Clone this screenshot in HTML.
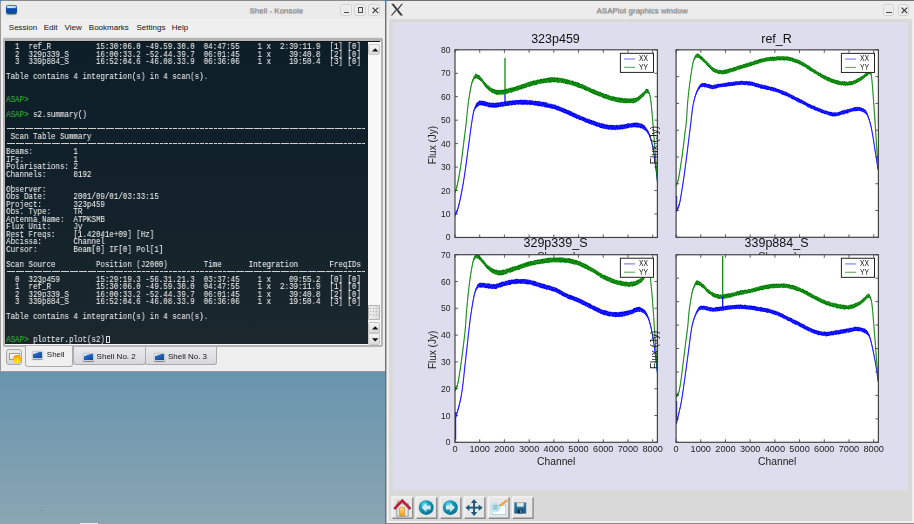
<!DOCTYPE html>
<html><head><meta charset="utf-8"><title>Shell - Konsole / ASAPlot</title>
<style>
*{margin:0;padding:0;box-sizing:border-box}
html,body{width:914px;height:524px;overflow:hidden;position:relative;font-family:"Liberation Sans",sans-serif;}
body{background:linear-gradient(180deg,#6793ad 0px,#6894ae 372px,#8aa6b2 524px);}
.abs{position:absolute}
/* konsole window */
#kwin{left:0;top:0;width:386px;height:372px;background:#efefef;border:1px solid #999;border-top-color:#8a8a8a;border-right-color:#8a8a8a;border-bottom-color:#9c9a98}
#ktitle{width:384px;height:17.5px;background:#ebebeb;}
#kicon{left:5.6px;top:5.2px;width:11px;height:8.4px;border-radius:2px;background:linear-gradient(180deg,#3f7fd0 0,#2a6cc0 35%,#0b4aa0 50%,#0f4e9e 100%);box-shadow:0 0.5px 1px rgba(0,0,0,.35)}
.ttl{color:#8a8a8a;font-size:8px;text-shadow:0 0.6px 0.9px rgba(90,90,90,.55);white-space:nowrap}
.tbtn{width:12px;height:12px;border:1px solid #d2d2d2;border-radius:3px;background:#ebebeb;box-shadow:inset 0 0 0 1px #f2f2f2}
#kmenu{width:384px;height:18px;background:#efefef;font-size:8px;color:#141414;}
#kmenu span{position:absolute;top:3.7px;white-space:nowrap}
#tframe{left:3px;top:37px;width:379.7px;height:310.2px;border-radius:2px;border-top:1.4px solid #e4e4e4;background:#b4b4b4}
#term{left:4.8px;top:41px;width:363.2px;height:303.2px;border-top:1px solid #151515;background:linear-gradient(180deg,#0d1e29 0,#12212a 50%,#1b272d 100%);overflow:hidden}
#tt{position:absolute;left:1.5px;top:2.0px;font-family:"Liberation Mono",monospace;font-size:8.6px;line-height:7.5px;color:#ececec;white-space:pre;transform:scaleX(0.871);transform-origin:0 0;opacity:0.999;will-change:transform;text-shadow:0.3px 0 0 rgba(236,236,236,0.3)}
#tt .g{color:#20aa20}
#tt .cur{outline:1px solid #e0e0e0;outline-offset:-1px}
#sbar{left:368px;top:41px;width:11.8px;height:303.2px;background:#f8f8f8;border-top:1px solid #151515}
.sbtn{width:11.4px;height:11.4px;left:0.4px;border:1px solid #c8c8c8;border-radius:2px;background:linear-gradient(180deg,#f6f6f6,#dadada)}
/* tabs */
.tab{height:17.6px;top:347px;border:1px solid #ababab;border-top:none;border-radius:0 0 3px 3px;background:linear-gradient(180deg,#ebebef,#d8d8dc);font-size:8px;color:#161616;white-space:nowrap}
.tab.act{top:346px;height:20.6px;background:#f0f0f0;border-color:#acacac}
.ticon{width:11px;height:8.4px;border-radius:1.5px;border:0.8px solid #c6ced8;background:linear-gradient(160deg,#f0f6ff 0,#c0d4f0 22%,#2a68bc 30%,#0a4a9e 100%);box-shadow:0 0.6px 1px rgba(0,0,0,.4)}
/* plot window */
#pwin{left:385px;top:0;width:530px;height:524px;background:#efefef;border:1px solid #6e6e6e;border-top-color:#707070;border-bottom-color:#8a8a8a}
#pframe{left:388.6px;top:19px;width:523px;height:501.6px;background:#d9d9d9}
#canvas{left:392.5px;top:22.2px;width:515.7px;height:467.8px;background:#dedded}
.pbtn{top:497px;width:21px;height:21px;border:1px solid #c3c3c3;border-right-color:#9a9a9a;border-bottom-color:#9a9a9a;background:#e6e6e6}
svg text.ti{font-size:12.5px;fill:#111}
svg text.tk{font-size:8.5px;fill:#222}
svg text.al{font-size:10.3px;fill:#222}
svg text.lg{font-size:8.4px;fill:#111}
svg text.fl{font-size:10px}
.dash{left:6.6px;width:359.2px;height:1px;background:repeating-linear-gradient(90deg,#cfcfcf 0,#cfcfcf 3.75px,rgba(120,130,135,.5) 3.75px,rgba(120,130,135,.5) 4.49px,#cfcfcf 4.49px,#cfcfcf 8.24px,#17232b 8.24px,#17232b 8.98px)}

</style></head><body>
<div class="abs" style="left:40.8px;top:510.2px;width:1.2px;height:1.2px;background:#4a6a7a;border-radius:50%"></div>
<div class="abs" style="left:80px;top:523px;width:18px;height:1px;background:#e8ecee"></div>
<div id="kwin" class="abs"></div>
<div class="abs" style="left:0;top:0;width:2px;height:2px;background:#3a8ac8;border-radius:1px"></div>
<div class="abs" style="left:384px;top:0;width:2px;height:2px;background:#3a8ac8;border-radius:1px"></div>
<div id="ktitle" class="abs" style="left:1px;top:1px"></div>
<div class="abs" style="left:1px;top:18.5px;width:384px;height:1px;background:#e4e4e4"></div>
<div id="kicon" class="abs"><div class="abs" style="left:1px;top:1px;width:9px;height:2.2px;background:linear-gradient(90deg,#f4f8ff,#c8dcf4);border-radius:1px;opacity:.9"></div></div>
<div class="abs ttl" style="left:249.4px;top:6.4px">Shell - Konsole</div>
<div class="abs tbtn" style="left:339.7px;top:4px"><div class="abs" style="left:3px;top:6.6px;width:5px;height:1.7px;background:#4a4a4a"></div></div>
<div class="abs tbtn" style="left:354px;top:4px"><div class="abs" style="left:2.6px;top:2.2px;width:5.8px;height:5.8px;border:1.2px solid #4a4a4a"></div></div>
<div class="abs tbtn" style="left:368.4px;top:4px"><svg class="abs" style="left:2.2px;top:2.2px" width="7" height="7"><path d="M0.6 0.6 L6.2 6.2 M6.2 0.6 L0.6 6.2" stroke="#3a3a3a" stroke-width="1.15"/></svg></div>
<div id="kmenu" class="abs" style="left:1px;top:19px">
<span style="left:7.8px">Session</span><span style="left:42.7px">Edit</span><span style="left:63.6px">View</span><span style="left:87.8px">Bookmarks</span><span style="left:135.5px">Settings</span><span style="left:170.8px">Help</span>
</div>
<div id="tframe" class="abs"></div>
<div class="abs" style="left:4.6px;top:41px;width:376.2px;height:304px;background:#f8f8f8"></div>
<div id="term" class="abs"><div id="tt">  1  ref_R          15:30:06.0 -49.59.30.0  04:47:55    1 x  2:39:11.9  [1] [0]
  2  329p339_S      16:00:33.2 -52.44.39.7  06:01:45    1 x    39:40.8  [2] [0]
  3  339p884_S      16:52:04.6 -46.08.33.9  06:36:06    1 x    19:50.4  [3] [0]

Table contains 4 integration(s) in 4 scan(s).


<span class="g">ASAP&gt;</span>

<span class="g">ASAP&gt;</span> s2.summary()


 Scan Table Summary

Beams:         1
IFs:           1
Polarisations: 2
Channels:      8192

Observer:
Obs Date:      2001/09/01/03:33:15
Project:       323p459
Obs. Type:     TR
Antenna Name:  ATPKSMB
Flux Unit:     Jy
Rest Freqs:    [1.42041e+09] [Hz]
Abcissa:       Channel
Cursor:        Beam[0] IF[0] Pol[1]

Scan Source         Position (J2000)        Time      Integration       FreqIDs

  0  323p459        15:29:19.3 -56.31.21.3  03:37:45    1 x    09:55.2  [0] [0]
  1  ref_R          15:30:06.0 -49.59.30.0  04:47:55    1 x  2:39:11.9  [1] [0]
  2  329p339_S      16:00:33.2 -52.44.39.7  06:01:45    1 x    39:40.8  [2] [0]
  3  339p884_S      16:52:04.6 -46.08.33.9  06:36:06    1 x    19:50.4  [3] [0]

Table contains 4 integration(s) in 4 scan(s).


<span class="g">ASAP&gt;</span> plotter.plot(s2)</div></div>
<div class="abs dash" style="top:127.7px"></div><div class="abs dash" style="top:143.0px"></div><div class="abs dash" style="top:270.9px"></div>
<div class="abs" style="left:105.9px;top:335.5px;width:4.5px;height:7.4px;border:1px solid #dcdcdc"></div>
<div id="sbar" class="abs">
<div class="abs sbtn" style="top:1.7px"><svg class="abs" style="left:2.2px;top:3.6px" width="7" height="4"><path d="M0 3.6 L3.2 0.2 L6.4 3.6Z" fill="#111"/></svg></div>
<div class="abs sbtn" style="top:263px;height:15px;border-radius:1px;border-color:#b4b4b4;background:linear-gradient(90deg,#eeeeee,#dcdcdc)"><svg class="abs" style="left:-0.6px;top:1.4px" width="10" height="10"><g fill="#a4a4a4"><circle cx="1.5" cy="1.5" r="0.6"/><circle cx="4.4" cy="1.5" r="0.6"/><circle cx="7.3" cy="1.5" r="0.6"/><circle cx="1.5" cy="4.6" r="0.6"/><circle cx="4.4" cy="4.6" r="0.6"/><circle cx="7.3" cy="4.6" r="0.6"/><circle cx="1.5" cy="7.8" r="0.6"/><circle cx="4.4" cy="7.8" r="0.6"/><circle cx="7.3" cy="7.8" r="0.6"/></g></svg></div>
<div class="abs sbtn" style="top:280px;border-radius:2px 2px 0 0"><svg class="abs" style="left:2.2px;top:3.4px" width="7" height="4"><path d="M0 3.6 L3.2 0.2 L6.4 3.6Z" fill="#111"/></svg></div>
<div class="abs sbtn" style="top:291.4px;border-radius:0 0 2px 2px"><svg class="abs" style="left:2.2px;top:3.4px" width="7" height="4"><path d="M0 0.2 L3.2 3.6 L6.4 0.2Z" fill="#111"/></svg></div>
</div>
<!-- tabs -->
<div class="abs" style="left:6.4px;top:349.2px;width:16px;height:15.7px;border:1px solid #a9a9a9;border-radius:3px;background:linear-gradient(180deg,#ececec,#d2d2d2)">
 <div class="abs" style="left:1.5px;top:2.6px;width:11px;height:7px;background:linear-gradient(180deg,#fbfbfb,#e6e6e6);border:1px solid #9c9c9c"></div>
 <div class="abs" style="left:5.6px;top:5px;width:7.8px;height:7.8px;border-radius:50%;background:radial-gradient(circle at 50% 80%,#fff000 0,#ffc400 45%,#ff7a00 100%)"></div>
</div>
<div class="abs tab" style="left:145.3px;width:72px"><div class="abs ticon" style="left:7.6px;top:5.6px"></div><span class="abs" style="left:21.6px;top:4.8px">Shell No. 3</span></div>
<div class="abs tab" style="left:73px;width:72.5px"><div class="abs ticon" style="left:8.6px;top:5.6px"></div><span class="abs" style="left:22.6px;top:4.8px">Shell No. 2</span></div>
<div class="abs tab act" style="left:24.8px;width:48.6px"><div class="abs ticon" style="left:6.2px;top:5px"></div><span class="abs" style="left:21px;top:4.2px">Shell</span></div>

<!-- plot window -->
<div id="pwin" class="abs"></div>
<div class="abs" style="left:386px;top:1px;width:527px;height:18px;background:#ececec"></div>
<div class="abs" style="left:384.5px;top:0;width:2px;height:2px;background:#3a8ac8;border-radius:1px"></div>
<svg class="abs" style="left:390px;top:3px" width="14" height="14" viewBox="390 3 14 14"><path d="M391.2 3.8 H393.6 L403 15.6 H400.4 Z" fill="#3c3c3c"/><path d="M403 3.8 H401.5 L396.4 10 L397.3 11 Z M390.8 15.6 H392.3 L396.4 10.8 L395.5 9.8 Z" fill="#484848"/></svg>
<div class="abs ttl" style="left:596.5px;top:6.2px">ASAPlot graphics window</div>
<div class="abs tbtn" style="left:882.6px;top:3.8px;width:11.4px;height:12.2px"><div class="abs" style="left:2.6px;top:7.2px;width:6px;height:1.3px;background:#4a4a4a"></div></div>
<div class="abs tbtn" style="left:897.5px;top:3.8px;width:11.5px;height:12.2px"><svg class="abs" style="left:2.1px;top:2.1px" width="7" height="7"><path d="M0.6 0.6 L6.2 6.2 M6.2 0.6 L0.6 6.2" stroke="#333" stroke-width="1.15"/></svg></div>
<div id="pframe" class="abs"></div>
<div class="abs" style="left:386px;top:1px;width:1px;height:522px;background:#b8b8b8"></div>
<div id="canvas" class="abs"></div>
<svg class="abs" style="left:0;top:0" width="914" height="524">
<defs>
<clipPath id="clip_tl"><rect x="455.0" y="49.8" width="202.39999999999998" height="187.64999999999998"/></clipPath>
<clipPath id="clip_tr"><rect x="676.1" y="49.85" width="202.29999999999995" height="187.45000000000002"/></clipPath>
<clipPath id="clip_bl"><rect x="455.0" y="254.7" width="202.39999999999998" height="187.60000000000002"/></clipPath>
<clipPath id="clip_br"><rect x="676.1" y="254.75" width="202.29999999999995" height="187.55"/></clipPath>
</defs>
<text x="555.50" y="42.50" class="ti" text-anchor="middle">323p459</text>
<text x="450.5" y="240.45" class="tk" text-anchor="end" textLength="4.75" lengthAdjust="spacingAndGlyphs">0</text>
<text x="450.5" y="216.99" class="tk" text-anchor="end" textLength="9.50" lengthAdjust="spacingAndGlyphs">10</text>
<text x="450.5" y="193.54" class="tk" text-anchor="end" textLength="9.50" lengthAdjust="spacingAndGlyphs">20</text>
<text x="450.5" y="170.08" class="tk" text-anchor="end" textLength="9.50" lengthAdjust="spacingAndGlyphs">30</text>
<text x="450.5" y="146.62" class="tk" text-anchor="end" textLength="9.50" lengthAdjust="spacingAndGlyphs">40</text>
<text x="450.5" y="123.17" class="tk" text-anchor="end" textLength="9.50" lengthAdjust="spacingAndGlyphs">50</text>
<text x="450.5" y="99.71" class="tk" text-anchor="end" textLength="9.50" lengthAdjust="spacingAndGlyphs">60</text>
<text x="450.5" y="76.26" class="tk" text-anchor="end" textLength="9.50" lengthAdjust="spacingAndGlyphs">70</text>
<text x="450.5" y="52.80" class="tk" text-anchor="end" textLength="9.50" lengthAdjust="spacingAndGlyphs">80</text>
<text x="435.70" y="145.03" class="al fl" text-anchor="middle" transform="rotate(-90 435.70 145.03)">Flux (Jy)</text>
<rect x="455.0" y="49.8" width="202.39999999999998" height="187.64999999999998" fill="#fff"/>
<g clip-path="url(#clip_tl)">
<polygon points="455.00,213.24 455.50,212.06 456.00,211.22 456.50,210.65 457.00,209.60 457.50,208.16 458.00,207.22 458.50,205.17 459.00,203.30 459.50,201.38 460.00,199.25 460.50,196.95 461.00,194.54 461.50,191.96 462.00,189.32 462.50,186.57 463.00,183.61 463.50,180.74 464.00,177.74 464.50,174.49 465.00,171.44 465.50,168.01 466.00,164.28 466.50,160.66 467.00,156.83 467.50,152.89 468.00,149.11 468.50,145.32 469.00,141.69 469.50,137.99 470.00,134.27 470.50,130.66 471.00,127.13 471.50,123.64 472.00,120.28 472.50,117.23 473.00,114.14 473.50,111.60 474.00,109.07 474.50,107.62 475.00,106.16 475.50,104.64 476.00,104.01 476.50,103.04 477.00,102.61 477.50,102.02 478.00,102.13 478.50,101.33 479.00,100.94 479.50,100.32 480.00,100.66 480.50,100.44 481.00,100.95 481.50,100.70 482.00,100.81 482.50,101.04 483.00,100.55 483.50,101.05 484.00,100.65 484.50,101.13 485.00,101.26 485.50,101.37 486.00,101.48 486.50,102.09 487.00,101.97 487.50,102.28 488.00,102.27 488.50,102.66 489.00,102.00 489.50,102.79 490.00,102.48 490.50,102.90 491.00,102.46 491.50,102.71 492.00,103.24 492.50,102.63 493.00,102.56 493.50,102.60 494.00,102.89 494.50,103.25 495.00,103.17 495.50,102.47 496.00,102.76 496.50,103.04 497.00,102.34 497.50,102.49 498.00,102.49 498.50,102.58 499.00,102.47 499.50,102.54 500.00,102.64 500.50,101.80 501.00,102.08 501.50,101.93 502.00,102.05 502.50,101.58 503.00,102.15 503.50,101.77 504.00,102.00 504.50,101.85 505.00,101.03 505.50,101.25 506.00,101.40 506.50,101.25 507.00,100.88 507.50,101.29 508.00,101.00 508.50,100.86 509.00,101.09 509.50,100.87 510.00,100.59 510.50,100.40 511.00,101.01 511.50,100.25 512.00,101.02 512.50,100.29 513.00,100.18 513.50,100.72 514.00,100.41 514.50,100.00 515.00,100.67 515.50,100.07 516.00,99.88 516.50,100.08 517.00,99.85 517.50,100.27 518.00,100.26 518.50,100.08 519.00,100.23 519.50,100.06 520.00,99.50 520.50,99.83 521.00,100.04 521.50,100.10 522.00,99.49 522.50,99.95 523.00,99.48 523.50,99.91 524.00,99.93 524.50,99.61 525.00,99.77 525.50,99.95 526.00,100.12 526.50,99.74 527.00,100.20 527.50,99.78 528.00,100.58 528.50,100.30 529.00,100.25 529.50,99.91 530.00,100.58 530.50,100.12 531.00,100.28 531.50,100.28 532.00,100.41 532.50,100.14 533.00,100.77 533.50,100.76 534.00,100.98 534.50,101.17 535.00,101.08 535.50,100.50 536.00,100.63 536.50,101.34 537.00,100.96 537.50,101.13 538.00,101.10 538.50,101.11 539.00,101.49 539.50,100.98 540.00,101.49 540.50,101.43 541.00,101.50 541.50,101.99 542.00,102.18 542.50,101.96 543.00,101.73 543.50,101.78 544.00,101.94 544.50,102.59 545.00,101.97 545.50,102.17 546.00,102.20 546.50,102.62 547.00,102.37 547.50,103.26 548.00,103.38 548.50,103.50 549.00,103.41 549.50,103.53 550.00,103.71 550.50,103.49 551.00,104.09 551.50,103.73 552.00,104.24 552.50,103.93 553.00,104.66 553.50,104.54 554.00,104.14 554.50,104.65 555.00,104.57 555.50,104.87 556.00,105.09 556.50,105.63 557.00,105.48 557.50,106.14 558.00,105.65 558.50,105.71 559.00,106.00 559.50,106.91 560.00,106.86 560.50,107.09 561.00,107.48 561.50,107.24 562.00,107.30 562.50,107.94 563.00,107.67 563.50,107.95 564.00,108.75 564.50,108.41 565.00,108.52 565.50,109.34 566.00,109.23 566.50,109.38 567.00,109.62 567.50,110.28 568.00,110.00 568.50,110.25 569.00,110.30 569.50,110.54 570.00,111.18 570.50,111.06 571.00,111.15 571.50,111.36 572.00,112.23 572.50,112.57 573.00,112.25 573.50,112.86 574.00,112.78 574.50,112.67 575.00,113.40 575.50,113.73 576.00,113.78 576.50,113.82 577.00,114.53 577.50,114.51 578.00,114.94 578.50,114.69 579.00,114.76 579.50,115.37 580.00,115.58 580.50,115.64 581.00,116.14 581.50,116.31 582.00,116.45 582.50,116.54 583.00,117.08 583.50,116.69 584.00,117.05 584.50,117.50 585.00,117.89 585.50,117.49 586.00,118.24 586.50,118.44 587.00,118.64 587.50,118.88 588.00,118.34 588.50,119.10 589.00,119.25 589.50,118.98 590.00,119.35 590.50,119.92 591.00,119.88 591.50,119.67 592.00,120.30 592.50,120.18 593.00,120.91 593.50,120.53 594.00,120.67 594.50,120.81 595.00,121.13 595.50,121.58 596.00,122.04 596.50,121.81 597.00,121.78 597.50,122.46 598.00,122.57 598.50,122.50 599.00,122.48 599.50,122.51 600.00,123.35 600.50,123.45 601.00,123.05 601.50,123.33 602.00,123.40 602.50,123.29 603.00,123.46 603.50,123.66 604.00,123.83 604.50,124.28 605.00,124.15 605.50,124.65 606.00,124.22 606.50,124.30 607.00,124.41 607.50,124.73 608.00,124.86 608.50,124.88 609.00,125.29 609.50,124.61 610.00,124.93 610.50,125.11 611.00,125.00 611.50,124.88 612.00,125.21 612.50,124.83 613.00,124.77 613.50,125.26 614.00,125.50 614.50,124.94 615.00,124.74 615.50,125.49 616.00,124.98 616.50,124.87 617.00,124.76 617.50,125.46 618.00,125.45 618.50,124.60 619.00,125.34 619.50,125.23 620.00,124.81 620.50,124.86 621.00,124.52 621.50,124.94 622.00,124.21 622.50,124.76 623.00,124.18 623.50,124.72 624.00,124.27 624.50,124.57 625.00,124.23 625.50,124.14 626.00,123.68 626.50,123.83 627.00,124.10 627.50,123.17 628.00,123.18 628.50,123.08 629.00,123.61 629.50,123.41 630.00,123.49 630.50,123.51 631.00,123.52 631.50,123.01 632.00,123.27 632.50,123.14 633.00,122.45 633.50,122.72 634.00,122.93 634.50,122.45 635.00,122.78 635.50,122.54 636.00,122.78 636.50,122.62 637.00,122.58 637.50,122.73 638.00,122.94 638.50,122.68 639.00,122.70 639.50,123.44 640.00,123.61 640.50,123.78 641.00,123.18 641.50,123.40 642.00,124.24 642.50,123.84 643.00,124.78 643.50,124.84 644.00,125.22 644.50,125.30 645.00,126.49 645.50,126.79 646.00,127.16 646.50,128.24 647.00,128.86 647.50,129.53 648.00,130.19 648.50,131.31 649.00,132.40 649.50,133.68 650.00,135.09 650.50,136.54 651.00,138.29 651.50,140.11 652.00,142.30 652.50,144.58 653.00,146.90 653.50,150.09 654.00,153.44 654.50,157.40 655.00,161.39 655.50,164.95 656.00,168.86 656.50,172.58 657.00,176.50 657.50,180.14 657.50,181.40 657.00,177.70 656.50,173.87 656.00,169.98 655.50,166.22 655.00,162.66 654.50,158.68 654.00,154.85 653.50,151.39 653.00,148.73 652.50,146.23 652.00,144.49 651.50,142.53 651.00,140.91 650.50,139.36 650.00,137.98 649.50,136.86 649.00,135.50 648.50,134.87 648.00,134.22 647.50,132.84 647.00,132.79 646.50,131.73 646.00,131.00 645.50,130.51 645.00,130.72 644.50,129.68 644.00,129.80 643.50,129.73 643.00,128.73 642.50,128.79 642.00,128.78 641.50,128.09 641.00,128.62 640.50,128.17 640.00,127.89 639.50,127.50 639.00,127.49 638.50,127.83 638.00,127.36 637.50,127.83 637.00,127.73 636.50,127.24 636.00,127.52 635.50,127.18 635.00,127.05 634.50,127.53 634.00,127.19 633.50,126.98 633.00,127.27 632.50,127.62 632.00,127.49 631.50,127.67 631.00,127.45 630.50,127.61 630.00,127.53 629.50,127.81 629.00,127.75 628.50,127.84 628.00,128.22 627.50,128.44 627.00,128.34 626.50,128.17 626.00,128.89 625.50,128.21 625.00,128.99 624.50,128.66 624.00,129.20 623.50,128.67 623.00,129.33 622.50,129.62 622.00,129.14 621.50,129.03 621.00,129.37 620.50,129.72 620.00,129.59 619.50,129.62 619.00,129.39 618.50,129.35 618.00,130.16 617.50,129.79 617.00,129.57 616.50,129.71 616.00,129.46 615.50,130.25 615.00,130.19 614.50,129.58 614.00,129.65 613.50,129.50 613.00,130.23 612.50,130.11 612.00,129.45 611.50,129.83 611.00,129.91 610.50,129.74 610.00,129.54 609.50,129.40 609.00,129.47 608.50,129.71 608.00,129.48 607.50,129.04 607.00,129.58 606.50,129.33 606.00,128.84 605.50,129.04 605.00,129.03 604.50,128.59 604.00,128.80 603.50,128.91 603.00,128.60 602.50,128.62 602.00,128.32 601.50,127.96 601.00,128.10 600.50,127.89 600.00,128.06 599.50,127.56 599.00,126.96 598.50,126.86 598.00,126.89 597.50,126.41 597.00,126.48 596.50,126.87 596.00,126.23 595.50,126.06 595.00,126.18 594.50,125.52 594.00,125.16 593.50,125.59 593.00,125.06 592.50,125.01 592.00,124.37 591.50,124.96 591.00,124.77 590.50,124.35 590.00,123.69 589.50,124.16 589.00,123.68 588.50,123.85 588.00,122.98 587.50,122.74 587.00,122.93 586.50,122.79 586.00,122.33 585.50,122.70 585.00,122.34 584.50,121.67 584.00,121.69 583.50,121.13 583.00,121.03 582.50,120.91 582.00,120.65 581.50,120.32 581.00,120.31 580.50,120.09 580.00,120.02 579.50,120.17 579.00,119.62 578.50,119.23 578.00,119.42 577.50,118.73 577.00,118.96 576.50,118.96 576.00,117.91 575.50,118.00 575.00,118.05 574.50,117.85 574.00,117.31 573.50,117.40 573.00,117.09 572.50,116.97 572.00,116.33 571.50,116.60 571.00,116.02 570.50,115.95 570.00,115.45 569.50,115.49 569.00,115.41 568.50,114.76 568.00,114.37 567.50,114.83 567.00,114.36 566.50,113.69 566.00,113.90 565.50,113.33 565.00,113.73 564.50,112.91 564.00,113.20 563.50,112.60 563.00,112.97 562.50,112.17 562.00,111.91 561.50,112.11 561.00,112.00 560.50,111.22 560.00,111.10 559.50,111.38 559.00,110.49 558.50,110.64 558.00,110.85 557.50,110.51 557.00,110.52 556.50,109.79 556.00,110.19 555.50,109.60 555.00,109.31 554.50,109.05 554.00,108.85 553.50,108.65 553.00,108.74 552.50,108.97 552.00,108.92 551.50,108.40 551.00,108.51 550.50,108.42 550.00,107.66 549.50,107.99 549.00,107.71 548.50,107.84 548.00,108.04 547.50,107.59 547.00,107.58 546.50,107.46 546.00,107.32 545.50,107.55 545.00,107.39 544.50,107.22 544.00,106.41 543.50,106.57 543.00,106.30 542.50,106.90 542.00,106.88 541.50,106.13 541.00,106.55 540.50,106.32 540.00,106.30 539.50,105.67 539.00,106.16 538.50,106.29 538.00,106.25 537.50,105.50 537.00,106.03 536.50,105.61 536.00,105.54 535.50,105.67 535.00,105.23 534.50,105.72 534.00,105.20 533.50,105.06 533.00,105.27 532.50,104.83 532.00,105.19 531.50,104.87 531.00,104.85 530.50,104.66 530.00,105.46 529.50,104.81 529.00,104.67 528.50,104.60 528.00,104.56 527.50,104.98 527.00,104.76 526.50,104.46 526.00,104.74 525.50,104.66 525.00,104.47 524.50,104.52 524.00,104.87 523.50,104.87 523.00,104.72 522.50,104.74 522.00,104.97 521.50,104.58 521.00,104.83 520.50,104.44 520.00,104.28 519.50,104.35 519.00,104.83 518.50,104.90 518.00,104.62 517.50,104.33 517.00,104.53 516.50,104.62 516.00,104.64 515.50,105.30 515.00,104.66 514.50,105.10 514.00,105.06 513.50,105.07 513.00,104.93 512.50,105.33 512.00,105.16 511.50,105.46 511.00,105.16 510.50,105.62 510.00,105.12 509.50,105.53 509.00,105.93 508.50,105.92 508.00,105.38 507.50,106.08 507.00,106.09 506.50,105.80 506.00,105.76 505.50,106.13 505.00,106.03 504.50,106.17 504.00,106.51 503.50,106.32 503.00,106.71 502.50,106.79 502.00,106.50 501.50,106.38 501.00,106.73 500.50,106.65 500.00,107.24 499.50,106.61 499.00,107.24 498.50,107.15 498.00,107.58 497.50,107.10 497.00,107.27 496.50,107.79 496.00,107.90 495.50,107.62 495.00,107.48 494.50,107.58 494.00,107.52 493.50,108.11 493.00,107.60 492.50,107.45 492.00,107.42 491.50,107.27 491.00,107.41 490.50,107.48 490.00,107.47 489.50,107.35 489.00,107.14 488.50,107.04 488.00,107.16 487.50,106.61 487.00,106.16 486.50,106.62 486.00,106.24 485.50,106.40 485.00,106.31 484.50,105.76 484.00,106.03 483.50,105.47 483.00,105.51 482.50,105.64 482.00,105.32 481.50,105.19 481.00,105.47 480.50,105.13 480.00,105.28 479.50,105.21 479.00,105.58 478.50,105.91 478.00,106.40 477.50,106.63 477.00,106.92 476.50,107.64 476.00,107.95 475.50,108.66 475.00,109.40 474.50,110.18 474.00,111.39 473.50,113.46 473.00,115.61 472.50,118.53 472.00,121.77 471.50,124.81 471.00,128.32 470.50,131.88 470.00,135.49 469.50,139.10 469.00,143.04 468.50,146.66 468.00,150.34 467.50,153.99 467.00,157.97 466.50,161.75 466.00,165.58 465.50,169.18 465.00,172.69 464.50,176.14 464.00,179.08 463.50,182.36 463.00,185.16 462.50,188.25 462.00,190.97 461.50,193.53 461.00,196.26 460.50,198.62 460.00,201.18 459.50,203.41 459.00,205.46 458.50,207.49 458.00,209.62 457.50,211.17 457.00,212.62 456.50,213.91 456.00,214.64 455.50,215.92 455.00,216.73" fill="#0000ff" stroke="none"/>
<polyline points="455.00,215.00 455.50,214.02 456.00,213.09 456.50,212.10 457.00,210.99 457.50,209.72 458.00,208.20 458.50,206.41 459.00,204.45 459.50,202.35 460.00,200.12 460.50,197.78 461.00,195.33 461.50,192.78 462.00,190.13 462.50,187.38 463.00,184.52 463.50,181.56 464.00,178.49 464.50,175.32 465.00,172.03 465.50,168.56 466.00,164.92 466.50,161.15 467.00,157.32 467.50,153.49 468.00,149.72 468.50,146.03 469.00,142.33 469.50,138.60 470.00,134.89 470.50,131.23 471.00,127.66 471.50,124.24 472.00,121.04 472.50,117.88 473.00,114.90 473.50,112.37 474.00,110.37 474.50,108.82 475.00,107.63 475.50,106.71 476.00,105.97 476.50,105.35 477.00,104.83 477.50,104.38 478.00,103.96 478.50,103.56 479.00,103.20 479.50,102.97 480.00,102.88 480.50,102.87 481.00,102.90 481.50,102.95 482.00,103.00 482.50,103.07 483.00,103.17 483.50,103.28 484.00,103.41 484.50,103.54 485.00,103.68 485.50,103.82 486.00,103.96 486.50,104.10 487.00,104.24 487.50,104.38 488.00,104.51 488.50,104.64 489.00,104.76 489.50,104.87 490.00,104.97 490.50,105.06 491.00,105.14 491.50,105.21 492.00,105.26 492.50,105.29 493.00,105.31 493.50,105.31 494.00,105.30 494.50,105.28 495.00,105.25 495.50,105.20 496.00,105.15 496.50,105.10 497.00,105.03 497.50,104.96 498.00,104.89 498.50,104.81 499.00,104.73 499.50,104.65 500.00,104.57 500.50,104.48 501.00,104.40 501.50,104.31 502.00,104.23 502.50,104.15 503.00,104.07 503.50,104.00 504.00,103.93 504.50,103.86 505.00,103.80 505.50,103.74 506.00,103.68 506.50,103.62 507.00,103.56 507.50,103.49 508.00,103.43 508.50,103.37 509.00,103.30 509.50,103.24 510.00,103.17 510.50,103.11 511.00,103.04 511.50,102.98 512.00,102.92 512.50,102.86 513.00,102.80 513.50,102.74 514.00,102.69 514.50,102.63 515.00,102.58 515.50,102.53 516.00,102.49 516.50,102.44 517.00,102.40 517.50,102.37 518.00,102.34 518.50,102.31 519.00,102.29 519.50,102.27 520.00,102.26 520.50,102.25 521.00,102.24 521.50,102.24 522.00,102.24 522.50,102.25 523.00,102.26 523.50,102.28 524.00,102.29 524.50,102.32 525.00,102.34 525.50,102.37 526.00,102.40 526.50,102.43 527.00,102.47 527.50,102.50 528.00,102.54 528.50,102.58 529.00,102.62 529.50,102.66 530.00,102.70 530.50,102.74 531.00,102.78 531.50,102.83 532.00,102.87 532.50,102.92 533.00,102.96 533.50,103.01 534.00,103.06 534.50,103.11 535.00,103.17 535.50,103.22 536.00,103.28 536.50,103.34 537.00,103.40 537.50,103.46 538.00,103.53 538.50,103.59 539.00,103.66 539.50,103.73 540.00,103.81 540.50,103.88 541.00,103.96 541.50,104.05 542.00,104.13 542.50,104.22 543.00,104.31 543.50,104.40 544.00,104.49 544.50,104.58 545.00,104.68 545.50,104.78 546.00,104.88 546.50,104.98 547.00,105.08 547.50,105.19 548.00,105.30 548.50,105.41 549.00,105.52 549.50,105.64 550.00,105.76 550.50,105.88 551.00,106.01 551.50,106.14 552.00,106.28 552.50,106.41 553.00,106.56 553.50,106.70 554.00,106.85 554.50,107.01 555.00,107.16 555.50,107.33 556.00,107.50 556.50,107.67 557.00,107.85 557.50,108.04 558.00,108.23 558.50,108.42 559.00,108.62 559.50,108.82 560.00,109.02 560.50,109.23 561.00,109.44 561.50,109.65 562.00,109.86 562.50,110.07 563.00,110.29 563.50,110.51 564.00,110.72 564.50,110.94 565.00,111.16 565.50,111.37 566.00,111.59 566.50,111.80 567.00,112.02 567.50,112.23 568.00,112.44 568.50,112.66 569.00,112.88 569.50,113.10 570.00,113.32 570.50,113.54 571.00,113.77 571.50,113.99 572.00,114.22 572.50,114.45 573.00,114.67 573.50,114.90 574.00,115.13 574.50,115.36 575.00,115.58 575.50,115.81 576.00,116.03 576.50,116.26 577.00,116.48 577.50,116.70 578.00,116.92 578.50,117.13 579.00,117.35 579.50,117.56 580.00,117.77 580.50,117.98 581.00,118.18 581.50,118.39 582.00,118.60 582.50,118.81 583.00,119.01 583.50,119.22 584.00,119.42 584.50,119.62 585.00,119.82 585.50,120.02 586.00,120.22 586.50,120.42 587.00,120.62 587.50,120.81 588.00,121.01 588.50,121.20 589.00,121.39 589.50,121.58 590.00,121.77 590.50,121.95 591.00,122.14 591.50,122.32 592.00,122.50 592.50,122.68 593.00,122.86 593.50,123.05 594.00,123.23 594.50,123.41 595.00,123.60 595.50,123.78 596.00,123.96 596.50,124.14 597.00,124.32 597.50,124.50 598.00,124.67 598.50,124.85 599.00,125.01 599.50,125.18 600.00,125.34 600.50,125.49 601.00,125.64 601.50,125.79 602.00,125.93 602.50,126.06 603.00,126.19 603.50,126.31 604.00,126.42 604.50,126.52 605.00,126.62 605.50,126.71 606.00,126.80 606.50,126.88 607.00,126.95 607.50,127.03 608.00,127.09 608.50,127.16 609.00,127.21 609.50,127.26 610.00,127.31 610.50,127.35 611.00,127.39 611.50,127.43 612.00,127.45 612.50,127.48 613.00,127.50 613.50,127.51 614.00,127.52 614.50,127.53 615.00,127.53 615.50,127.53 616.00,127.52 616.50,127.51 617.00,127.49 617.50,127.47 618.00,127.43 618.50,127.39 619.00,127.34 619.50,127.28 620.00,127.22 620.50,127.16 621.00,127.08 621.50,127.01 622.00,126.93 622.50,126.85 623.00,126.76 623.50,126.67 624.00,126.58 624.50,126.49 625.00,126.40 625.50,126.31 626.00,126.22 626.50,126.13 627.00,126.04 627.50,125.95 628.00,125.87 628.50,125.80 629.00,125.73 629.50,125.66 630.00,125.59 630.50,125.52 631.00,125.44 631.50,125.36 632.00,125.28 632.50,125.20 633.00,125.12 633.50,125.05 634.00,124.99 634.50,124.95 635.00,124.92 635.50,124.92 636.00,124.94 636.50,124.98 637.00,125.04 637.50,125.11 638.00,125.19 638.50,125.28 639.00,125.38 639.50,125.49 640.00,125.62 640.50,125.76 641.00,125.92 641.50,126.10 642.00,126.30 642.50,126.53 643.00,126.79 643.50,127.08 644.00,127.43 644.50,127.82 645.00,128.25 645.50,128.74 646.00,129.28 646.50,129.89 647.00,130.57 647.50,131.34 648.00,132.19 648.50,133.14 649.00,134.18 649.50,135.33 650.00,136.60 650.50,138.02 651.00,139.59 651.50,141.33 652.00,143.26 652.50,145.40 653.00,147.81 653.50,150.71 654.00,154.16 654.50,158.01 655.00,161.95 655.50,165.66 656.00,169.39 656.50,173.18 657.00,177.00 657.50,180.84" fill="none" stroke="#0000ff" stroke-width="1.1"/>
<polyline points="455.00,216.08 456.30,212.27 457.60,209.17 458.90,205.24 460.20,199.14 461.50,192.72 462.80,185.54 464.10,177.79 465.40,168.92 466.70,159.24 468.00,149.94 469.30,140.15 470.60,130.67 471.90,121.98 473.20,113.55 474.50,108.28 475.80,105.65 477.10,104.14 478.40,104.47 479.70,102.51 481.00,102.30 482.30,103.51 483.60,102.24 484.90,102.32 486.20,104.69 487.50,105.25 488.80,104.02 490.10,105.45 491.40,103.60 492.70,104.97 494.00,105.57 495.30,104.38 496.60,104.57 497.90,105.28 499.20,105.01 500.50,103.30 501.80,104.97 503.10,102.62 504.40,105.48 505.70,102.70 507.00,102.72 508.30,102.37 509.60,104.90 510.90,102.33 512.20,103.26 513.50,104.42 514.80,104.14 516.10,100.91 517.40,102.45 518.70,102.65 520.00,102.95 521.30,101.68 522.60,101.66 523.90,100.60 525.20,100.76 526.50,102.60 527.80,101.08 529.10,101.61 530.40,102.16 531.70,101.38 533.00,101.36 534.30,104.55 535.60,103.01 536.90,102.38 538.20,104.26 539.50,102.06 540.80,103.06 542.10,105.72 543.40,105.73 544.70,105.09 546.00,103.49 547.30,104.53 548.60,103.83 549.90,104.78 551.20,104.45 552.50,105.15 553.80,107.24 555.10,105.85 556.40,106.48 557.70,109.47 559.00,108.07 560.30,108.59 561.60,108.31 562.90,111.24 564.20,111.40 565.50,111.53 566.80,112.32 568.10,111.15 569.40,112.25 570.70,113.91 572.00,115.73 573.30,115.87 574.60,115.87 575.90,116.05 577.20,114.95 578.50,118.44 579.80,116.23 581.10,116.98 582.40,119.41 583.70,120.34 585.00,120.78 586.30,120.18 587.60,119.77 588.90,119.79 590.20,123.02 591.50,123.93 592.80,121.93 594.10,124.50 595.40,123.42 596.70,123.58 598.00,124.69 599.30,123.45 600.60,125.33 601.90,124.88 603.20,126.96 604.50,126.53 605.80,128.02 607.10,128.32 608.40,126.52 609.70,126.53 611.00,128.89 612.30,127.48 613.60,126.13 614.90,125.98 616.20,129.19 617.50,127.74 618.80,125.84 620.10,127.25 621.40,127.04 622.70,126.59 624.00,128.12 625.30,127.87 626.60,124.83 627.90,124.70 629.20,125.38 630.50,126.66 631.80,125.73 633.10,125.89 634.40,125.22 635.70,123.93 637.00,126.12 638.30,123.58 639.60,126.19 640.90,124.85 642.20,126.30 643.50,128.63 644.80,128.20 646.10,128.10 647.40,130.99 648.70,133.94 650.00,135.70 651.30,140.22 652.60,145.24 653.90,153.51 655.20,163.33 656.50,173.18" fill="none" stroke="#fff" stroke-width="0.35" opacity="0.45"/>
<polygon points="455.00,190.76 455.50,189.26 456.00,188.23 456.50,186.48 457.00,184.75 457.50,182.82 458.00,180.48 458.50,177.83 459.00,175.35 459.50,172.42 460.00,169.67 460.50,166.49 461.00,163.35 461.50,159.82 462.00,156.00 462.50,152.21 463.00,147.95 463.50,143.92 464.00,139.97 464.50,136.10 465.00,132.29 465.50,128.28 466.00,124.05 466.50,119.51 467.00,114.33 467.50,109.25 468.00,104.69 468.50,100.82 469.00,97.32 469.50,94.21 470.00,90.91 470.50,88.29 471.00,85.45 471.50,83.08 472.00,81.16 472.50,79.52 473.00,78.29 473.50,76.91 474.00,76.07 474.50,75.26 475.00,74.44 475.50,73.43 476.00,73.34 476.50,74.19 477.00,74.44 477.50,74.38 478.00,74.72 478.50,74.97 479.00,74.98 479.50,75.53 480.00,75.99 480.50,76.70 481.00,76.94 481.50,77.89 482.00,78.49 482.50,79.14 483.00,79.51 483.50,80.68 484.00,80.99 484.50,81.94 485.00,82.10 485.50,83.04 486.00,83.47 486.50,83.64 487.00,84.25 487.50,85.17 488.00,85.56 488.50,85.26 489.00,86.46 489.50,86.62 490.00,86.43 490.50,87.58 491.00,87.80 491.50,88.07 492.00,88.49 492.50,88.44 493.00,88.59 493.50,89.07 494.00,89.47 494.50,89.04 495.00,89.20 495.50,89.54 496.00,90.02 496.50,89.74 497.00,89.72 497.50,89.95 498.00,89.59 498.50,90.03 499.00,89.94 499.50,90.29 500.00,89.88 500.50,89.69 501.00,89.71 501.50,90.12 502.00,89.46 502.50,89.69 503.00,89.92 503.50,89.79 504.00,89.28 504.50,89.65 505.00,89.09 505.50,88.90 506.00,88.96 506.50,88.53 507.00,88.78 507.50,88.67 508.00,88.72 508.50,88.03 509.00,88.45 509.50,87.99 510.00,88.13 510.50,87.53 511.00,87.39 511.50,88.08 512.00,87.08 512.50,87.29 513.00,87.63 513.50,87.11 514.00,87.36 514.50,86.76 515.00,86.93 515.50,86.61 516.00,86.51 516.50,86.08 517.00,85.72 517.50,85.46 518.00,85.83 518.50,85.45 519.00,85.78 519.50,85.29 520.00,84.60 520.50,85.17 521.00,84.34 521.50,84.36 522.00,84.51 522.50,83.91 523.00,84.17 523.50,83.47 524.00,84.02 524.50,83.82 525.00,83.09 525.50,83.19 526.00,83.29 526.50,82.81 527.00,82.84 527.50,82.45 528.00,82.12 528.50,81.86 529.00,82.42 529.50,81.79 530.00,81.29 530.50,81.62 531.00,81.20 531.50,81.65 532.00,80.82 532.50,80.94 533.00,80.53 533.50,80.48 534.00,80.27 534.50,80.86 535.00,80.14 535.50,80.48 536.00,80.29 536.50,80.11 537.00,79.75 537.50,79.60 538.00,79.21 538.50,79.92 539.00,79.65 539.50,79.39 540.00,78.88 540.50,79.02 541.00,78.95 541.50,78.64 542.00,78.64 542.50,78.88 543.00,78.98 543.50,78.55 544.00,78.09 544.50,78.26 545.00,78.67 545.50,78.24 546.00,78.21 546.50,77.96 547.00,77.88 547.50,77.48 548.00,77.96 548.50,77.84 549.00,77.59 549.50,77.29 550.00,77.40 550.50,77.57 551.00,77.22 551.50,77.48 552.00,77.02 552.50,77.61 553.00,77.73 553.50,77.09 554.00,77.57 554.50,77.08 555.00,77.31 555.50,77.42 556.00,77.83 556.50,77.24 557.00,77.93 557.50,77.17 558.00,77.30 558.50,77.88 559.00,78.10 559.50,77.50 560.00,77.94 560.50,78.34 561.00,78.09 561.50,78.41 562.00,78.36 562.50,78.25 563.00,78.10 563.50,78.31 564.00,78.99 564.50,78.82 565.00,78.92 565.50,78.58 566.00,79.51 566.50,79.24 567.00,79.00 567.50,79.58 568.00,79.82 568.50,79.68 569.00,80.02 569.50,79.61 570.00,80.50 570.50,80.52 571.00,80.77 571.50,80.36 572.00,80.88 572.50,80.48 573.00,80.64 573.50,80.76 574.00,81.52 574.50,81.91 575.00,81.73 575.50,81.38 576.00,81.73 576.50,82.52 577.00,82.12 577.50,82.11 578.00,82.24 578.50,82.64 579.00,82.70 579.50,82.90 580.00,83.52 580.50,83.94 581.00,83.59 581.50,84.31 582.00,84.30 582.50,83.98 583.00,84.58 583.50,84.83 584.00,84.68 584.50,85.48 585.00,85.08 585.50,85.39 586.00,86.10 586.50,86.36 587.00,86.76 587.50,86.30 588.00,87.17 588.50,87.55 589.00,87.00 589.50,87.48 590.00,87.64 590.50,87.81 591.00,88.63 591.50,88.80 592.00,88.65 592.50,89.26 593.00,89.07 593.50,89.08 594.00,89.36 594.50,89.60 595.00,90.32 595.50,90.36 596.00,89.99 596.50,90.88 597.00,90.73 597.50,91.36 598.00,90.79 598.50,91.67 599.00,91.66 599.50,91.74 600.00,91.79 600.50,91.80 601.00,92.17 601.50,92.71 602.00,93.14 602.50,92.77 603.00,92.72 603.50,93.74 604.00,93.25 604.50,93.96 605.00,93.88 605.50,94.00 606.00,94.09 606.50,93.93 607.00,94.37 607.50,94.80 608.00,94.69 608.50,95.07 609.00,95.28 609.50,95.49 610.00,95.53 610.50,95.88 611.00,96.07 611.50,96.30 612.00,96.19 612.50,96.46 613.00,96.11 613.50,96.24 614.00,96.82 614.50,96.70 615.00,96.56 615.50,97.16 616.00,97.10 616.50,97.30 617.00,97.22 617.50,97.03 618.00,97.85 618.50,97.20 619.00,97.54 619.50,97.50 620.00,97.71 620.50,97.57 621.00,98.12 621.50,97.84 622.00,98.29 622.50,98.12 623.00,98.02 623.50,98.49 624.00,98.66 624.50,98.05 625.00,98.07 625.50,98.23 626.00,98.57 626.50,98.29 627.00,98.83 627.50,98.32 628.00,98.42 628.50,98.39 629.00,98.55 629.50,98.75 630.00,98.29 630.50,98.52 631.00,98.25 631.50,98.58 632.00,98.80 632.50,98.35 633.00,98.23 633.50,97.89 634.00,97.84 634.50,98.48 635.00,97.71 635.50,98.02 636.00,97.46 636.50,97.55 637.00,97.38 637.50,96.99 638.00,96.66 638.50,96.19 639.00,95.87 639.50,95.45 640.00,95.27 640.50,94.58 641.00,94.39 641.50,93.71 642.00,93.35 642.50,92.80 643.00,92.82 643.50,92.00 644.00,91.72 644.50,91.02 645.00,90.64 645.50,89.55 646.00,88.76 646.50,88.79 647.00,88.93 647.50,88.71 648.00,89.49 648.50,89.55 649.00,91.20 649.50,92.64 650.00,94.75 650.50,97.77 651.00,101.63 651.50,106.55 652.00,112.13 652.50,118.03 653.00,123.96 653.50,130.09 654.00,136.70 654.50,143.33 655.00,150.02 655.50,156.55 656.00,162.93 656.50,169.40 657.00,175.94 657.50,182.37 657.50,183.13 657.00,176.56 656.50,170.14 656.00,163.77 655.50,157.30 655.00,150.71 654.50,144.07 654.00,137.43 653.50,130.92 653.00,124.70 652.50,118.95 652.00,113.04 651.50,107.40 651.00,102.72 650.50,99.20 650.00,96.55 649.50,95.20 649.00,94.05 648.50,93.71 648.00,93.53 647.50,93.06 647.00,93.78 646.50,93.00 646.00,93.52 645.50,93.55 645.00,94.23 644.50,95.29 644.00,95.98 643.50,96.63 643.00,97.11 642.50,97.15 642.00,97.35 641.50,98.46 641.00,98.28 640.50,99.16 640.00,99.48 639.50,100.37 639.00,100.26 638.50,100.93 638.00,101.37 637.50,101.32 637.00,101.50 636.50,102.53 636.00,102.12 635.50,102.47 635.00,102.66 634.50,102.78 634.00,103.28 633.50,103.48 633.00,103.28 632.50,103.19 632.00,103.11 631.50,103.02 631.00,103.11 630.50,103.31 630.00,103.03 629.50,102.95 629.00,103.55 628.50,103.07 628.00,103.07 627.50,103.09 627.00,102.95 626.50,103.14 626.00,103.16 625.50,103.16 625.00,103.14 624.50,103.07 624.00,103.32 623.50,103.00 623.00,102.97 622.50,103.00 622.00,102.51 621.50,102.60 621.00,103.06 620.50,102.90 620.00,102.36 619.50,102.90 619.00,102.17 618.50,102.58 618.00,102.04 617.50,102.53 617.00,101.82 616.50,102.16 616.00,101.85 615.50,101.40 615.00,101.45 614.50,102.01 614.00,101.25 613.50,101.10 613.00,100.75 612.50,101.33 612.00,100.84 611.50,100.63 611.00,100.76 610.50,100.44 610.00,100.03 609.50,99.68 609.00,100.10 608.50,100.01 608.00,99.86 607.50,99.58 607.00,98.97 606.50,98.99 606.00,98.85 605.50,98.47 605.00,98.96 604.50,98.75 604.00,97.83 603.50,97.91 603.00,97.89 602.50,97.49 602.00,97.90 601.50,96.85 601.00,96.83 600.50,96.85 600.00,96.28 599.50,96.43 599.00,96.53 598.50,95.96 598.00,95.67 597.50,95.44 597.00,95.47 596.50,95.26 596.00,94.98 595.50,94.63 595.00,94.68 594.50,94.80 594.00,93.81 593.50,94.18 593.00,93.98 592.50,93.74 592.00,93.12 591.50,93.30 591.00,92.95 590.50,92.84 590.00,92.34 589.50,92.29 589.00,91.74 588.50,91.77 588.00,91.37 587.50,91.07 587.00,90.71 586.50,91.18 586.00,90.78 585.50,90.10 585.00,90.45 584.50,90.20 584.00,89.90 583.50,89.12 583.00,89.23 582.50,88.77 582.00,88.69 581.50,88.48 581.00,88.67 580.50,88.00 580.00,88.30 579.50,88.07 579.00,88.02 578.50,87.87 578.00,87.60 577.50,87.39 577.00,87.00 576.50,86.87 576.00,86.95 575.50,86.26 575.00,86.36 574.50,86.31 574.00,85.94 573.50,85.74 573.00,85.63 572.50,85.40 572.00,85.40 571.50,85.21 571.00,84.77 570.50,84.87 570.00,84.78 569.50,84.50 569.00,84.32 568.50,84.51 568.00,84.61 567.50,84.59 567.00,83.89 566.50,84.07 566.00,84.02 565.50,84.11 565.00,84.03 564.50,83.33 564.00,83.02 563.50,83.56 563.00,83.09 562.50,82.99 562.00,82.68 561.50,82.76 561.00,83.17 560.50,82.34 560.00,82.59 559.50,82.42 559.00,82.72 558.50,82.70 558.00,82.85 557.50,82.78 557.00,82.74 556.50,82.26 556.00,82.15 555.50,81.92 555.00,81.88 554.50,82.49 554.00,82.43 553.50,82.04 553.00,82.18 552.50,82.00 552.00,82.20 551.50,82.57 551.00,82.29 550.50,82.66 550.00,82.65 549.50,82.75 549.00,82.63 548.50,82.36 548.00,82.96 547.50,82.25 547.00,82.58 546.50,83.11 546.00,83.21 545.50,82.72 545.00,83.09 544.50,82.92 544.00,83.16 543.50,83.33 543.00,83.66 542.50,83.12 542.00,83.13 541.50,83.93 541.00,83.62 540.50,83.68 540.00,83.86 539.50,83.77 539.00,83.87 538.50,83.86 538.00,84.13 537.50,84.11 537.00,84.63 536.50,84.91 536.00,84.81 535.50,85.38 535.00,84.82 534.50,85.18 534.00,85.52 533.50,85.61 533.00,85.54 532.50,85.38 532.00,86.05 531.50,86.31 531.00,86.07 530.50,85.95 530.00,86.91 529.50,86.73 529.00,87.08 528.50,86.60 528.00,86.64 527.50,86.96 527.00,87.25 526.50,87.88 526.00,87.84 525.50,87.75 525.00,87.91 524.50,88.30 524.00,88.76 523.50,88.82 523.00,88.54 522.50,88.47 522.00,89.22 521.50,89.66 521.00,89.62 520.50,89.37 520.00,89.57 519.50,89.62 519.00,89.72 518.50,90.44 518.00,90.54 517.50,90.74 517.00,90.73 516.50,90.71 516.00,90.70 515.50,91.48 515.00,91.32 514.50,91.37 514.00,91.65 513.50,91.76 513.00,91.83 512.50,92.32 512.00,92.60 511.50,92.64 511.00,92.96 510.50,92.46 510.00,92.54 509.50,92.58 509.00,92.82 508.50,93.17 508.00,92.91 507.50,93.67 507.00,93.96 506.50,93.79 506.00,93.71 505.50,93.90 505.00,93.97 504.50,94.36 504.00,94.04 503.50,94.64 503.00,94.19 502.50,94.65 502.00,94.84 501.50,94.35 501.00,94.44 500.50,94.58 500.00,95.14 499.50,94.33 499.00,94.44 498.50,94.78 498.00,94.39 497.50,94.88 497.00,95.07 496.50,94.59 496.00,94.85 495.50,94.28 495.00,94.08 494.50,93.69 494.00,93.48 493.50,93.32 493.00,93.25 492.50,93.16 492.00,93.03 491.50,92.80 491.00,91.75 490.50,92.07 490.00,91.09 489.50,90.79 489.00,90.93 488.50,89.94 488.00,89.51 487.50,88.97 487.00,88.76 486.50,88.14 486.00,87.67 485.50,87.35 485.00,86.49 484.50,86.10 484.00,85.34 483.50,84.15 483.00,84.09 482.50,82.99 482.00,82.10 481.50,81.79 481.00,81.00 480.50,81.13 480.00,80.46 479.50,80.07 479.00,79.89 478.50,79.24 478.00,78.96 477.50,78.89 477.00,78.45 476.50,78.47 476.00,78.36 475.50,78.48 475.00,78.68 474.50,78.76 474.00,79.80 473.50,80.50 473.00,81.42 472.50,82.47 472.00,83.83 471.50,85.22 471.00,87.49 470.50,90.00 470.00,92.75 469.50,95.67 469.00,98.85 468.50,102.12 468.00,105.91 467.50,110.25 467.00,115.24 466.50,120.44 466.00,125.11 465.50,129.30 465.00,133.37 464.50,137.30 464.00,141.17 463.50,145.03 463.00,149.22 462.50,153.25 462.00,157.33 461.50,161.00 461.00,164.63 460.50,167.94 460.00,171.24 459.50,174.13 459.00,176.89 458.50,179.57 458.00,182.31 457.50,184.81 457.00,187.23 456.50,189.25 456.00,190.84 455.50,192.48 455.00,193.72" fill="#008000" stroke="none"/>
<polyline points="455.00,192.10 455.50,190.78 456.00,189.42 456.50,187.88 457.00,185.99 457.50,183.77 458.00,181.36 458.50,178.80 459.00,176.11 459.50,173.30 460.00,170.37 460.50,167.27 461.00,163.98 461.50,160.48 462.00,156.69 462.50,152.69 463.00,148.59 463.50,144.50 464.00,140.54 464.50,136.66 465.00,132.79 465.50,128.80 466.00,124.60 466.50,119.92 467.00,114.82 467.50,109.83 468.00,105.35 468.50,101.54 469.00,98.08 469.50,94.85 470.00,91.83 470.50,89.04 471.00,86.51 471.50,84.29 472.00,82.45 472.50,80.94 473.00,79.69 473.50,78.65 474.00,77.75 474.50,76.95 475.00,76.34 475.50,76.08 476.00,76.11 476.50,76.25 477.00,76.38 477.50,76.54 478.00,76.74 478.50,77.00 479.00,77.32 479.50,77.70 480.00,78.12 480.50,78.60 481.00,79.14 481.50,79.76 482.00,80.41 482.50,81.09 483.00,81.78 483.50,82.47 484.00,83.15 484.50,83.81 485.00,84.44 485.50,85.04 486.00,85.60 486.50,86.10 487.00,86.57 487.50,87.02 488.00,87.46 488.50,87.89 489.00,88.30 489.50,88.69 490.00,89.07 490.50,89.43 491.00,89.78 491.50,90.11 492.00,90.43 492.50,90.72 493.00,91.00 493.50,91.25 494.00,91.48 494.50,91.68 495.00,91.84 495.50,91.98 496.00,92.08 496.50,92.17 497.00,92.23 497.50,92.28 498.00,92.31 498.50,92.33 499.00,92.34 499.50,92.35 500.00,92.34 500.50,92.33 501.00,92.32 501.50,92.30 502.00,92.30 502.50,92.29 503.00,92.24 503.50,92.08 504.00,91.89 504.50,91.73 505.00,91.60 505.50,91.48 506.00,91.36 506.50,91.25 507.00,91.14 507.50,91.02 508.00,90.91 508.50,90.79 509.00,90.67 509.50,90.55 510.00,90.43 510.50,90.30 511.00,90.17 511.50,90.04 512.00,89.90 512.50,89.76 513.00,89.62 513.50,89.48 514.00,89.33 514.50,89.18 515.00,89.02 515.50,88.87 516.00,88.70 516.50,88.54 517.00,88.38 517.50,88.21 518.00,88.05 518.50,87.88 519.00,87.71 519.50,87.54 520.00,87.37 520.50,87.20 521.00,87.03 521.50,86.86 522.00,86.69 522.50,86.52 523.00,86.35 523.50,86.18 524.00,86.01 524.50,85.85 525.00,85.68 525.50,85.51 526.00,85.35 526.50,85.19 527.00,85.02 527.50,84.86 528.00,84.71 528.50,84.55 529.00,84.40 529.50,84.25 530.00,84.10 530.50,83.96 531.00,83.81 531.50,83.67 532.00,83.53 532.50,83.39 533.00,83.25 533.50,83.11 534.00,82.98 534.50,82.85 535.00,82.71 535.50,82.59 536.00,82.46 536.50,82.34 537.00,82.22 537.50,82.10 538.00,81.98 538.50,81.87 539.00,81.76 539.50,81.65 540.00,81.55 540.50,81.45 541.00,81.35 541.50,81.26 542.00,81.17 542.50,81.08 543.00,81.00 543.50,80.91 544.00,80.83 544.50,80.74 545.00,80.66 545.50,80.58 546.00,80.50 546.50,80.42 547.00,80.35 547.50,80.28 548.00,80.21 548.50,80.15 549.00,80.09 549.50,80.04 550.00,79.99 550.50,79.94 551.00,79.90 551.50,79.87 552.00,79.84 552.50,79.81 553.00,79.80 553.50,79.79 554.00,79.79 554.50,79.79 555.00,79.81 555.50,79.83 556.00,79.86 556.50,79.89 557.00,79.93 557.50,79.98 558.00,80.04 558.50,80.10 559.00,80.16 559.50,80.24 560.00,80.31 560.50,80.40 561.00,80.48 561.50,80.57 562.00,80.67 562.50,80.76 563.00,80.86 563.50,80.97 564.00,81.07 564.50,81.18 565.00,81.29 565.50,81.41 566.00,81.52 566.50,81.64 567.00,81.75 567.50,81.87 568.00,81.99 568.50,82.12 569.00,82.24 569.50,82.37 570.00,82.50 570.50,82.64 571.00,82.78 571.50,82.92 572.00,83.07 572.50,83.21 573.00,83.37 573.50,83.52 574.00,83.67 574.50,83.83 575.00,84.00 575.50,84.16 576.00,84.33 576.50,84.50 577.00,84.67 577.50,84.84 578.00,85.02 578.50,85.20 579.00,85.38 579.50,85.56 580.00,85.75 580.50,85.94 581.00,86.14 581.50,86.34 582.00,86.55 582.50,86.76 583.00,86.98 583.50,87.19 584.00,87.41 584.50,87.64 585.00,87.86 585.50,88.09 586.00,88.32 586.50,88.54 587.00,88.77 587.50,89.00 588.00,89.23 588.50,89.46 589.00,89.69 589.50,89.91 590.00,90.13 590.50,90.36 591.00,90.57 591.50,90.79 592.00,91.00 592.50,91.21 593.00,91.42 593.50,91.63 594.00,91.84 594.50,92.05 595.00,92.27 595.50,92.48 596.00,92.69 596.50,92.90 597.00,93.11 597.50,93.32 598.00,93.52 598.50,93.73 599.00,93.93 599.50,94.14 600.00,94.34 600.50,94.54 601.00,94.73 601.50,94.93 602.00,95.12 602.50,95.31 603.00,95.50 603.50,95.68 604.00,95.86 604.50,96.04 605.00,96.21 605.50,96.39 606.00,96.56 606.50,96.73 607.00,96.90 607.50,97.08 608.00,97.24 608.50,97.41 609.00,97.58 609.50,97.74 610.00,97.90 610.50,98.06 611.00,98.21 611.50,98.36 612.00,98.51 612.50,98.65 613.00,98.79 613.50,98.93 614.00,99.06 614.50,99.19 615.00,99.31 615.50,99.42 616.00,99.53 616.50,99.64 617.00,99.74 617.50,99.83 618.00,99.92 618.50,100.00 619.00,100.08 619.50,100.16 620.00,100.23 620.50,100.30 621.00,100.36 621.50,100.42 622.00,100.48 622.50,100.53 623.00,100.58 623.50,100.62 624.00,100.67 624.50,100.71 625.00,100.74 625.50,100.77 626.00,100.80 626.50,100.83 627.00,100.85 627.50,100.87 628.00,100.88 628.50,100.89 629.00,100.90 629.50,100.90 630.00,100.90 630.50,100.89 631.00,100.88 631.50,100.86 632.00,100.83 632.50,100.79 633.00,100.73 633.50,100.66 634.00,100.57 634.50,100.46 635.00,100.33 635.50,100.18 636.00,99.99 636.50,99.79 637.00,99.56 637.50,99.28 638.00,98.96 638.50,98.60 639.00,98.22 639.50,97.80 640.00,97.36 640.50,96.91 641.00,96.44 641.50,95.97 642.00,95.50 642.50,95.05 643.00,94.61 643.50,94.14 644.00,93.59 644.50,92.99 645.00,92.37 645.50,91.80 646.00,91.32 646.50,91.02 647.00,90.97 647.50,91.15 648.00,91.43 648.50,91.89 649.00,92.66 649.50,93.89 650.00,95.73 650.50,98.38 651.00,102.14 651.50,106.97 652.00,112.58 652.50,118.51 653.00,124.33 653.50,130.50 654.00,137.01 654.50,143.70 655.00,150.37 655.50,156.88 656.00,163.34 656.50,169.80 657.00,176.25 657.50,182.71" fill="none" stroke="#008000" stroke-width="1.1"/>
<polyline points="455.00,192.45 456.30,188.00 457.60,183.38 458.90,176.42 460.20,169.58 461.50,160.33 462.80,149.97 464.10,139.37 465.40,129.46 466.70,118.22 468.00,105.12 469.30,96.10 470.60,89.13 471.90,81.95 473.20,78.78 474.50,77.87 475.80,74.69 477.10,77.90 478.40,78.08 479.70,76.71 481.00,79.42 482.30,80.98 483.60,83.17 484.90,83.74 486.20,85.44 487.50,86.19 488.80,87.46 490.10,88.07 491.40,91.40 492.70,92.14 494.00,90.99 495.30,92.59 496.60,92.15 497.90,91.54 499.20,91.82 500.50,93.96 501.80,91.75 503.10,92.48 504.40,93.31 505.70,90.73 507.00,92.21 508.30,89.49 509.60,91.34 510.90,91.26 512.20,91.02 513.50,91.13 514.80,89.82 516.10,90.33 517.40,87.48 518.70,87.88 520.00,86.38 521.30,85.49 522.60,86.28 523.90,86.81 525.20,86.58 526.50,83.51 527.80,86.30 529.10,83.49 530.40,83.26 531.70,84.77 533.00,84.62 534.30,83.72 535.60,81.98 536.90,82.11 538.20,83.10 539.50,81.16 540.80,82.46 542.10,82.14 543.40,80.82 544.70,82.10 546.00,80.10 547.30,81.18 548.60,80.63 549.90,79.40 551.20,80.00 552.50,80.19 553.80,79.92 555.10,78.44 556.40,81.61 557.70,81.64 559.00,78.55 560.30,81.92 561.60,80.70 562.90,79.54 564.20,82.24 565.50,81.17 566.80,82.45 568.10,83.16 569.40,82.48 570.70,81.13 572.00,84.19 573.30,84.13 574.60,85.29 575.90,83.50 577.20,85.72 578.50,86.49 579.80,85.18 581.10,85.87 582.40,86.15 583.70,85.59 585.00,86.94 586.30,87.88 587.60,87.71 588.90,90.55 590.20,89.97 591.50,91.02 592.80,90.60 594.10,91.41 595.40,93.31 596.70,92.88 598.00,93.86 599.30,93.79 600.60,94.77 601.90,96.45 603.20,94.77 604.50,96.10 605.80,97.14 607.10,95.51 608.40,98.98 609.70,97.80 611.00,97.33 612.30,99.50 613.60,100.05 614.90,99.74 616.20,101.03 617.50,98.40 618.80,100.15 620.10,101.09 621.40,101.87 622.70,101.04 624.00,101.03 625.30,100.37 626.60,101.09 627.90,101.07 629.20,102.32 630.50,102.04 631.80,101.67 633.10,102.20 634.40,98.97 635.70,101.03 637.00,99.43 638.30,99.58 639.60,97.06 640.90,96.43 642.20,96.36 643.50,92.69 644.80,91.99 646.10,91.22 647.40,92.32 648.70,91.56 650.00,96.19 651.30,104.85 652.60,119.55 653.90,135.74 655.20,153.06 656.50,170.00" fill="none" stroke="#fff" stroke-width="0.35" opacity="0.45"/>
<line x1="505.0" y1="103.8" x2="505.0" y2="93.9" stroke="#0000ff" stroke-width="1.2"/>
<line x1="505.0" y1="91.6" x2="505.0" y2="58.0" stroke="#008000" stroke-width="1.2"/>
</g>
<line x1="455.00" y1="237.45" x2="455.00" y2="234.45" stroke="#333" stroke-width="0.8"/>
<line x1="455.00" y1="49.8" x2="455.00" y2="52.8" stroke="#333" stroke-width="0.8"/>
<line x1="479.71" y1="237.45" x2="479.71" y2="234.45" stroke="#333" stroke-width="0.8"/>
<line x1="479.71" y1="49.8" x2="479.71" y2="52.8" stroke="#333" stroke-width="0.8"/>
<line x1="504.41" y1="237.45" x2="504.41" y2="234.45" stroke="#333" stroke-width="0.8"/>
<line x1="504.41" y1="49.8" x2="504.41" y2="52.8" stroke="#333" stroke-width="0.8"/>
<line x1="529.12" y1="237.45" x2="529.12" y2="234.45" stroke="#333" stroke-width="0.8"/>
<line x1="529.12" y1="49.8" x2="529.12" y2="52.8" stroke="#333" stroke-width="0.8"/>
<line x1="553.83" y1="237.45" x2="553.83" y2="234.45" stroke="#333" stroke-width="0.8"/>
<line x1="553.83" y1="49.8" x2="553.83" y2="52.8" stroke="#333" stroke-width="0.8"/>
<line x1="578.54" y1="237.45" x2="578.54" y2="234.45" stroke="#333" stroke-width="0.8"/>
<line x1="578.54" y1="49.8" x2="578.54" y2="52.8" stroke="#333" stroke-width="0.8"/>
<line x1="603.24" y1="237.45" x2="603.24" y2="234.45" stroke="#333" stroke-width="0.8"/>
<line x1="603.24" y1="49.8" x2="603.24" y2="52.8" stroke="#333" stroke-width="0.8"/>
<line x1="627.95" y1="237.45" x2="627.95" y2="234.45" stroke="#333" stroke-width="0.8"/>
<line x1="627.95" y1="49.8" x2="627.95" y2="52.8" stroke="#333" stroke-width="0.8"/>
<line x1="652.66" y1="237.45" x2="652.66" y2="234.45" stroke="#333" stroke-width="0.8"/>
<line x1="652.66" y1="49.8" x2="652.66" y2="52.8" stroke="#333" stroke-width="0.8"/>
<line x1="455.0" y1="237.45" x2="458.0" y2="237.45" stroke="#333" stroke-width="0.8"/>
<line x1="657.4" y1="237.45" x2="654.4" y2="237.45" stroke="#333" stroke-width="0.8"/>
<line x1="455.0" y1="213.99" x2="458.0" y2="213.99" stroke="#333" stroke-width="0.8"/>
<line x1="657.4" y1="213.99" x2="654.4" y2="213.99" stroke="#333" stroke-width="0.8"/>
<line x1="455.0" y1="190.54" x2="458.0" y2="190.54" stroke="#333" stroke-width="0.8"/>
<line x1="657.4" y1="190.54" x2="654.4" y2="190.54" stroke="#333" stroke-width="0.8"/>
<line x1="455.0" y1="167.08" x2="458.0" y2="167.08" stroke="#333" stroke-width="0.8"/>
<line x1="657.4" y1="167.08" x2="654.4" y2="167.08" stroke="#333" stroke-width="0.8"/>
<line x1="455.0" y1="143.62" x2="458.0" y2="143.62" stroke="#333" stroke-width="0.8"/>
<line x1="657.4" y1="143.62" x2="654.4" y2="143.62" stroke="#333" stroke-width="0.8"/>
<line x1="455.0" y1="120.17" x2="458.0" y2="120.17" stroke="#333" stroke-width="0.8"/>
<line x1="657.4" y1="120.17" x2="654.4" y2="120.17" stroke="#333" stroke-width="0.8"/>
<line x1="455.0" y1="96.71" x2="458.0" y2="96.71" stroke="#333" stroke-width="0.8"/>
<line x1="657.4" y1="96.71" x2="654.4" y2="96.71" stroke="#333" stroke-width="0.8"/>
<line x1="455.0" y1="73.26" x2="458.0" y2="73.26" stroke="#333" stroke-width="0.8"/>
<line x1="657.4" y1="73.26" x2="654.4" y2="73.26" stroke="#333" stroke-width="0.8"/>
<line x1="455.0" y1="49.80" x2="458.0" y2="49.80" stroke="#333" stroke-width="0.8"/>
<line x1="657.4" y1="49.80" x2="654.4" y2="49.80" stroke="#333" stroke-width="0.8"/>
<rect x="455.0" y="49.8" width="202.39999999999998" height="187.64999999999998" fill="none" stroke="#444" stroke-width="1.2"/>
<rect x="620.40" y="53.30" width="33.10" height="19.10" fill="#fff" stroke="#222" stroke-width="1"/>
<line x1="624.10" y1="59.00" x2="635.20" y2="59.00" stroke="#0000ff" stroke-width="1" opacity="0.6"/>
<line x1="624.10" y1="67.30" x2="635.20" y2="67.30" stroke="#008000" stroke-width="1" opacity="0.7"/>
<text x="639.00" y="61.40" class="lg" textLength="9" lengthAdjust="spacingAndGlyphs">XX</text>
<text x="639.00" y="69.70" class="lg" textLength="9" lengthAdjust="spacingAndGlyphs">YY</text>
<text x="776.55" y="42.55" class="ti" text-anchor="middle">ref_R</text>
<text x="657.70" y="144.98" class="al fl" text-anchor="middle" transform="rotate(-90 657.70 144.98)">Flux (Jy)</text>
<rect x="676.1" y="49.85" width="202.29999999999995" height="187.45000000000002" fill="#fff"/>
<g clip-path="url(#clip_tr)">
<polygon points="676.10,209.97 676.60,209.37 677.10,208.10 677.60,207.24 678.10,206.40 678.60,205.11 679.10,203.82 679.60,202.35 680.10,200.03 680.60,197.58 681.10,194.58 681.60,191.42 682.10,188.48 682.60,185.24 683.10,182.00 683.60,178.73 684.10,175.11 684.60,171.54 685.10,167.99 685.60,164.17 686.10,160.18 686.60,156.25 687.10,152.33 687.60,148.45 688.10,144.47 688.60,140.41 689.10,136.41 689.60,132.26 690.10,128.25 690.60,124.21 691.10,119.96 691.60,115.55 692.10,111.12 692.60,107.31 693.10,104.28 693.60,101.57 694.10,99.32 694.60,97.40 695.10,95.46 695.60,94.03 696.10,92.31 696.60,91.22 697.10,89.84 697.60,88.44 698.10,87.67 698.60,86.80 699.10,85.74 699.60,85.30 700.10,84.18 700.60,84.21 701.10,83.61 701.60,83.46 702.10,83.32 702.60,82.66 703.10,83.47 703.60,83.24 704.10,83.05 704.60,83.01 705.10,83.04 705.60,83.49 706.10,83.75 706.60,83.29 707.10,84.06 707.60,84.22 708.10,84.18 708.60,84.07 709.10,83.83 709.60,84.21 710.10,84.55 710.60,84.76 711.10,84.74 711.60,84.88 712.10,85.19 712.60,85.42 713.10,85.30 713.60,84.72 714.10,84.79 714.60,84.55 715.10,85.13 715.60,84.25 716.10,84.60 716.60,84.00 717.10,84.18 717.60,84.10 718.10,83.74 718.60,83.80 719.10,83.65 719.60,84.01 720.10,83.52 720.60,83.65 721.10,83.82 721.60,83.69 722.10,83.30 722.60,83.41 723.10,82.88 723.60,83.38 724.10,83.40 724.60,82.44 725.10,82.98 725.60,82.72 726.10,82.92 726.60,82.85 727.10,82.60 727.60,82.18 728.10,82.78 728.60,81.99 729.10,81.79 729.60,82.10 730.10,82.21 730.60,82.26 731.10,82.24 731.60,82.05 732.10,81.50 732.60,82.20 733.10,81.42 733.60,81.46 734.10,81.97 734.60,81.85 735.10,81.19 735.60,81.17 736.10,81.43 736.60,80.88 737.10,81.41 737.60,81.17 738.10,81.41 738.60,80.89 739.10,81.36 739.60,81.26 740.10,80.71 740.60,80.94 741.10,80.79 741.60,80.72 742.10,80.83 742.60,81.20 743.10,80.75 743.60,81.29 744.10,81.16 744.60,81.02 745.10,81.35 745.60,81.38 746.10,80.93 746.60,80.89 747.10,81.27 747.60,81.31 748.10,81.53 748.60,81.32 749.10,81.34 749.60,81.10 750.10,81.99 750.60,81.30 751.10,81.33 751.60,82.01 752.10,81.79 752.60,81.82 753.10,82.10 753.60,82.55 754.10,82.38 754.60,82.29 755.10,83.11 755.60,82.91 756.10,83.46 756.60,82.87 757.10,83.07 757.60,83.86 758.10,83.38 758.60,83.57 759.10,84.22 759.60,84.00 760.10,83.99 760.60,84.44 761.10,84.43 761.60,84.14 762.10,84.57 762.60,84.81 763.10,85.32 763.60,85.39 764.10,84.86 764.60,85.06 765.10,85.09 765.60,85.43 766.10,85.54 766.60,85.69 767.10,85.62 767.60,86.09 768.10,86.05 768.60,86.18 769.10,86.12 769.60,86.63 770.10,86.92 770.60,86.98 771.10,87.02 771.60,86.54 772.10,86.80 772.60,86.90 773.10,87.31 773.60,87.76 774.10,87.59 774.60,87.39 775.10,87.86 775.60,87.92 776.10,88.32 776.60,88.69 777.10,88.44 777.60,88.75 778.10,89.05 778.60,89.32 779.10,89.12 779.60,89.65 780.10,89.61 780.60,90.09 781.10,89.85 781.60,90.39 782.10,90.51 782.60,90.32 783.10,90.71 783.60,90.91 784.10,91.47 784.60,91.25 785.10,91.87 785.60,91.56 786.10,91.86 786.60,92.29 787.10,92.36 787.60,92.84 788.10,92.91 788.60,93.67 789.10,93.15 789.60,93.56 790.10,94.38 790.60,94.54 791.10,94.50 791.60,94.58 792.10,95.37 792.60,94.92 793.10,95.71 793.60,95.40 794.10,95.87 794.60,96.36 795.10,96.73 795.60,97.22 796.10,97.48 796.60,97.27 797.10,97.40 797.60,97.54 798.10,98.27 798.60,98.02 799.10,98.84 799.60,98.52 800.10,98.79 800.60,99.71 801.10,99.35 801.60,99.75 802.10,100.00 802.60,100.14 803.10,100.66 803.60,100.95 804.10,101.33 804.60,101.15 805.10,101.38 805.60,102.28 806.10,102.00 806.60,102.69 807.10,103.02 807.60,103.26 808.10,103.18 808.60,103.69 809.10,103.96 809.60,104.33 810.10,104.37 810.60,104.22 811.10,105.11 811.60,104.93 812.10,105.05 812.60,105.76 813.10,105.77 813.60,105.45 814.10,105.59 814.60,105.94 815.10,106.75 815.60,106.44 816.10,106.93 816.60,107.39 817.10,107.32 817.60,107.14 818.10,107.38 818.60,108.01 819.10,108.50 819.60,107.96 820.10,108.08 820.60,108.70 821.10,109.14 821.60,109.05 822.10,109.10 822.60,109.47 823.10,109.76 823.60,110.03 824.10,110.16 824.60,110.54 825.10,110.53 825.60,110.09 826.10,111.10 826.60,110.64 827.10,110.76 827.60,111.27 828.10,111.27 828.60,111.76 829.10,111.52 829.60,111.63 830.10,111.75 830.60,112.09 831.10,111.77 831.60,111.97 832.10,112.31 832.60,112.28 833.10,112.70 833.60,112.13 834.10,112.42 834.60,112.19 835.10,112.71 835.60,112.04 836.10,112.76 836.60,112.30 837.10,112.57 837.60,112.38 838.10,111.74 838.60,112.22 839.10,111.79 839.60,111.80 840.10,111.05 840.60,111.56 841.10,111.17 841.60,110.55 842.10,110.53 842.60,110.36 843.10,109.96 843.60,110.67 844.10,109.97 844.60,109.77 845.10,109.64 845.60,109.54 846.10,109.98 846.60,109.83 847.10,109.07 847.60,109.07 848.10,109.24 848.60,109.32 849.10,108.71 849.60,108.97 850.10,108.24 850.60,108.46 851.10,107.91 851.60,108.41 852.10,107.93 852.60,108.15 853.10,107.42 853.60,107.50 854.10,107.69 854.60,106.93 855.10,107.09 855.60,107.32 856.10,106.79 856.60,107.17 857.10,106.63 857.60,107.20 858.10,106.58 858.60,107.43 859.10,106.87 859.60,107.33 860.10,107.29 860.60,107.21 861.10,107.86 861.60,107.86 862.10,108.15 862.60,107.80 863.10,108.50 863.60,108.53 864.10,108.98 864.60,109.39 865.10,109.19 865.60,110.05 866.10,110.61 866.60,111.48 867.10,112.53 867.60,114.10 868.10,115.52 868.60,116.77 869.10,118.51 869.60,120.31 870.10,121.80 870.60,123.95 871.10,126.22 871.60,128.68 872.10,131.09 872.60,134.01 873.10,137.14 873.60,140.07 874.10,143.31 874.60,146.55 875.10,149.77 875.60,152.97 876.10,156.19 876.60,159.29 877.10,162.63 877.60,165.73 878.10,169.11 878.10,170.24 877.60,166.83 877.10,163.68 876.60,160.42 876.10,157.25 875.60,154.12 875.10,151.01 874.60,147.91 874.10,144.56 873.60,141.48 873.10,138.25 872.60,135.25 872.10,132.67 871.60,130.12 871.10,127.90 870.60,125.53 870.10,123.83 869.60,122.02 869.10,120.23 868.60,119.14 868.10,117.76 867.60,116.49 867.10,115.66 866.60,114.70 866.10,114.35 865.60,113.70 865.10,113.49 864.60,112.81 864.10,112.70 863.60,112.56 863.10,111.85 862.60,111.78 862.10,111.78 861.60,111.76 861.10,111.26 860.60,110.99 860.10,111.14 859.60,110.76 859.10,111.19 858.60,110.68 858.10,110.54 857.60,111.13 857.10,110.98 856.60,111.10 856.10,111.20 855.60,111.25 855.10,111.30 854.60,111.37 854.10,110.98 853.60,111.05 853.10,111.73 852.60,111.50 852.10,111.61 851.60,111.58 851.10,111.70 850.60,111.80 850.10,112.34 849.60,112.13 849.10,112.68 848.60,112.61 848.10,113.26 847.60,113.45 847.10,113.51 846.60,113.39 846.10,113.48 845.60,113.32 845.10,113.51 844.60,114.14 844.10,114.42 843.60,114.46 843.10,113.93 842.60,114.36 842.10,114.97 841.60,114.28 841.10,114.67 840.60,114.96 840.10,114.90 839.60,115.46 839.10,115.84 838.60,115.78 838.10,115.50 837.60,115.81 837.10,116.44 836.60,115.79 836.10,115.93 835.60,116.21 835.10,116.79 834.60,116.46 834.10,116.33 833.60,116.28 833.10,116.58 832.60,116.32 832.10,116.48 831.60,115.75 831.10,116.48 830.60,115.74 830.10,115.40 829.60,115.65 829.10,115.57 828.60,115.32 828.10,115.15 827.60,114.87 827.10,114.61 826.60,114.24 826.10,114.26 825.60,114.33 825.10,114.56 824.60,113.84 824.10,114.26 823.60,113.42 823.10,113.04 822.60,113.41 822.10,113.20 821.60,112.90 821.10,112.98 820.60,112.63 820.10,112.03 819.60,111.74 819.10,111.55 818.60,112.08 818.10,111.51 817.60,111.35 817.10,110.89 816.60,110.69 816.10,110.61 815.60,110.90 815.10,110.03 814.60,110.44 814.10,109.85 813.60,109.54 813.10,109.74 812.60,108.79 812.10,108.67 811.60,109.11 811.10,108.46 810.60,108.64 810.10,107.91 809.60,107.39 809.10,107.92 808.60,107.51 808.10,107.30 807.60,106.89 807.10,106.91 806.60,106.24 806.10,105.86 805.60,105.91 805.10,105.11 804.60,104.89 804.10,104.72 803.60,104.65 803.10,104.41 802.60,104.11 802.10,104.10 801.60,103.50 801.10,103.10 800.60,103.19 800.10,103.29 799.60,102.74 799.10,102.68 798.60,102.50 798.10,102.21 797.60,101.60 797.10,101.69 796.60,101.53 796.10,100.96 795.60,100.61 795.10,100.39 794.60,99.94 794.10,99.96 793.60,99.33 793.10,99.41 792.60,99.53 792.10,99.05 791.60,98.83 791.10,98.66 790.60,97.82 790.10,97.69 789.60,97.73 789.10,97.48 788.60,97.46 788.10,96.66 787.60,96.61 787.10,96.20 786.60,96.51 786.10,95.81 785.60,95.90 785.10,95.34 784.60,95.76 784.10,94.83 783.60,94.89 783.10,95.06 782.60,94.93 782.10,94.62 781.60,94.44 781.10,93.98 780.60,93.72 780.10,93.28 779.60,92.94 779.10,92.87 778.60,93.23 778.10,92.48 777.60,92.13 777.10,92.18 776.60,92.26 776.10,92.22 775.60,92.03 775.10,91.49 774.60,91.75 774.10,91.35 773.60,91.38 773.10,91.46 772.60,91.34 772.10,90.46 771.60,91.10 771.10,90.72 770.60,90.88 770.10,90.56 769.60,89.91 769.10,89.71 768.60,90.26 768.10,90.04 767.60,90.25 767.10,89.64 766.60,89.87 766.10,89.68 765.60,89.17 765.10,89.46 764.60,88.90 764.10,89.20 763.60,88.88 763.10,88.58 762.60,89.05 762.10,88.64 761.60,88.71 761.10,88.39 760.60,88.48 760.10,88.44 759.60,87.45 759.10,87.46 758.60,88.00 758.10,87.77 757.60,87.21 757.10,86.96 756.60,87.14 756.10,87.04 755.60,86.86 755.10,86.90 754.60,86.61 754.10,86.16 753.60,86.13 753.10,85.68 752.60,85.99 752.10,85.80 751.60,85.51 751.10,85.64 750.60,85.42 750.10,85.39 749.60,85.47 749.10,85.49 748.60,85.61 748.10,85.29 747.60,85.50 747.10,85.39 746.60,84.61 746.10,84.74 745.60,85.13 745.10,85.05 744.60,85.15 744.10,84.76 743.60,84.94 743.10,84.56 742.60,84.84 742.10,84.68 741.60,85.08 741.10,84.41 740.60,84.63 740.10,84.83 739.60,85.24 739.10,84.47 738.60,85.09 738.10,85.18 737.60,84.69 737.10,85.40 736.60,85.33 736.10,84.87 735.60,85.25 735.10,85.18 734.60,85.63 734.10,85.77 733.60,85.87 733.10,85.48 732.60,85.96 732.10,85.86 731.60,85.84 731.10,86.14 730.60,85.66 730.10,86.25 729.60,86.31 729.10,86.30 728.60,86.16 728.10,85.95 727.60,86.49 727.10,86.45 726.60,86.77 726.10,86.21 725.60,86.88 725.10,87.05 724.60,86.82 724.10,86.91 723.60,86.85 723.10,86.68 722.60,87.21 722.10,87.11 721.60,86.95 721.10,87.58 720.60,87.05 720.10,87.51 719.60,87.37 719.10,87.48 718.60,87.58 718.10,87.65 717.60,88.07 717.10,88.09 716.60,88.15 716.10,88.71 715.60,88.37 715.10,88.97 714.60,89.03 714.10,88.56 713.60,88.68 713.10,88.83 712.60,89.27 712.10,89.20 711.60,89.22 711.10,88.57 710.60,88.55 710.10,88.79 709.60,88.57 709.10,88.48 708.60,88.01 708.10,87.55 707.60,87.69 707.10,87.99 706.60,87.57 706.10,87.14 705.60,86.96 705.10,87.47 704.60,87.26 704.10,87.25 703.60,86.53 703.10,86.74 702.60,86.93 702.10,86.96 701.60,86.95 701.10,87.30 700.60,87.24 700.10,88.20 699.60,88.70 699.10,89.24 698.60,89.75 698.10,90.93 697.60,91.76 697.10,92.40 696.60,93.39 696.10,94.90 695.60,96.24 695.10,97.84 694.60,99.48 694.10,101.10 693.60,103.10 693.10,105.56 692.60,108.44 692.10,112.11 691.60,116.30 691.10,120.86 690.60,124.97 690.10,129.18 689.60,133.29 689.10,137.22 688.60,141.26 688.10,145.37 687.60,149.46 687.10,153.47 686.60,157.25 686.10,161.16 685.60,165.16 685.10,168.84 684.60,172.52 684.10,176.33 683.60,179.65 683.10,183.06 682.60,186.39 682.10,189.55 681.60,192.58 681.10,195.83 680.60,198.87 680.10,201.64 679.60,204.17 679.10,206.11 678.60,207.82 678.10,209.10 677.60,210.18 677.10,210.97 676.60,212.15 676.10,212.68" fill="#0000ff" stroke="none"/>
<polyline points="676.10,211.60 676.60,210.61 677.10,209.67 677.60,208.69 678.10,207.63 678.60,206.45 679.10,205.03 679.60,203.19 680.10,200.88 680.60,198.11 681.10,195.10 681.60,192.10 682.10,189.02 682.60,185.84 683.10,182.56 683.60,179.19 684.10,175.71 684.60,172.12 685.10,168.41 685.60,164.61 686.10,160.74 686.60,156.82 687.10,152.89 687.60,148.93 688.10,144.92 688.60,140.87 689.10,136.80 689.60,132.73 690.10,128.65 690.60,124.60 691.10,120.38 691.60,115.90 692.10,111.59 692.60,107.93 693.10,105.00 693.60,102.51 694.10,100.33 694.60,98.39 695.10,96.65 695.60,95.07 696.10,93.62 696.60,92.33 697.10,91.17 697.60,90.13 698.10,89.17 698.60,88.30 699.10,87.50 699.60,86.77 700.10,86.13 700.60,85.61 701.10,85.28 701.60,85.11 702.10,85.05 702.60,85.01 703.10,84.99 703.60,85.01 704.10,85.06 704.60,85.14 705.10,85.23 705.60,85.33 706.10,85.43 706.60,85.55 707.10,85.66 707.60,85.77 708.10,85.88 708.60,85.99 709.10,86.15 709.60,86.33 710.10,86.52 710.60,86.70 711.10,86.84 711.60,86.94 712.10,86.99 712.60,87.00 713.10,86.98 713.60,86.92 714.10,86.85 714.60,86.76 715.10,86.66 715.60,86.55 716.10,86.43 716.60,86.32 717.10,86.20 717.60,86.08 718.10,85.96 718.60,85.85 719.10,85.75 719.60,85.65 720.10,85.55 720.60,85.47 721.10,85.38 721.60,85.30 722.10,85.22 722.60,85.14 723.10,85.06 723.60,84.98 724.10,84.91 724.60,84.83 725.10,84.75 725.60,84.68 726.10,84.60 726.60,84.53 727.10,84.46 727.60,84.38 728.10,84.31 728.60,84.24 729.10,84.17 729.60,84.10 730.10,84.03 730.60,83.97 731.10,83.90 731.60,83.83 732.10,83.76 732.60,83.69 733.10,83.62 733.60,83.55 734.10,83.48 734.60,83.41 735.10,83.34 735.60,83.28 736.10,83.21 736.60,83.15 737.10,83.10 737.60,83.05 738.10,83.01 738.60,82.97 739.10,82.94 739.60,82.92 740.10,82.90 740.60,82.89 741.10,82.88 741.60,82.88 742.10,82.88 742.60,82.88 743.10,82.88 743.60,82.89 744.10,82.90 744.60,82.92 745.10,82.95 745.60,82.98 746.10,83.01 746.60,83.06 747.10,83.10 747.60,83.16 748.10,83.22 748.60,83.28 749.10,83.36 749.60,83.43 750.10,83.52 750.60,83.61 751.10,83.71 751.60,83.82 752.10,83.93 752.60,84.04 753.10,84.17 753.60,84.29 754.10,84.42 754.60,84.56 755.10,84.69 755.60,84.83 756.10,84.97 756.60,85.11 757.10,85.25 757.60,85.39 758.10,85.53 758.60,85.67 759.10,85.81 759.60,85.95 760.10,86.09 760.60,86.23 761.10,86.36 761.60,86.50 762.10,86.62 762.60,86.75 763.10,86.87 763.60,86.99 764.10,87.11 764.60,87.22 765.10,87.33 765.60,87.44 766.10,87.55 766.60,87.66 767.10,87.77 767.60,87.88 768.10,87.98 768.60,88.09 769.10,88.20 769.60,88.32 770.10,88.43 770.60,88.55 771.10,88.67 771.60,88.80 772.10,88.92 772.60,89.06 773.10,89.19 773.60,89.34 774.10,89.48 774.60,89.64 775.10,89.80 775.60,89.96 776.10,90.13 776.60,90.30 777.10,90.47 777.60,90.65 778.10,90.83 778.60,91.02 779.10,91.21 779.60,91.40 780.10,91.59 780.60,91.79 781.10,91.99 781.60,92.19 782.10,92.40 782.60,92.60 783.10,92.81 783.60,93.03 784.10,93.24 784.60,93.45 785.10,93.67 785.60,93.89 786.10,94.11 786.60,94.33 787.10,94.56 787.60,94.78 788.10,95.01 788.60,95.24 789.10,95.48 789.60,95.72 790.10,95.96 790.60,96.21 791.10,96.45 791.60,96.70 792.10,96.96 792.60,97.21 793.10,97.47 793.60,97.72 794.10,97.98 794.60,98.24 795.10,98.50 795.60,98.75 796.10,99.01 796.60,99.27 797.10,99.53 797.60,99.79 798.10,100.04 798.60,100.30 799.10,100.55 799.60,100.80 800.10,101.05 800.60,101.30 801.10,101.56 801.60,101.81 802.10,102.07 802.60,102.33 803.10,102.58 803.60,102.84 804.10,103.10 804.60,103.36 805.10,103.62 805.60,103.87 806.10,104.13 806.60,104.38 807.10,104.64 807.60,104.89 808.10,105.14 808.60,105.39 809.10,105.63 809.60,105.88 810.10,106.12 810.60,106.35 811.10,106.59 811.60,106.82 812.10,107.05 812.60,107.27 813.10,107.49 813.60,107.71 814.10,107.93 814.60,108.15 815.10,108.37 815.60,108.58 816.10,108.79 816.60,109.01 817.10,109.21 817.60,109.42 818.10,109.63 818.60,109.83 819.10,110.03 819.60,110.23 820.10,110.43 820.60,110.62 821.10,110.81 821.60,111.00 822.10,111.19 822.60,111.37 823.10,111.55 823.60,111.73 824.10,111.90 824.60,112.07 825.10,112.24 825.60,112.41 826.10,112.59 826.60,112.76 827.10,112.94 827.60,113.11 828.10,113.28 828.60,113.44 829.10,113.60 829.60,113.75 830.10,113.89 830.60,114.02 831.10,114.13 831.60,114.23 832.10,114.32 832.60,114.39 833.10,114.45 833.60,114.48 834.10,114.50 834.60,114.50 835.10,114.47 835.60,114.42 836.10,114.35 836.60,114.26 837.10,114.16 837.60,114.04 838.10,113.91 838.60,113.76 839.10,113.61 839.60,113.45 840.10,113.28 840.60,113.12 841.10,112.95 841.60,112.79 842.10,112.63 842.60,112.47 843.10,112.32 843.60,112.18 844.10,112.05 844.60,111.93 845.10,111.80 845.60,111.66 846.10,111.53 846.60,111.39 847.10,111.25 847.60,111.10 848.10,110.96 848.60,110.82 849.10,110.67 849.60,110.53 850.10,110.39 850.60,110.25 851.10,110.12 851.60,109.99 852.10,109.86 852.60,109.73 853.10,109.61 853.60,109.50 854.10,109.39 854.60,109.29 855.10,109.20 855.60,109.12 856.10,109.06 856.60,109.01 857.10,108.98 857.60,108.97 858.10,108.97 858.60,108.99 859.10,109.03 859.60,109.09 860.10,109.17 860.60,109.27 861.10,109.39 861.60,109.54 862.10,109.72 862.60,109.92 863.10,110.15 863.60,110.41 864.10,110.70 864.60,111.01 865.10,111.37 865.60,111.80 866.10,112.36 866.60,113.11 867.10,114.07 867.60,115.21 868.10,116.47 868.60,117.86 869.10,119.39 869.60,121.06 870.10,122.88 870.60,124.85 871.10,126.99 871.60,129.30 872.10,131.85 872.60,134.66 873.10,137.65 873.60,140.79 874.10,144.00 874.60,147.25 875.10,150.45 875.60,153.57 876.10,156.73 876.60,159.91 877.10,163.12 877.60,166.34 878.10,169.57" fill="none" stroke="#0000ff" stroke-width="1.1"/>
<polyline points="676.10,212.51 677.40,208.31 678.70,205.45 680.00,200.83 681.30,194.27 682.60,185.50 683.90,177.23 685.20,167.51 686.50,157.40 687.80,147.16 689.10,136.92 690.40,125.91 691.70,115.26 693.00,105.65 694.30,99.23 695.60,94.64 696.90,91.91 698.20,89.26 699.50,86.51 700.80,85.06 702.10,84.95 703.40,86.11 704.70,85.26 706.00,86.33 707.30,86.08 708.60,86.16 709.90,86.42 711.20,87.35 712.50,86.98 713.80,87.50 715.10,85.80 716.40,85.89 717.70,87.06 719.00,85.49 720.30,86.44 721.60,86.48 722.90,85.30 724.20,83.82 725.50,85.38 726.80,84.95 728.10,83.75 729.40,85.11 730.70,83.91 732.00,82.59 733.30,82.43 734.60,82.68 735.90,83.53 737.20,83.94 738.50,81.90 739.80,81.62 741.10,83.21 742.40,82.63 743.70,82.74 745.00,83.81 746.30,84.16 747.60,84.42 748.90,84.08 750.20,82.20 751.50,82.86 752.80,84.33 754.10,85.64 755.40,83.65 756.70,85.18 758.00,85.23 759.30,85.62 760.60,85.61 761.90,85.96 763.20,86.19 764.50,86.13 765.80,87.63 767.10,87.62 768.40,88.62 769.70,88.72 771.00,89.86 772.30,88.55 773.60,90.36 774.90,89.43 776.20,90.59 777.50,91.43 778.80,90.82 780.10,91.45 781.40,92.46 782.70,91.62 784.00,93.28 785.30,92.69 786.60,93.61 787.90,95.24 789.20,96.77 790.50,97.47 791.80,96.18 793.10,96.54 794.40,98.18 795.70,98.65 797.00,99.16 798.30,100.85 799.60,101.35 800.90,101.62 802.20,102.44 803.50,103.00 804.80,103.92 806.10,105.25 807.40,105.96 808.70,106.69 810.00,107.01 811.30,105.64 812.60,107.14 813.90,108.59 815.20,107.87 816.50,109.25 817.80,108.33 819.10,109.25 820.40,110.28 821.70,109.90 823.00,111.31 824.30,111.25 825.60,113.37 826.90,112.38 828.20,112.99 829.50,114.52 830.80,114.22 832.10,113.11 833.40,113.71 834.70,114.79 836.00,113.56 837.30,113.44 838.60,114.09 839.90,113.33 841.20,112.30 842.50,112.66 843.80,112.49 845.10,110.56 846.40,110.84 847.70,110.56 849.00,111.72 850.30,109.14 851.60,109.58 852.90,108.84 854.20,109.89 855.50,109.97 856.80,107.80 858.10,109.95 859.40,109.59 860.70,108.53 862.00,110.79 863.30,109.72 864.60,111.75 865.90,111.15 867.20,114.22 868.50,117.59 869.80,122.31 871.10,127.36 872.40,133.58 873.70,141.07 875.00,149.75 876.30,157.90 877.60,166.74" fill="none" stroke="#fff" stroke-width="0.35" opacity="0.45"/>
<polygon points="676.10,183.68 676.60,182.95 677.10,182.10 677.60,180.86 678.10,179.55 678.60,177.06 679.10,174.51 679.60,171.73 680.10,168.65 680.60,165.62 681.10,162.39 681.60,158.87 682.10,155.37 682.60,151.67 683.10,147.78 683.60,143.75 684.10,139.84 684.60,135.68 685.10,131.48 685.60,127.59 686.10,123.51 686.60,118.46 687.10,109.98 687.60,102.66 688.10,97.35 688.60,92.62 689.10,88.28 689.60,84.27 690.10,80.55 690.60,76.89 691.10,73.35 691.60,70.11 692.10,67.10 692.60,64.00 693.10,61.70 693.60,59.20 694.10,57.69 694.60,56.59 695.10,55.85 695.60,54.67 696.10,54.41 696.60,53.88 697.10,53.28 697.60,53.57 698.10,53.70 698.60,53.89 699.10,54.67 699.60,54.26 700.10,54.93 700.60,55.84 701.10,55.75 701.60,56.36 702.10,56.67 702.60,57.10 703.10,57.39 703.60,58.60 704.10,58.41 704.60,59.34 705.10,60.08 705.60,60.47 706.10,60.99 706.60,61.08 707.10,61.87 707.60,62.73 708.10,62.68 708.60,63.34 709.10,63.59 709.60,64.72 710.10,64.58 710.60,65.06 711.10,66.26 711.60,66.34 712.10,67.06 712.60,67.12 713.10,67.86 713.60,67.50 714.10,68.39 714.60,68.23 715.10,68.48 715.60,68.99 716.10,69.29 716.60,68.86 717.10,69.80 717.60,69.77 718.10,69.84 718.60,69.72 719.10,70.01 719.60,70.33 720.10,69.98 720.60,69.89 721.10,69.95 721.60,70.16 722.10,70.32 722.60,70.57 723.10,70.06 723.60,69.92 724.10,70.01 724.60,69.47 725.10,70.05 725.60,69.39 726.10,69.36 726.60,69.08 727.10,68.93 727.60,69.41 728.10,68.66 728.60,68.98 729.10,68.59 729.60,68.20 730.10,68.37 730.60,68.24 731.10,68.55 731.60,67.94 732.10,68.11 732.60,67.82 733.10,67.67 733.60,66.97 734.10,67.10 734.60,66.85 735.10,67.16 735.60,66.86 736.10,66.17 736.60,66.66 737.10,65.74 737.60,66.03 738.10,65.88 738.60,65.59 739.10,65.49 739.60,65.29 740.10,65.17 740.60,64.77 741.10,65.00 741.60,64.95 742.10,64.56 742.60,64.72 743.10,64.26 743.60,64.08 744.10,63.68 744.60,64.15 745.10,63.75 745.60,63.28 746.10,63.53 746.60,62.95 747.10,62.92 747.60,63.38 748.10,62.93 748.60,62.45 749.10,62.52 749.60,62.24 750.10,61.81 750.60,61.93 751.10,61.89 751.60,61.46 752.10,61.67 752.60,61.87 753.10,61.47 753.60,61.02 754.10,60.53 754.60,60.66 755.10,60.78 755.60,59.98 756.10,60.33 756.60,60.32 757.10,59.86 757.60,59.88 758.10,59.93 758.60,59.24 759.10,59.10 759.60,58.70 760.10,59.29 760.60,58.46 761.10,58.43 761.60,58.78 762.10,58.45 762.60,58.20 763.10,58.37 763.60,58.45 764.10,57.69 764.60,58.19 765.10,57.80 765.60,57.76 766.10,57.25 766.60,57.47 767.10,57.51 767.60,56.93 768.10,57.42 768.60,57.01 769.10,57.38 769.60,56.84 770.10,56.79 770.60,56.66 771.10,56.91 771.60,57.09 772.10,56.67 772.60,56.37 773.10,56.86 773.60,57.08 774.10,56.89 774.60,56.18 775.10,56.97 775.60,56.89 776.10,56.82 776.60,56.07 777.10,56.49 777.60,56.18 778.10,56.14 778.60,56.35 779.10,56.06 779.60,56.28 780.10,56.19 780.60,56.38 781.10,56.65 781.60,56.11 782.10,56.40 782.60,56.40 783.10,55.86 783.60,56.34 784.10,56.60 784.60,56.15 785.10,56.27 785.60,56.75 786.10,56.54 786.60,56.37 787.10,56.74 787.60,56.18 788.10,56.44 788.60,56.80 789.10,56.53 789.60,57.42 790.10,57.36 790.60,56.86 791.10,57.35 791.60,57.78 792.10,57.56 792.60,57.56 793.10,57.83 793.60,58.48 794.10,58.65 794.60,58.49 795.10,59.01 795.60,59.12 796.10,58.82 796.60,59.19 797.10,59.70 797.60,59.20 798.10,59.86 798.60,59.62 799.10,60.08 799.60,60.29 800.10,60.70 800.60,60.73 801.10,61.36 801.60,61.62 802.10,61.36 802.60,62.22 803.10,62.35 803.60,62.34 804.10,63.00 804.60,63.28 805.10,63.12 805.60,64.04 806.10,64.33 806.60,64.09 807.10,64.94 807.60,65.21 808.10,65.06 808.60,65.87 809.10,65.61 809.60,66.08 810.10,66.37 810.60,67.22 811.10,67.54 811.60,67.38 812.10,67.62 812.60,68.44 813.10,68.77 813.60,69.05 814.10,69.45 814.60,69.52 815.10,69.77 815.60,69.99 816.10,70.80 816.60,71.00 817.10,71.38 817.60,71.57 818.10,71.96 818.60,71.63 819.10,72.42 819.60,72.93 820.10,72.78 820.60,72.82 821.10,73.27 821.60,73.68 822.10,74.20 822.60,74.46 823.10,74.82 823.60,74.64 824.10,74.90 824.60,75.42 825.10,75.34 825.60,75.77 826.10,75.98 826.60,76.58 827.10,76.84 827.60,77.08 828.10,76.70 828.60,77.02 829.10,77.15 829.60,77.43 830.10,77.66 830.60,78.18 831.10,78.09 831.60,78.81 832.10,78.57 832.60,79.29 833.10,78.65 833.60,78.90 834.10,79.70 834.60,79.32 835.10,79.42 835.60,80.26 836.10,79.93 836.60,80.19 837.10,80.13 837.60,80.01 838.10,80.27 838.60,80.84 839.10,80.64 839.60,80.73 840.10,81.32 840.60,81.30 841.10,81.18 841.60,81.43 842.10,81.45 842.60,81.12 843.10,80.93 843.60,81.43 844.10,81.31 844.60,81.25 845.10,81.36 845.60,81.40 846.10,82.01 846.60,81.24 847.10,81.88 847.60,81.85 848.10,81.53 848.60,81.43 849.10,81.23 849.60,81.59 850.10,80.93 850.60,81.12 851.10,80.82 851.60,81.03 852.10,81.25 852.60,81.15 853.10,80.43 853.60,80.44 854.10,80.23 854.60,80.13 855.10,80.04 855.60,79.56 856.10,79.52 856.60,78.72 857.10,79.09 857.60,78.15 858.10,77.99 858.60,78.14 859.10,77.54 859.60,77.44 860.10,77.26 860.60,76.66 861.10,76.32 861.60,76.52 862.10,75.56 862.60,75.93 863.10,75.57 863.60,74.78 864.10,74.53 864.60,74.02 865.10,73.57 865.60,73.17 866.10,72.40 866.60,72.02 867.10,72.15 867.60,71.81 868.10,71.06 868.60,70.95 869.10,70.34 869.60,69.97 870.10,70.85 870.60,70.79 871.10,73.06 871.60,76.84 872.10,81.86 872.60,87.81 873.10,94.40 873.60,101.17 874.10,108.08 874.60,115.34 875.10,122.83 875.60,130.52 876.10,138.15 876.60,145.32 877.10,152.05 877.60,158.47 878.10,164.88 878.10,165.48 877.60,159.22 877.10,152.64 876.60,145.95 876.10,138.60 875.60,131.02 875.10,123.41 874.60,115.87 874.10,108.71 873.60,101.79 873.10,94.96 872.60,88.44 872.10,82.53 871.60,77.70 871.10,74.66 870.60,74.60 870.10,74.47 869.60,73.88 869.10,74.51 868.60,74.52 868.10,74.61 867.60,75.70 867.10,76.23 866.60,76.35 866.10,76.87 865.60,76.87 865.10,77.29 864.60,78.01 864.10,77.84 863.60,78.94 863.10,78.84 862.60,79.49 862.10,80.02 861.60,80.30 861.10,80.41 860.60,80.84 860.10,81.24 859.60,81.27 859.10,81.63 858.60,81.92 858.10,82.08 857.60,82.49 857.10,82.90 856.60,82.99 856.10,83.15 855.60,83.64 855.10,83.79 854.60,83.85 854.10,83.93 853.60,84.81 853.10,84.17 852.60,84.83 852.10,85.28 851.60,85.22 851.10,85.02 850.60,85.39 850.10,85.20 849.60,85.16 849.10,85.41 848.60,85.27 848.10,85.57 847.60,85.48 847.10,85.93 846.60,85.30 846.10,85.54 845.60,86.09 845.10,85.41 844.60,85.69 844.10,85.16 843.60,85.78 843.10,85.56 842.60,85.02 842.10,84.99 841.60,85.64 841.10,85.44 840.60,85.23 840.10,84.68 839.60,84.86 839.10,85.00 838.60,85.00 838.10,84.80 837.60,84.50 837.10,84.74 836.60,84.32 836.10,83.95 835.60,83.97 835.10,84.07 834.60,83.88 834.10,83.12 833.60,83.08 833.10,83.15 832.60,83.35 832.10,82.53 831.60,82.45 831.10,82.63 830.60,82.42 830.10,82.09 829.60,81.78 829.10,81.23 828.60,81.72 828.10,80.91 827.60,80.94 827.10,80.71 826.60,80.78 826.10,80.09 825.60,79.62 825.10,79.35 824.60,79.72 824.10,79.43 823.60,79.10 823.10,78.43 822.60,78.23 822.10,78.36 821.60,77.67 821.10,77.54 820.60,77.19 820.10,76.68 819.60,76.38 819.10,75.85 818.60,76.17 818.10,75.72 817.60,74.93 817.10,74.70 816.60,74.55 816.10,74.27 815.60,73.68 815.10,73.39 814.60,73.46 814.10,73.48 813.60,73.11 813.10,72.06 812.60,71.91 812.10,71.50 811.60,71.69 811.10,71.38 810.60,71.06 810.10,70.97 809.60,70.40 809.10,70.35 808.60,69.56 808.10,69.37 807.60,69.30 807.10,69.02 806.60,68.43 806.10,67.65 805.60,67.46 805.10,67.23 804.60,67.33 804.10,66.49 803.60,66.28 803.10,66.58 802.60,66.20 802.10,65.39 801.60,65.66 801.10,65.08 800.60,64.79 800.10,64.50 799.60,64.70 799.10,63.97 798.60,63.89 798.10,63.60 797.60,63.18 797.10,63.55 796.60,62.96 796.10,62.96 795.60,62.64 795.10,62.42 794.60,62.70 794.10,62.06 793.60,61.97 793.10,62.00 792.60,61.74 792.10,61.58 791.60,61.13 791.10,61.27 790.60,60.97 790.10,61.58 789.60,60.64 789.10,60.77 788.60,60.96 788.10,60.95 787.60,60.28 787.10,60.55 786.60,60.26 786.10,60.51 785.60,60.24 785.10,60.63 784.60,60.78 784.10,60.16 783.60,60.64 783.10,59.94 782.60,60.73 782.10,60.03 781.60,60.14 781.10,60.00 780.60,60.68 780.10,59.99 779.60,60.74 779.10,60.04 778.60,60.14 778.10,60.19 777.60,60.59 777.10,60.13 776.60,60.94 776.10,60.28 775.60,60.90 775.10,60.85 774.60,60.58 774.10,61.07 773.60,61.16 773.10,61.15 772.60,60.75 772.10,60.65 771.60,61.26 771.10,60.55 770.60,60.96 770.10,61.21 769.60,61.03 769.10,60.86 768.60,61.74 768.10,61.10 767.60,61.24 767.10,61.55 766.60,61.26 766.10,61.73 765.60,61.82 765.10,61.54 764.60,62.21 764.10,62.16 763.60,61.86 763.10,62.10 762.60,62.21 762.10,62.80 761.60,62.71 761.10,62.43 760.60,62.63 760.10,63.28 759.60,62.95 759.10,63.40 758.60,63.53 758.10,63.93 757.60,63.66 757.10,64.05 756.60,64.17 756.10,64.73 755.60,64.06 755.10,64.19 754.60,65.03 754.10,65.32 753.60,65.12 753.10,65.18 752.60,65.19 752.10,65.54 751.60,65.98 751.10,65.66 750.60,66.51 750.10,66.57 749.60,66.32 749.10,66.78 748.60,66.65 748.10,66.46 747.60,67.15 747.10,66.97 746.60,67.71 746.10,67.83 745.60,67.18 745.10,67.43 744.60,68.06 744.10,68.31 743.60,68.50 743.10,68.06 742.60,68.32 742.10,68.80 741.60,68.71 741.10,68.96 740.60,69.17 740.10,69.32 739.60,69.49 739.10,69.47 738.60,69.58 738.10,70.19 737.60,69.77 737.10,70.07 736.60,70.59 736.10,70.92 735.60,71.06 735.10,71.29 734.60,70.64 734.10,71.53 733.60,71.66 733.10,71.64 732.60,71.90 732.10,71.57 731.60,71.70 731.10,72.02 730.60,72.65 730.10,72.18 729.60,72.39 729.10,73.14 728.60,73.10 728.10,73.22 727.60,72.79 727.10,73.79 726.60,73.91 726.10,74.03 725.60,73.43 725.10,74.04 724.60,73.99 724.10,73.84 723.60,74.44 723.10,73.90 722.60,74.55 722.10,74.25 721.60,74.27 721.10,73.78 720.60,73.83 720.10,74.15 719.60,74.08 719.10,73.87 718.60,74.22 718.10,74.00 717.60,73.57 717.10,73.03 716.60,72.84 716.10,73.17 715.60,73.25 715.10,72.81 714.60,72.24 714.10,72.06 713.60,72.15 713.10,71.77 712.60,71.23 712.10,70.75 711.60,70.28 711.10,69.87 710.60,68.93 710.10,68.81 709.60,67.90 709.10,67.57 708.60,67.21 708.10,66.66 707.60,66.08 707.10,65.76 706.60,65.37 706.10,64.70 705.60,63.68 705.10,63.23 704.60,63.12 704.10,62.41 703.60,62.26 703.10,61.81 702.60,61.16 702.10,60.70 701.60,60.00 701.10,59.91 700.60,59.06 700.10,59.13 699.60,58.24 699.10,58.22 698.60,57.45 698.10,58.01 697.60,57.69 697.10,57.49 696.60,57.81 696.10,57.86 695.60,58.47 695.10,58.86 694.60,59.80 694.10,60.38 693.60,61.37 693.10,63.13 692.60,65.66 692.10,68.39 691.60,71.27 691.10,74.55 690.60,78.02 690.10,81.54 689.60,85.33 689.10,89.26 688.60,93.43 688.10,98.22 687.60,103.36 687.10,110.49 686.60,119.11 686.10,124.37 685.60,128.72 685.10,132.50 684.60,136.63 684.10,140.69 683.60,144.77 683.10,148.84 682.60,152.62 682.10,156.25 681.60,159.94 681.10,163.36 680.60,166.73 680.10,169.98 679.60,173.13 679.10,175.85 678.60,178.65 678.10,181.01 677.60,183.37 677.10,184.69 676.60,186.15 676.10,186.76" fill="#008000" stroke="none"/>
<polyline points="676.10,185.30 676.60,184.36 677.10,183.38 677.60,182.10 678.10,180.28 678.60,177.92 679.10,175.25 679.60,172.37 680.10,169.34 680.60,166.20 681.10,162.88 681.60,159.40 682.10,155.80 682.60,152.10 683.10,148.27 683.60,144.32 684.10,140.27 684.60,136.17 685.10,132.08 685.60,128.15 686.10,124.01 686.60,118.78 687.10,110.25 687.60,103.00 688.10,97.77 688.60,93.06 689.10,88.73 689.60,84.72 690.10,80.99 690.60,77.42 691.10,74.00 691.60,70.74 692.10,67.66 692.60,64.83 693.10,62.38 693.60,60.48 694.10,59.12 694.60,58.17 695.10,57.37 695.60,56.52 696.10,55.82 696.60,55.45 697.10,55.35 697.60,55.42 698.10,55.62 698.60,55.89 699.10,56.22 699.60,56.59 700.10,56.98 700.60,57.40 701.10,57.82 701.60,58.26 702.10,58.70 702.60,59.15 703.10,59.63 703.60,60.13 704.10,60.63 704.60,61.15 705.10,61.66 705.60,62.18 706.10,62.70 706.60,63.22 707.10,63.73 707.60,64.22 708.10,64.71 708.60,65.18 709.10,65.68 709.60,66.19 710.10,66.70 710.60,67.21 711.10,67.70 711.60,68.18 712.10,68.63 712.60,69.05 713.10,69.43 713.60,69.78 714.10,70.09 714.60,70.36 715.10,70.61 715.60,70.84 716.10,71.05 716.60,71.24 717.10,71.42 717.60,71.58 718.10,71.71 718.60,71.83 719.10,71.94 719.60,72.02 720.10,72.09 720.60,72.14 721.10,72.18 721.60,72.20 722.10,72.20 722.60,72.18 723.10,72.14 723.60,72.08 724.10,72.01 724.60,71.92 725.10,71.82 725.60,71.71 726.10,71.59 726.60,71.47 727.10,71.34 727.60,71.20 728.10,71.06 728.60,70.92 729.10,70.78 729.60,70.63 730.10,70.48 730.60,70.34 731.10,70.20 731.60,70.06 732.10,69.91 732.60,69.75 733.10,69.58 733.60,69.42 734.10,69.24 734.60,69.07 735.10,68.89 735.60,68.70 736.10,68.52 736.60,68.34 737.10,68.16 737.60,67.98 738.10,67.80 738.60,67.63 739.10,67.46 739.60,67.29 740.10,67.13 740.60,66.98 741.10,66.82 741.60,66.68 742.10,66.53 742.60,66.39 743.10,66.25 743.60,66.11 744.10,65.97 744.60,65.83 745.10,65.69 745.60,65.56 746.10,65.42 746.60,65.28 747.10,65.14 747.60,65.00 748.10,64.86 748.60,64.71 749.10,64.57 749.60,64.42 750.10,64.27 750.60,64.12 751.10,63.96 751.60,63.79 752.10,63.63 752.60,63.46 753.10,63.29 753.60,63.12 754.10,62.95 754.60,62.78 755.10,62.61 755.60,62.44 756.10,62.27 756.60,62.10 757.10,61.93 757.60,61.77 758.10,61.61 758.60,61.45 759.10,61.30 759.60,61.15 760.10,61.00 760.60,60.86 761.10,60.72 761.60,60.59 762.10,60.47 762.60,60.35 763.10,60.24 763.60,60.14 764.10,60.03 764.60,59.93 765.10,59.83 765.60,59.74 766.10,59.65 766.60,59.57 767.10,59.48 767.60,59.40 768.10,59.33 768.60,59.26 769.10,59.19 769.60,59.12 770.10,59.06 770.60,59.00 771.10,58.94 771.60,58.88 772.10,58.83 772.60,58.78 773.10,58.74 773.60,58.69 774.10,58.65 774.60,58.61 775.10,58.58 775.60,58.54 776.10,58.51 776.60,58.47 777.10,58.44 777.60,58.40 778.10,58.37 778.60,58.34 779.10,58.32 779.60,58.29 780.10,58.28 780.60,58.26 781.10,58.25 781.60,58.24 782.10,58.24 782.60,58.24 783.10,58.25 783.60,58.27 784.10,58.29 784.60,58.32 785.10,58.36 785.60,58.40 786.10,58.45 786.60,58.51 787.10,58.59 787.60,58.66 788.10,58.75 788.60,58.84 789.10,58.94 789.60,59.04 790.10,59.15 790.60,59.27 791.10,59.39 791.60,59.52 792.10,59.66 792.60,59.80 793.10,59.95 793.60,60.10 794.10,60.26 794.60,60.43 795.10,60.60 795.60,60.77 796.10,60.96 796.60,61.15 797.10,61.34 797.60,61.54 798.10,61.75 798.60,61.96 799.10,62.18 799.60,62.40 800.10,62.63 800.60,62.87 801.10,63.13 801.60,63.39 802.10,63.66 802.60,63.94 803.10,64.22 803.60,64.52 804.10,64.82 804.60,65.12 805.10,65.43 805.60,65.74 806.10,66.06 806.60,66.38 807.10,66.70 807.60,67.02 808.10,67.34 808.60,67.67 809.10,67.99 809.60,68.31 810.10,68.62 810.60,68.94 811.10,69.25 811.60,69.56 812.10,69.86 812.60,70.16 813.10,70.47 813.60,70.78 814.10,71.10 814.60,71.41 815.10,71.73 815.60,72.05 816.10,72.37 816.60,72.69 817.10,73.01 817.60,73.33 818.10,73.64 818.60,73.96 819.10,74.27 819.60,74.58 820.10,74.89 820.60,75.19 821.10,75.49 821.60,75.78 822.10,76.07 822.60,76.35 823.10,76.62 823.60,76.89 824.10,77.15 824.60,77.40 825.10,77.65 825.60,77.89 826.10,78.13 826.60,78.37 827.10,78.61 827.60,78.84 828.10,79.07 828.60,79.29 829.10,79.51 829.60,79.72 830.10,79.93 830.60,80.14 831.10,80.34 831.60,80.53 832.10,80.72 832.60,80.91 833.10,81.08 833.60,81.26 834.10,81.42 834.60,81.58 835.10,81.73 835.60,81.88 836.10,82.02 836.60,82.15 837.10,82.27 837.60,82.39 838.10,82.51 838.60,82.62 839.10,82.73 839.60,82.83 840.10,82.92 840.60,83.02 841.10,83.10 841.60,83.18 842.10,83.26 842.60,83.33 843.10,83.39 843.60,83.44 844.10,83.49 844.60,83.53 845.10,83.57 845.60,83.60 846.10,83.61 846.60,83.62 847.10,83.62 847.60,83.61 848.10,83.59 848.60,83.56 849.10,83.51 849.60,83.45 850.10,83.37 850.60,83.28 851.10,83.16 851.60,83.04 852.10,82.90 852.60,82.74 853.10,82.57 853.60,82.38 854.10,82.19 854.60,81.98 855.10,81.76 855.60,81.53 856.10,81.30 856.60,81.05 857.10,80.80 857.60,80.54 858.10,80.28 858.60,80.02 859.10,79.75 859.60,79.48 860.10,79.19 860.60,78.87 861.10,78.54 861.60,78.19 862.10,77.83 862.60,77.45 863.10,77.06 863.60,76.67 864.10,76.27 864.60,75.86 865.10,75.45 865.60,75.05 866.10,74.67 866.60,74.30 867.10,73.93 867.60,73.51 868.10,73.06 868.60,72.61 869.10,72.27 869.60,72.21 870.10,72.42 870.60,72.62 871.10,73.95 871.60,77.30 872.10,82.19 872.60,88.14 873.10,94.68 873.60,101.51 874.10,108.38 874.60,115.59 875.10,123.13 875.60,130.80 876.10,138.38 876.60,145.60 877.10,152.36 877.60,158.85 878.10,165.18" fill="none" stroke="#008000" stroke-width="1.1"/>
<polyline points="676.10,185.59 677.40,182.89 678.70,176.96 680.00,169.56 681.30,161.44 682.60,151.82 683.90,141.75 685.20,131.08 686.50,119.74 687.80,100.89 689.10,88.60 690.40,78.72 691.70,70.11 693.00,63.08 694.30,57.82 695.60,57.65 696.90,55.19 698.20,56.85 699.50,55.18 700.80,56.40 702.10,57.65 703.40,60.99 704.70,61.02 706.00,63.49 707.30,64.43 708.60,64.12 709.90,66.14 711.20,67.36 712.50,68.84 713.80,70.60 715.10,69.44 716.40,72.37 717.70,71.54 719.00,71.53 720.30,72.68 721.60,71.55 722.90,72.76 724.20,71.75 725.50,71.67 726.80,70.53 728.10,70.22 729.40,71.72 730.70,70.53 732.00,69.71 733.30,70.30 734.60,70.23 735.90,67.63 737.20,69.53 738.50,66.28 739.80,67.55 741.10,66.15 742.40,65.74 743.70,66.06 745.00,66.02 746.30,65.18 747.60,65.61 748.90,65.91 750.20,63.30 751.50,63.08 752.80,63.70 754.10,62.69 755.40,61.98 756.70,62.08 758.00,62.20 759.30,62.40 760.60,62.12 761.90,61.43 763.20,59.78 764.50,61.05 765.80,60.31 767.10,58.55 768.40,60.59 769.70,58.38 771.00,59.47 772.30,59.37 773.60,59.87 774.90,59.07 776.20,59.89 777.50,57.14 778.80,57.00 780.10,57.40 781.40,58.46 782.70,58.03 784.00,57.08 785.30,57.52 786.60,58.74 787.90,58.43 789.20,59.71 790.50,59.15 791.80,60.65 793.10,60.68 794.40,60.34 795.70,60.41 797.00,60.49 798.30,61.25 799.60,61.99 800.90,62.64 802.20,62.82 803.50,64.38 804.80,64.18 806.10,67.07 807.40,67.03 808.70,66.62 810.00,68.09 811.30,68.70 812.60,69.22 813.90,70.92 815.20,70.92 816.50,71.67 817.80,74.01 819.10,74.08 820.40,75.54 821.70,75.75 823.00,76.58 824.30,76.72 825.60,77.69 826.90,78.46 828.20,78.67 829.50,80.60 830.80,79.50 832.10,79.93 833.40,80.74 834.70,82.42 836.00,82.98 837.30,82.51 838.60,82.22 839.90,83.31 841.20,84.05 842.50,82.57 843.80,83.95 845.10,84.17 846.40,83.30 847.70,82.58 849.00,83.83 850.30,82.50 851.60,82.66 852.90,82.76 854.20,83.45 855.50,80.59 856.80,79.76 858.10,80.39 859.40,80.82 860.70,77.56 862.00,78.29 863.30,75.64 864.60,76.00 865.90,73.80 867.20,74.27 868.50,72.33 869.80,72.74 871.10,73.67 872.40,85.56 873.70,102.75 875.00,121.54 876.30,141.13 877.60,158.71" fill="none" stroke="#fff" stroke-width="0.35" opacity="0.45"/>
<line x1="676.6" y1="211.6" x2="676.6" y2="196" stroke="#0000ff" stroke-width="1.2"/>
</g>
<line x1="676.10" y1="237.3" x2="676.10" y2="234.3" stroke="#333" stroke-width="0.8"/>
<line x1="676.10" y1="49.85" x2="676.10" y2="52.85" stroke="#333" stroke-width="0.8"/>
<line x1="700.79" y1="237.3" x2="700.79" y2="234.3" stroke="#333" stroke-width="0.8"/>
<line x1="700.79" y1="49.85" x2="700.79" y2="52.85" stroke="#333" stroke-width="0.8"/>
<line x1="725.49" y1="237.3" x2="725.49" y2="234.3" stroke="#333" stroke-width="0.8"/>
<line x1="725.49" y1="49.85" x2="725.49" y2="52.85" stroke="#333" stroke-width="0.8"/>
<line x1="750.18" y1="237.3" x2="750.18" y2="234.3" stroke="#333" stroke-width="0.8"/>
<line x1="750.18" y1="49.85" x2="750.18" y2="52.85" stroke="#333" stroke-width="0.8"/>
<line x1="774.88" y1="237.3" x2="774.88" y2="234.3" stroke="#333" stroke-width="0.8"/>
<line x1="774.88" y1="49.85" x2="774.88" y2="52.85" stroke="#333" stroke-width="0.8"/>
<line x1="799.57" y1="237.3" x2="799.57" y2="234.3" stroke="#333" stroke-width="0.8"/>
<line x1="799.57" y1="49.85" x2="799.57" y2="52.85" stroke="#333" stroke-width="0.8"/>
<line x1="824.27" y1="237.3" x2="824.27" y2="234.3" stroke="#333" stroke-width="0.8"/>
<line x1="824.27" y1="49.85" x2="824.27" y2="52.85" stroke="#333" stroke-width="0.8"/>
<line x1="848.96" y1="237.3" x2="848.96" y2="234.3" stroke="#333" stroke-width="0.8"/>
<line x1="848.96" y1="49.85" x2="848.96" y2="52.85" stroke="#333" stroke-width="0.8"/>
<line x1="873.66" y1="237.3" x2="873.66" y2="234.3" stroke="#333" stroke-width="0.8"/>
<line x1="873.66" y1="49.85" x2="873.66" y2="52.85" stroke="#333" stroke-width="0.8"/>
<line x1="676.1" y1="237.30" x2="679.1" y2="237.30" stroke="#333" stroke-width="0.8"/>
<line x1="878.4" y1="237.30" x2="875.4" y2="237.30" stroke="#333" stroke-width="0.8"/>
<line x1="676.1" y1="210.52" x2="679.1" y2="210.52" stroke="#333" stroke-width="0.8"/>
<line x1="878.4" y1="210.52" x2="875.4" y2="210.52" stroke="#333" stroke-width="0.8"/>
<line x1="676.1" y1="183.74" x2="679.1" y2="183.74" stroke="#333" stroke-width="0.8"/>
<line x1="878.4" y1="183.74" x2="875.4" y2="183.74" stroke="#333" stroke-width="0.8"/>
<line x1="676.1" y1="156.96" x2="679.1" y2="156.96" stroke="#333" stroke-width="0.8"/>
<line x1="878.4" y1="156.96" x2="875.4" y2="156.96" stroke="#333" stroke-width="0.8"/>
<line x1="676.1" y1="130.19" x2="679.1" y2="130.19" stroke="#333" stroke-width="0.8"/>
<line x1="878.4" y1="130.19" x2="875.4" y2="130.19" stroke="#333" stroke-width="0.8"/>
<line x1="676.1" y1="103.41" x2="679.1" y2="103.41" stroke="#333" stroke-width="0.8"/>
<line x1="878.4" y1="103.41" x2="875.4" y2="103.41" stroke="#333" stroke-width="0.8"/>
<line x1="676.1" y1="76.63" x2="679.1" y2="76.63" stroke="#333" stroke-width="0.8"/>
<line x1="878.4" y1="76.63" x2="875.4" y2="76.63" stroke="#333" stroke-width="0.8"/>
<line x1="676.1" y1="49.85" x2="679.1" y2="49.85" stroke="#333" stroke-width="0.8"/>
<line x1="878.4" y1="49.85" x2="875.4" y2="49.85" stroke="#333" stroke-width="0.8"/>
<rect x="676.1" y="49.85" width="202.29999999999995" height="187.45000000000002" fill="none" stroke="#444" stroke-width="1.2"/>
<rect x="841.40" y="53.35" width="33.10" height="19.10" fill="#fff" stroke="#222" stroke-width="1"/>
<line x1="845.10" y1="59.05" x2="856.20" y2="59.05" stroke="#0000ff" stroke-width="1" opacity="0.6"/>
<line x1="845.10" y1="67.35" x2="856.20" y2="67.35" stroke="#008000" stroke-width="1" opacity="0.7"/>
<text x="860.00" y="61.45" class="lg" textLength="9" lengthAdjust="spacingAndGlyphs">XX</text>
<text x="860.00" y="69.75" class="lg" textLength="9" lengthAdjust="spacingAndGlyphs">YY</text>
<text x="556.2" y="259.85" class="al" text-anchor="middle">Channel</text>
<text x="777.2" y="259.70" class="al" text-anchor="middle">Channel</text>
<rect x="455.0" y="254.7" width="202.39999999999998" height="187.60000000000002" fill="#fff"/>
<g clip-path="url(#clip_bl)">
<polygon points="455.00,417.50 455.50,416.13 456.00,414.53 456.50,413.26 457.00,411.73 457.50,410.00 458.00,408.23 458.50,406.61 459.00,405.06 459.50,403.00 460.00,401.15 460.50,398.69 461.00,396.38 461.50,393.47 462.00,390.47 462.50,386.84 463.00,383.14 463.50,378.68 464.00,374.04 464.50,369.40 465.00,364.77 465.50,360.34 466.00,355.87 466.50,351.39 467.00,346.96 467.50,342.34 468.00,337.88 468.50,333.28 469.00,328.81 469.50,324.38 470.00,320.34 470.50,316.50 471.00,312.95 471.50,309.67 472.00,306.56 472.50,303.49 473.00,300.56 473.50,297.68 474.00,294.92 474.50,292.79 475.00,290.89 475.50,289.02 476.00,288.07 476.50,286.89 477.00,285.38 477.50,284.36 478.00,284.18 478.50,283.56 479.00,283.29 479.50,282.70 480.00,283.06 480.50,282.65 481.00,282.54 481.50,283.14 482.00,282.40 482.50,283.00 483.00,282.78 483.50,283.02 484.00,283.09 484.50,283.10 485.00,283.53 485.50,283.21 486.00,283.43 486.50,283.42 487.00,283.66 487.50,283.57 488.00,283.30 488.50,283.11 489.00,283.89 489.50,283.37 490.00,283.70 490.50,284.26 491.00,284.43 491.50,283.74 492.00,284.40 492.50,284.57 493.00,284.11 493.50,284.07 494.00,283.87 494.50,284.18 495.00,284.27 495.50,284.17 496.00,284.15 496.50,283.64 497.00,283.22 497.50,283.82 498.00,283.39 498.50,283.25 499.00,283.32 499.50,282.69 500.00,282.18 500.50,282.64 501.00,282.08 501.50,281.78 502.00,282.20 502.50,281.49 503.00,281.50 503.50,281.45 504.00,281.72 504.50,281.50 505.00,281.52 505.50,280.68 506.00,280.62 506.50,281.13 507.00,280.60 507.50,280.75 508.00,280.14 508.50,280.19 509.00,279.74 509.50,279.82 510.00,280.27 510.50,279.93 511.00,279.66 511.50,279.27 512.00,279.68 512.50,279.76 513.00,279.60 513.50,279.57 514.00,279.58 514.50,279.35 515.00,279.38 515.50,279.10 516.00,278.71 516.50,278.61 517.00,279.29 517.50,278.89 518.00,278.78 518.50,279.23 519.00,278.88 519.50,279.17 520.00,279.02 520.50,279.06 521.00,278.63 521.50,279.16 522.00,278.90 522.50,278.88 523.00,279.14 523.50,278.63 524.00,279.20 524.50,279.24 525.00,278.96 525.50,279.19 526.00,279.04 526.50,279.62 527.00,279.69 527.50,279.24 528.00,279.63 528.50,279.30 529.00,279.95 529.50,280.04 530.00,279.59 530.50,280.15 531.00,280.49 531.50,280.52 532.00,280.16 532.50,280.75 533.00,280.63 533.50,280.53 534.00,280.88 534.50,280.90 535.00,280.86 535.50,281.62 536.00,281.26 536.50,281.71 537.00,282.18 537.50,282.41 538.00,282.40 538.50,282.73 539.00,282.32 539.50,282.67 540.00,283.29 540.50,282.71 541.00,283.11 541.50,283.41 542.00,283.83 542.50,283.68 543.00,283.43 543.50,283.87 544.00,284.12 544.50,284.12 545.00,284.31 545.50,284.38 546.00,284.89 546.50,285.07 547.00,285.32 547.50,284.72 548.00,285.60 548.50,285.51 549.00,285.35 549.50,285.57 550.00,285.35 550.50,286.11 551.00,286.35 551.50,286.47 552.00,286.33 552.50,286.68 553.00,286.71 553.50,286.68 554.00,287.19 554.50,287.08 555.00,287.85 555.50,287.60 556.00,287.51 556.50,287.71 557.00,288.27 557.50,288.15 558.00,289.05 558.50,289.25 559.00,289.38 559.50,289.59 560.00,289.59 560.50,290.18 561.00,290.79 561.50,290.50 562.00,291.18 562.50,290.88 563.00,291.73 563.50,291.92 564.00,292.32 564.50,292.43 565.00,292.43 565.50,292.96 566.00,293.40 566.50,293.16 567.00,293.26 567.50,294.04 568.00,293.98 568.50,294.50 569.00,294.75 569.50,294.64 570.00,294.92 570.50,294.60 571.00,295.56 571.50,295.19 572.00,295.30 572.50,295.77 573.00,295.89 573.50,296.30 574.00,296.49 574.50,296.86 575.00,296.29 575.50,297.26 576.00,297.36 576.50,297.04 577.00,297.48 577.50,297.64 578.00,298.04 578.50,298.37 579.00,298.03 579.50,298.84 580.00,298.92 580.50,298.76 581.00,299.39 581.50,299.06 582.00,299.99 582.50,299.93 583.00,300.17 583.50,300.46 584.00,300.48 584.50,301.37 585.00,301.19 585.50,301.24 586.00,302.14 586.50,301.97 587.00,302.32 587.50,302.61 588.00,302.75 588.50,302.93 589.00,303.12 589.50,303.20 590.00,303.66 590.50,303.61 591.00,304.14 591.50,304.73 592.00,305.07 592.50,305.38 593.00,305.45 593.50,305.82 594.00,305.58 594.50,305.82 595.00,306.13 595.50,306.58 596.00,306.75 596.50,307.18 597.00,306.84 597.50,307.87 598.00,307.85 598.50,307.86 599.00,308.43 599.50,308.07 600.00,308.62 600.50,308.93 601.00,309.41 601.50,309.42 602.00,309.34 602.50,309.80 603.00,310.18 603.50,309.88 604.00,310.28 604.50,309.95 605.00,310.23 605.50,310.34 606.00,310.32 606.50,310.52 607.00,311.07 607.50,310.97 608.00,311.36 608.50,311.51 609.00,311.61 609.50,311.79 610.00,311.76 610.50,311.85 611.00,311.52 611.50,311.97 612.00,312.22 612.50,311.94 613.00,312.19 613.50,311.79 614.00,312.25 614.50,311.98 615.00,312.35 615.50,312.09 616.00,311.76 616.50,312.28 617.00,312.07 617.50,312.15 618.00,312.46 618.50,312.48 619.00,311.70 619.50,312.11 620.00,311.76 620.50,311.95 621.00,311.50 621.50,312.02 622.00,311.69 622.50,311.55 623.00,311.25 623.50,311.85 624.00,311.47 624.50,311.27 625.00,311.07 625.50,311.37 626.00,310.91 626.50,310.67 627.00,310.53 627.50,310.87 628.00,310.56 628.50,310.57 629.00,310.37 629.50,310.27 630.00,309.61 630.50,310.28 631.00,309.28 631.50,309.90 632.00,309.65 632.50,309.32 633.00,309.01 633.50,308.27 634.00,308.03 634.50,307.70 635.00,307.94 635.50,308.04 636.00,307.31 636.50,306.91 637.00,307.50 637.50,306.77 638.00,307.45 638.50,306.76 639.00,306.97 639.50,306.65 640.00,306.78 640.50,307.68 641.00,307.48 641.50,307.94 642.00,308.03 642.50,308.64 643.00,308.70 643.50,309.01 644.00,309.75 644.50,309.80 645.00,309.99 645.50,311.25 646.00,311.29 646.50,312.46 647.00,313.60 647.50,314.16 648.00,315.66 648.50,317.05 649.00,318.62 649.50,320.12 650.00,322.36 650.50,324.39 651.00,326.59 651.50,329.06 652.00,331.37 652.50,334.23 653.00,337.13 653.50,340.19 654.00,343.63 654.50,347.34 655.00,351.23 655.50,355.36 656.00,359.67 656.50,364.03 657.00,368.40 657.50,372.67 657.50,373.77 657.00,369.53 656.50,365.02 656.00,360.65 655.50,356.41 655.00,352.39 654.50,348.42 654.00,344.91 653.50,341.76 653.00,338.69 652.50,335.71 652.00,333.13 651.50,330.60 651.00,328.59 650.50,326.42 650.00,324.54 649.50,322.74 649.00,321.15 648.50,319.99 648.00,318.65 647.50,317.59 647.00,316.91 646.50,316.48 646.00,315.85 645.50,315.01 645.00,314.36 644.50,313.84 644.00,313.68 643.50,313.19 643.00,312.78 642.50,312.63 642.00,312.43 641.50,312.17 641.00,311.76 640.50,311.62 640.00,311.69 639.50,311.97 639.00,311.98 638.50,311.42 638.00,311.62 637.50,312.13 637.00,312.18 636.50,312.10 636.00,312.27 635.50,312.20 635.00,312.33 634.50,313.08 634.00,313.24 633.50,313.54 633.00,313.64 632.50,314.03 632.00,313.92 631.50,314.43 631.00,314.16 630.50,314.34 630.00,314.33 629.50,315.18 629.00,314.69 628.50,314.97 628.00,315.59 627.50,315.61 627.00,315.69 626.50,315.71 626.00,315.36 625.50,315.95 625.00,315.70 624.50,316.46 624.00,316.50 623.50,315.84 623.00,316.65 622.50,316.65 622.00,316.77 621.50,316.41 621.00,317.00 620.50,316.83 620.00,316.55 619.50,317.11 619.00,317.23 618.50,316.83 618.00,316.73 617.50,316.92 617.00,316.88 616.50,316.78 616.00,317.22 615.50,317.24 615.00,316.97 614.50,316.60 614.00,317.02 613.50,316.66 613.00,317.05 612.50,316.51 612.00,316.72 611.50,316.10 611.00,316.03 610.50,316.71 610.00,316.56 609.50,316.59 609.00,316.18 608.50,316.31 608.00,316.13 607.50,315.83 607.00,315.87 606.50,315.47 606.00,315.55 605.50,315.18 605.00,315.06 604.50,315.40 604.00,314.92 603.50,315.02 603.00,314.70 602.50,314.36 602.00,314.44 601.50,313.81 601.00,313.95 600.50,313.92 600.00,313.24 599.50,313.36 599.00,312.45 598.50,312.47 598.00,312.73 597.50,312.42 597.00,311.87 596.50,311.52 596.00,311.56 595.50,311.21 595.00,310.76 594.50,310.80 594.00,310.43 593.50,310.44 593.00,309.81 592.50,309.84 592.00,309.09 591.50,308.77 591.00,308.77 590.50,309.09 590.00,308.36 589.50,308.58 589.00,308.05 588.50,307.65 588.00,307.81 587.50,307.03 587.00,306.75 586.50,306.37 586.00,306.58 585.50,306.43 585.00,305.64 584.50,305.77 584.00,305.29 583.50,305.14 583.00,304.68 582.50,304.95 582.00,304.68 581.50,304.29 581.00,303.72 580.50,303.42 580.00,303.75 579.50,303.05 579.00,303.19 578.50,302.55 578.00,302.26 577.50,302.77 577.00,301.78 576.50,302.08 576.00,301.80 575.50,301.17 575.00,301.40 574.50,300.96 574.00,301.36 573.50,300.42 573.00,300.48 572.50,300.25 572.00,299.91 571.50,299.84 571.00,299.78 570.50,299.83 570.00,299.78 569.50,299.16 569.00,299.14 568.50,298.88 568.00,298.71 567.50,298.80 567.00,297.74 566.50,297.88 566.00,297.29 565.50,296.99 565.00,296.91 564.50,297.30 564.00,296.43 563.50,296.62 563.00,295.96 562.50,296.25 562.00,295.88 561.50,294.90 561.00,295.09 560.50,294.54 560.00,294.13 559.50,294.54 559.00,293.94 558.50,293.76 558.00,293.21 557.50,293.33 557.00,293.10 556.50,292.50 556.00,292.37 555.50,292.35 555.00,291.75 554.50,291.54 554.00,292.15 553.50,291.29 553.00,291.00 552.50,291.51 552.00,291.02 551.50,291.23 551.00,290.57 550.50,290.40 550.00,290.18 549.50,290.16 549.00,290.01 548.50,289.72 548.00,289.71 547.50,289.60 547.00,290.05 546.50,289.68 546.00,289.72 545.50,288.87 545.00,289.02 544.50,289.01 544.00,288.73 543.50,288.82 543.00,288.30 542.50,288.47 542.00,288.33 541.50,288.48 541.00,287.78 540.50,287.65 540.00,288.01 539.50,287.40 539.00,287.04 538.50,287.27 538.00,286.61 537.50,286.63 537.00,286.49 536.50,286.47 536.00,286.39 535.50,285.84 535.00,286.43 534.50,286.05 534.00,285.52 533.50,285.85 533.00,285.78 532.50,284.92 532.00,285.29 531.50,284.70 531.00,284.49 530.50,284.42 530.00,284.26 529.50,284.44 529.00,284.25 528.50,284.38 528.00,283.91 527.50,284.63 527.00,284.54 526.50,283.89 526.00,283.95 525.50,283.93 525.00,283.64 524.50,283.66 524.00,283.89 523.50,283.67 523.00,283.39 522.50,283.43 522.00,283.83 521.50,283.75 521.00,283.77 520.50,283.87 520.00,283.79 519.50,283.28 519.00,283.27 518.50,283.96 518.00,283.54 517.50,284.03 517.00,283.37 516.50,283.71 516.00,284.28 515.50,284.14 515.00,284.21 514.50,283.73 514.00,283.66 513.50,284.38 513.00,283.86 512.50,284.05 512.00,284.01 511.50,284.22 511.00,284.32 510.50,284.91 510.00,284.98 509.50,285.08 509.00,285.04 508.50,284.86 508.00,285.28 507.50,284.95 507.00,285.74 506.50,285.39 506.00,285.59 505.50,285.41 505.00,286.22 504.50,285.98 504.00,285.87 503.50,286.01 503.00,286.32 502.50,286.90 502.00,287.07 501.50,286.67 501.00,287.27 500.50,287.55 500.00,287.71 499.50,287.12 499.00,287.40 498.50,287.69 498.00,287.68 497.50,287.75 497.00,288.61 496.50,288.94 496.00,289.01 495.50,289.21 495.00,288.44 494.50,289.22 494.00,288.64 493.50,288.68 493.00,288.93 492.50,288.94 492.00,288.74 491.50,288.94 491.00,288.72 490.50,288.31 490.00,288.63 489.50,288.24 489.00,288.73 488.50,288.65 488.00,288.61 487.50,288.05 487.00,287.77 486.50,288.52 486.00,288.22 485.50,287.70 485.00,288.01 484.50,287.78 484.00,287.95 483.50,287.34 483.00,287.43 482.50,287.22 482.00,287.81 481.50,287.41 481.00,287.80 480.50,287.41 480.00,287.79 479.50,287.57 479.00,287.24 478.50,287.47 478.00,288.30 477.50,288.31 477.00,289.49 476.50,289.96 476.00,290.82 475.50,292.24 475.00,293.21 474.50,295.00 474.00,297.06 473.50,299.50 473.00,302.14 472.50,305.00 472.00,308.02 471.50,311.25 471.00,314.45 470.50,317.79 470.00,321.52 469.50,325.56 469.00,329.73 468.50,334.20 468.00,338.82 467.50,343.34 467.00,347.98 466.50,352.40 466.00,356.81 465.50,361.38 465.00,365.81 464.50,370.32 464.00,375.12 463.50,379.66 463.00,384.22 462.50,388.14 462.00,391.85 461.50,394.89 461.00,397.88 460.50,400.48 460.00,403.07 459.50,405.03 459.00,407.28 458.50,409.07 458.00,410.72 457.50,412.47 457.00,414.08 456.50,415.78 456.00,417.28 455.50,419.11 455.00,420.11" fill="#0000ff" stroke="none"/>
<polyline points="455.00,418.90 455.50,417.48 456.00,416.05 456.50,414.58 457.00,413.01 457.50,411.31 458.00,409.58 458.50,407.82 459.00,405.99 459.50,404.06 460.00,401.97 460.50,399.63 461.00,397.07 461.50,394.24 462.00,391.06 462.50,387.54 463.00,383.62 463.50,379.23 464.00,374.58 464.50,369.87 465.00,365.30 465.50,360.83 466.00,356.35 466.50,351.87 467.00,347.39 467.50,342.89 468.00,338.32 468.50,333.74 469.00,329.27 469.50,325.00 470.00,320.94 470.50,317.12 471.00,313.67 471.50,310.47 472.00,307.33 472.50,304.25 473.00,301.30 473.50,298.54 474.00,296.04 474.50,293.91 475.00,292.13 475.50,290.64 476.00,289.38 476.50,288.31 477.00,287.40 477.50,286.60 478.00,285.90 478.50,285.43 479.00,285.23 479.50,285.16 480.00,285.13 480.50,285.10 481.00,285.09 481.50,285.10 482.00,285.13 482.50,285.17 483.00,285.22 483.50,285.28 484.00,285.34 484.50,285.41 485.00,285.48 485.50,285.54 486.00,285.61 486.50,285.68 487.00,285.75 487.50,285.82 488.00,285.88 488.50,285.94 489.00,286.01 489.50,286.09 490.00,286.19 490.50,286.29 491.00,286.39 491.50,286.48 492.00,286.56 492.50,286.61 493.00,286.65 493.50,286.65 494.00,286.63 494.50,286.58 495.00,286.50 495.50,286.39 496.00,286.27 496.50,286.13 497.00,285.98 497.50,285.82 498.00,285.66 498.50,285.49 499.00,285.31 499.50,285.14 500.00,284.98 500.50,284.81 501.00,284.66 501.50,284.51 502.00,284.37 502.50,284.24 503.00,284.10 503.50,283.96 504.00,283.82 504.50,283.68 505.00,283.54 505.50,283.41 506.00,283.27 506.50,283.14 507.00,283.01 507.50,282.88 508.00,282.75 508.50,282.63 509.00,282.52 509.50,282.41 510.00,282.31 510.50,282.21 511.00,282.12 511.50,282.03 512.00,281.95 512.50,281.88 513.00,281.80 513.50,281.73 514.00,281.67 514.50,281.61 515.00,281.55 515.50,281.50 516.00,281.46 516.50,281.42 517.00,281.39 517.50,281.36 518.00,281.33 518.50,281.32 519.00,281.30 519.50,281.30 520.00,281.30 520.50,281.30 521.00,281.31 521.50,281.32 522.00,281.34 522.50,281.36 523.00,281.38 523.50,281.41 524.00,281.44 524.50,281.48 525.00,281.53 525.50,281.58 526.00,281.64 526.50,281.70 527.00,281.77 527.50,281.84 528.00,281.92 528.50,282.01 529.00,282.10 529.50,282.20 530.00,282.30 530.50,282.41 531.00,282.53 531.50,282.65 532.00,282.78 532.50,282.92 533.00,283.06 533.50,283.20 534.00,283.35 534.50,283.50 535.00,283.66 535.50,283.81 536.00,283.97 536.50,284.13 537.00,284.29 537.50,284.45 538.00,284.61 538.50,284.77 539.00,284.93 539.50,285.10 540.00,285.26 540.50,285.41 541.00,285.57 541.50,285.73 542.00,285.88 542.50,286.03 543.00,286.18 543.50,286.32 544.00,286.46 544.50,286.60 545.00,286.73 545.50,286.87 546.00,287.00 546.50,287.13 547.00,287.26 547.50,287.40 548.00,287.53 548.50,287.67 549.00,287.80 549.50,287.94 550.00,288.09 550.50,288.23 551.00,288.38 551.50,288.54 552.00,288.70 552.50,288.86 553.00,289.03 553.50,289.21 554.00,289.39 554.50,289.58 555.00,289.78 555.50,289.99 556.00,290.21 556.50,290.43 557.00,290.67 557.50,290.91 558.00,291.15 558.50,291.40 559.00,291.66 559.50,291.92 560.00,292.18 560.50,292.45 561.00,292.72 561.50,292.99 562.00,293.26 562.50,293.53 563.00,293.79 563.50,294.06 564.00,294.32 564.50,294.58 565.00,294.84 565.50,295.09 566.00,295.34 566.50,295.58 567.00,295.81 567.50,296.03 568.00,296.25 568.50,296.47 569.00,296.68 569.50,296.88 570.00,297.09 570.50,297.29 571.00,297.48 571.50,297.68 572.00,297.87 572.50,298.06 573.00,298.25 573.50,298.44 574.00,298.63 574.50,298.82 575.00,299.01 575.50,299.20 576.00,299.40 576.50,299.59 577.00,299.79 577.50,300.00 578.00,300.20 578.50,300.42 579.00,300.63 579.50,300.86 580.00,301.08 580.50,301.31 581.00,301.55 581.50,301.79 582.00,302.04 582.50,302.28 583.00,302.53 583.50,302.79 584.00,303.04 584.50,303.30 585.00,303.55 585.50,303.81 586.00,304.07 586.50,304.33 587.00,304.59 587.50,304.85 588.00,305.11 588.50,305.37 589.00,305.62 589.50,305.88 590.00,306.13 590.50,306.37 591.00,306.62 591.50,306.86 592.00,307.10 592.50,307.34 593.00,307.58 593.50,307.82 594.00,308.07 594.50,308.31 595.00,308.56 595.50,308.81 596.00,309.05 596.50,309.30 597.00,309.54 597.50,309.78 598.00,310.02 598.50,310.26 599.00,310.49 599.50,310.72 600.00,310.94 600.50,311.16 601.00,311.37 601.50,311.58 602.00,311.77 602.50,311.96 603.00,312.14 603.50,312.31 604.00,312.48 604.50,312.63 605.00,312.77 605.50,312.91 606.00,313.05 606.50,313.18 607.00,313.30 607.50,313.42 608.00,313.53 608.50,313.63 609.00,313.73 609.50,313.83 610.00,313.91 610.50,314.00 611.00,314.07 611.50,314.14 612.00,314.21 612.50,314.26 613.00,314.31 613.50,314.36 614.00,314.40 614.50,314.43 615.00,314.46 615.50,314.48 616.00,314.49 616.50,314.50 617.00,314.50 617.50,314.49 618.00,314.47 618.50,314.44 619.00,314.41 619.50,314.37 620.00,314.32 620.50,314.26 621.00,314.20 621.50,314.14 622.00,314.07 622.50,313.99 623.00,313.91 623.50,313.82 624.00,313.73 624.50,313.64 625.00,313.54 625.50,313.44 626.00,313.34 626.50,313.23 627.00,313.12 627.50,313.01 628.00,312.89 628.50,312.77 629.00,312.65 629.50,312.52 630.00,312.38 630.50,312.22 631.00,312.04 631.50,311.84 632.00,311.62 632.50,311.39 633.00,311.16 633.50,310.91 634.00,310.66 634.50,310.42 635.00,310.18 635.50,309.97 636.00,309.79 636.50,309.64 637.00,309.54 637.50,309.46 638.00,309.40 638.50,309.36 639.00,309.37 639.50,309.41 640.00,309.50 640.50,309.64 641.00,309.83 641.50,310.05 642.00,310.30 642.50,310.58 643.00,310.87 643.50,311.20 644.00,311.57 644.50,311.98 645.00,312.45 645.50,312.99 646.00,313.61 646.50,314.34 647.00,315.19 647.50,316.14 648.00,317.22 648.50,318.45 649.00,319.88 649.50,321.50 650.00,323.32 650.50,325.32 651.00,327.49 651.50,329.82 652.00,332.34 652.50,335.04 653.00,337.93 653.50,341.01 654.00,344.30 654.50,347.91 655.00,351.81 655.50,355.92 656.00,360.17 656.50,364.51 657.00,368.90 657.50,373.26" fill="none" stroke="#0000ff" stroke-width="1.1"/>
<polyline points="455.00,419.32 456.30,414.92 457.60,410.80 458.90,405.76 460.20,400.59 461.50,394.54 462.80,385.13 464.10,373.48 465.40,362.09 466.70,350.37 468.00,338.14 469.30,326.65 470.60,316.50 471.90,307.60 473.20,300.11 474.50,293.56 475.80,290.56 477.10,286.15 478.40,287.13 479.70,284.22 481.00,284.49 482.30,283.67 483.60,286.74 484.90,286.61 486.20,284.13 487.50,285.92 488.80,285.60 490.10,286.58 491.40,285.89 492.70,288.23 494.00,285.64 495.30,287.55 496.60,285.30 497.90,286.21 499.20,285.00 500.50,284.90 501.80,284.50 503.10,284.51 504.40,282.21 505.70,281.82 507.00,284.65 508.30,281.82 509.60,281.89 510.90,281.23 512.20,282.43 513.50,283.43 514.80,281.24 516.10,280.82 517.40,280.83 518.70,279.65 520.00,279.86 521.30,279.73 522.60,280.75 523.90,283.14 525.20,280.29 526.50,281.87 527.80,280.86 529.10,280.50 530.40,283.56 531.70,281.41 533.00,281.79 534.30,284.54 535.60,282.95 536.90,283.21 538.20,286.21 539.50,284.04 540.80,286.66 542.10,285.24 543.40,286.52 544.70,285.99 546.00,286.44 547.30,288.85 548.60,289.11 549.90,286.93 551.20,289.22 552.50,287.61 553.80,288.62 555.10,288.35 556.40,290.89 557.70,291.78 559.00,292.50 560.30,293.28 561.60,292.69 562.90,292.65 564.20,292.74 565.50,294.89 566.80,297.20 568.10,296.12 569.40,297.24 570.70,298.80 572.00,299.12 573.30,299.19 574.60,299.17 575.90,298.43 577.20,300.73 578.50,300.13 579.80,301.70 581.10,300.65 582.40,303.73 583.70,301.74 585.00,304.54 586.30,305.55 587.60,303.72 588.90,306.81 590.20,306.72 591.50,307.22 592.80,306.64 594.10,307.53 595.40,307.85 596.70,309.20 598.00,310.53 599.30,311.41 600.60,311.91 601.90,311.21 603.20,311.64 604.50,313.54 605.80,314.64 607.10,312.35 608.40,313.31 609.70,313.08 611.00,315.73 612.30,312.55 613.60,315.74 614.90,315.39 616.20,313.90 617.50,315.12 618.80,313.97 620.10,314.79 621.40,313.89 622.70,315.41 624.00,313.58 625.30,314.57 626.60,313.47 627.90,312.47 629.20,314.22 630.50,311.16 631.80,313.11 633.10,312.75 634.40,311.66 635.70,310.28 637.00,309.97 638.30,310.88 639.60,309.19 640.90,310.91 642.20,311.34 643.50,312.39 644.80,312.07 646.10,314.19 647.40,314.93 648.70,318.15 650.00,322.68 651.30,329.21 652.60,335.45 653.90,344.05 655.20,353.11 656.50,364.25" fill="none" stroke="#fff" stroke-width="0.35" opacity="0.45"/>
<polygon points="455.00,386.65 455.50,386.52 456.00,386.30 456.50,385.50 457.00,385.27 457.50,383.67 458.00,381.84 458.50,379.01 459.00,376.13 459.50,372.88 460.00,369.90 460.50,366.42 461.00,363.09 461.50,359.45 462.00,355.70 462.50,351.92 463.00,347.98 463.50,343.96 464.00,339.91 464.50,335.65 465.00,330.94 465.50,325.77 466.00,318.75 466.50,311.10 467.00,305.39 467.50,300.43 468.00,295.46 468.50,290.95 469.00,286.40 469.50,282.15 470.00,278.47 470.50,274.79 471.00,271.66 471.50,268.69 472.00,265.76 472.50,263.05 473.00,260.81 473.50,258.44 474.00,257.33 474.50,256.05 475.00,255.26 475.50,254.53 476.00,253.91 476.50,253.84 477.00,253.76 477.50,254.00 478.00,254.05 478.50,254.77 479.00,255.01 479.50,255.77 480.00,256.41 480.50,257.11 481.00,257.61 481.50,257.63 482.00,258.52 482.50,259.20 483.00,259.89 483.50,260.01 484.00,260.77 484.50,261.40 485.00,261.92 485.50,262.94 486.00,263.13 486.50,264.18 487.00,264.21 487.50,264.95 488.00,265.10 488.50,265.85 489.00,266.12 489.50,266.21 490.00,266.33 490.50,267.17 491.00,267.63 491.50,267.98 492.00,267.80 492.50,267.89 493.00,268.92 493.50,268.89 494.00,269.28 494.50,268.82 495.00,269.76 495.50,270.01 496.00,269.57 496.50,269.53 497.00,269.87 497.50,270.58 498.00,270.41 498.50,270.37 499.00,270.06 499.50,270.20 500.00,270.81 500.50,270.42 501.00,270.08 501.50,270.22 502.00,270.04 502.50,269.69 503.00,269.57 503.50,269.58 504.00,269.69 504.50,269.79 505.00,269.77 505.50,269.61 506.00,269.03 506.50,268.75 507.00,268.50 507.50,268.28 508.00,268.67 508.50,268.45 509.00,268.40 509.50,267.92 510.00,267.40 510.50,267.40 511.00,267.52 511.50,267.61 512.00,266.84 512.50,266.63 513.00,266.58 513.50,266.84 514.00,266.59 514.50,266.25 515.00,265.79 515.50,266.22 516.00,265.89 516.50,266.04 517.00,265.93 517.50,265.55 518.00,264.88 518.50,264.83 519.00,264.84 519.50,264.74 520.00,264.70 520.50,264.10 521.00,264.18 521.50,264.39 522.00,263.72 522.50,263.23 523.00,263.87 523.50,262.88 524.00,263.51 524.50,263.15 525.00,262.39 525.50,262.23 526.00,262.77 526.50,262.13 527.00,262.07 527.50,262.11 528.00,261.62 528.50,261.60 529.00,261.83 529.50,261.46 530.00,261.13 530.50,261.08 531.00,261.03 531.50,260.74 532.00,261.16 532.50,261.12 533.00,261.02 533.50,260.38 534.00,260.43 534.50,259.97 535.00,259.74 535.50,260.40 536.00,260.06 536.50,259.92 537.00,259.71 537.50,259.29 538.00,259.47 538.50,259.64 539.00,259.23 539.50,259.44 540.00,259.15 540.50,259.47 541.00,258.97 541.50,258.97 542.00,258.74 542.50,258.73 543.00,258.65 543.50,258.43 544.00,258.90 544.50,258.28 545.00,258.33 545.50,258.20 546.00,258.40 546.50,258.62 547.00,257.81 547.50,257.84 548.00,257.65 548.50,258.06 549.00,257.63 549.50,257.59 550.00,257.84 550.50,257.48 551.00,257.52 551.50,258.12 552.00,258.06 552.50,257.78 553.00,257.64 553.50,257.51 554.00,257.57 554.50,257.27 555.00,257.32 555.50,257.94 556.00,257.71 556.50,257.21 557.00,257.32 557.50,257.98 558.00,257.43 558.50,257.88 559.00,257.54 559.50,257.10 560.00,257.93 560.50,257.27 561.00,257.59 561.50,257.16 562.00,257.29 562.50,258.03 563.00,257.54 563.50,257.38 564.00,257.94 564.50,257.60 565.00,258.05 565.50,258.15 566.00,258.09 566.50,258.19 567.00,257.66 567.50,258.39 568.00,258.30 568.50,258.33 569.00,258.23 569.50,258.07 570.00,258.49 570.50,258.37 571.00,259.13 571.50,258.76 572.00,259.31 572.50,258.81 573.00,259.18 573.50,259.71 574.00,259.21 574.50,259.64 575.00,259.81 575.50,260.32 576.00,259.74 576.50,260.24 577.00,260.09 577.50,260.96 578.00,260.60 578.50,261.04 579.00,261.08 579.50,261.19 580.00,261.21 580.50,261.33 581.00,262.21 581.50,261.81 582.00,262.69 582.50,263.01 583.00,262.99 583.50,263.24 584.00,263.06 584.50,263.50 585.00,263.90 585.50,263.80 586.00,263.94 586.50,264.46 587.00,264.72 587.50,264.80 588.00,265.57 588.50,265.23 589.00,266.22 589.50,266.60 590.00,266.20 590.50,267.04 591.00,267.18 591.50,267.30 592.00,267.92 592.50,267.93 593.00,268.28 593.50,268.81 594.00,268.66 594.50,269.10 595.00,269.66 595.50,269.43 596.00,270.07 596.50,270.72 597.00,270.30 597.50,271.02 598.00,271.61 598.50,271.76 599.00,272.10 599.50,272.59 600.00,272.65 600.50,273.10 601.00,273.36 601.50,273.26 602.00,273.99 602.50,274.39 603.00,274.53 603.50,274.69 604.00,275.06 604.50,274.94 605.00,274.94 605.50,275.22 606.00,275.78 606.50,275.74 607.00,275.97 607.50,276.33 608.00,276.41 608.50,277.00 609.00,276.90 609.50,277.31 610.00,277.33 610.50,277.53 611.00,278.33 611.50,277.85 612.00,278.75 612.50,278.59 613.00,278.63 613.50,278.60 614.00,279.45 614.50,279.07 615.00,279.52 615.50,279.95 616.00,279.84 616.50,279.71 617.00,280.35 617.50,279.80 618.00,280.65 618.50,280.60 619.00,280.63 619.50,280.98 620.00,280.32 620.50,280.39 621.00,280.54 621.50,281.27 622.00,280.80 622.50,281.33 623.00,281.45 623.50,281.17 624.00,281.79 624.50,281.93 625.00,281.17 625.50,281.75 626.00,281.41 626.50,281.79 627.00,282.14 627.50,281.83 628.00,282.14 628.50,282.25 629.00,282.33 629.50,281.99 630.00,282.12 630.50,282.04 631.00,281.46 631.50,281.54 632.00,281.59 632.50,281.94 633.00,281.40 633.50,281.34 634.00,281.37 634.50,281.48 635.00,281.35 635.50,280.99 636.00,280.93 636.50,280.19 637.00,280.36 637.50,279.95 638.00,279.52 638.50,279.49 639.00,279.60 639.50,279.16 640.00,278.32 640.50,278.72 641.00,278.21 641.50,277.49 642.00,276.90 642.50,276.51 643.00,276.17 643.50,275.74 644.00,275.45 644.50,275.04 645.00,273.91 645.50,273.52 646.00,272.18 646.50,271.92 647.00,271.42 647.50,270.07 648.00,270.29 648.50,269.86 649.00,270.78 649.50,271.28 650.00,274.50 650.50,278.41 651.00,283.24 651.50,288.67 652.00,294.43 652.50,300.49 653.00,306.96 653.50,314.00 654.00,321.61 654.50,329.33 655.00,337.03 655.50,344.34 656.00,351.48 656.50,358.49 657.00,365.35 657.50,372.30 657.50,373.03 657.00,366.09 656.50,359.07 656.00,352.15 655.50,344.95 655.00,337.73 654.50,329.96 654.00,322.28 653.50,314.73 653.00,307.57 652.50,301.13 652.00,295.15 651.50,289.49 651.00,284.21 650.50,279.62 650.00,275.91 649.50,274.43 649.00,274.69 648.50,274.99 648.00,274.36 647.50,275.11 647.00,274.93 646.50,275.67 646.00,276.37 645.50,277.02 645.00,277.71 644.50,278.51 644.00,279.61 643.50,279.91 643.00,280.58 642.50,280.94 642.00,281.40 641.50,282.38 641.00,282.66 640.50,282.96 640.00,283.11 639.50,283.31 639.00,284.00 638.50,284.17 638.00,284.92 637.50,284.42 637.00,284.83 636.50,284.96 636.00,285.52 635.50,285.20 635.00,285.93 634.50,286.22 634.00,285.80 633.50,285.97 633.00,286.53 632.50,286.86 632.00,286.41 631.50,286.25 631.00,286.36 630.50,286.35 630.00,287.13 629.50,287.02 629.00,286.95 628.50,286.42 628.00,286.98 627.50,286.35 627.00,286.43 626.50,286.56 626.00,286.03 625.50,286.70 625.00,286.27 624.50,286.39 624.00,285.97 623.50,285.92 623.00,286.27 622.50,286.12 622.00,285.76 621.50,285.81 621.00,285.76 620.50,285.50 620.00,285.23 619.50,285.02 619.00,285.17 618.50,284.93 618.00,284.74 617.50,285.28 617.00,284.43 616.50,284.43 616.00,284.27 615.50,284.28 615.00,283.94 614.50,283.92 614.00,283.60 613.50,283.86 613.00,283.11 612.50,283.32 612.00,283.48 611.50,282.69 611.00,282.71 610.50,282.28 610.00,282.44 609.50,281.71 609.00,281.51 608.50,281.39 608.00,281.02 607.50,280.84 607.00,281.15 606.50,281.07 606.00,280.46 605.50,279.89 605.00,279.74 604.50,279.48 604.00,279.55 603.50,279.42 603.00,278.65 602.50,278.87 602.00,278.52 601.50,278.11 601.00,277.77 600.50,277.68 600.00,277.48 599.50,276.51 599.00,276.08 598.50,275.89 598.00,275.81 597.50,275.61 597.00,275.34 596.50,275.10 596.00,274.46 595.50,273.85 595.00,273.65 594.50,273.23 594.00,273.10 593.50,272.71 593.00,272.38 592.50,272.35 592.00,272.06 591.50,271.53 591.00,271.29 590.50,271.59 590.00,271.24 589.50,270.52 589.00,270.20 588.50,270.57 588.00,270.15 587.50,269.95 587.00,269.12 586.50,269.21 586.00,268.82 585.50,268.89 585.00,268.77 584.50,268.53 584.00,268.04 583.50,268.07 583.00,267.55 582.50,267.50 582.00,267.02 581.50,266.89 581.00,266.74 580.50,266.29 580.00,266.27 579.50,265.59 579.00,266.06 578.50,265.25 578.00,265.22 577.50,265.16 577.00,264.99 576.50,264.81 576.00,264.84 575.50,264.44 575.00,264.60 574.50,264.81 574.00,264.67 573.50,264.23 573.00,263.72 572.50,264.29 572.00,263.50 571.50,263.65 571.00,263.99 570.50,263.29 570.00,263.70 569.50,263.19 569.00,262.76 568.50,263.25 568.00,262.62 567.50,263.09 567.00,262.42 566.50,262.93 566.00,262.43 565.50,263.09 565.00,262.89 564.50,262.48 564.00,262.80 563.50,262.86 563.00,262.06 562.50,262.87 562.00,262.09 561.50,262.73 561.00,262.44 560.50,262.68 560.00,262.68 559.50,262.60 559.00,262.27 558.50,262.13 558.00,262.39 557.50,262.37 557.00,262.22 556.50,262.54 556.00,262.09 555.50,262.48 555.00,262.66 554.50,262.05 554.00,262.59 553.50,262.04 553.00,262.43 552.50,262.18 552.00,262.76 551.50,262.41 551.00,262.23 550.50,262.33 550.00,262.33 549.50,262.95 549.00,263.17 548.50,263.09 548.00,262.55 547.50,263.29 547.00,263.03 546.50,263.16 546.00,262.78 545.50,262.90 545.00,263.06 544.50,263.61 544.00,263.26 543.50,263.61 543.00,263.48 542.50,263.97 542.00,264.10 541.50,263.59 541.00,263.42 540.50,264.19 540.00,263.62 539.50,264.41 539.00,264.56 538.50,263.92 538.00,264.02 537.50,264.44 537.00,264.30 536.50,264.57 536.00,264.29 535.50,264.98 535.00,265.17 534.50,265.32 534.00,265.17 533.50,264.87 533.00,265.47 532.50,265.16 532.00,265.28 531.50,265.48 531.00,266.12 530.50,266.00 530.00,265.83 529.50,266.12 529.00,266.01 528.50,266.66 528.00,266.69 527.50,266.38 527.00,266.98 526.50,267.49 526.00,267.03 525.50,266.95 525.00,267.47 524.50,267.76 524.00,267.50 523.50,268.09 523.00,267.99 522.50,268.25 522.00,268.33 521.50,268.68 521.00,268.98 520.50,268.86 520.00,269.38 519.50,269.81 519.00,269.85 518.50,269.93 518.00,269.91 517.50,270.05 517.00,270.15 516.50,270.21 516.00,270.34 515.50,270.58 515.00,270.86 514.50,270.62 514.00,271.47 513.50,271.27 513.00,271.86 512.50,271.73 512.00,272.18 511.50,271.72 511.00,272.64 510.50,272.77 510.00,272.41 509.50,272.64 509.00,272.50 508.50,272.59 508.00,272.83 507.50,273.68 507.00,273.58 506.50,273.99 506.00,273.90 505.50,274.45 505.00,274.22 504.50,274.23 504.00,274.82 503.50,274.99 503.00,274.99 502.50,274.90 502.00,275.09 501.50,275.47 501.00,275.27 500.50,275.60 500.00,274.88 499.50,275.14 499.00,275.17 498.50,275.54 498.00,275.49 497.50,274.78 497.00,274.75 496.50,274.57 496.00,274.87 495.50,274.57 495.00,274.37 494.50,274.07 494.00,273.78 493.50,273.68 493.00,273.52 492.50,273.00 492.00,272.95 491.50,272.24 491.00,272.14 490.50,271.90 490.00,271.05 489.50,270.75 489.00,270.40 488.50,269.80 488.00,269.44 487.50,268.97 487.00,268.75 486.50,268.33 486.00,267.25 485.50,267.05 485.00,266.58 484.50,265.56 484.00,264.66 483.50,264.25 483.00,263.95 482.50,263.25 482.00,262.36 481.50,262.40 481.00,261.84 480.50,260.83 480.00,260.20 479.50,260.09 479.00,259.73 478.50,258.91 478.00,258.75 477.50,258.72 477.00,258.01 476.50,257.84 476.00,258.62 475.50,258.34 475.00,259.27 474.50,260.01 474.00,260.43 473.50,261.05 473.00,262.93 472.50,265.03 472.00,267.47 471.50,270.06 471.00,273.16 470.50,276.27 470.00,279.70 469.50,283.51 469.00,287.43 468.50,291.94 468.00,296.57 467.50,301.42 467.00,306.42 466.50,311.80 466.00,319.35 465.50,326.49 465.00,331.98 464.50,336.62 464.00,341.03 463.50,345.14 463.00,349.29 462.50,353.07 462.00,357.05 461.50,360.65 461.00,364.46 460.50,367.76 460.00,371.20 459.50,374.33 459.00,377.56 458.50,380.82 458.00,383.69 457.50,386.14 457.00,387.87 456.50,389.27 456.00,390.48 455.50,391.06 455.00,391.23" fill="#008000" stroke="none"/>
<polyline points="455.00,389.10 455.50,388.64 456.00,388.19 456.50,387.56 457.00,386.58 457.50,384.95 458.00,382.65 458.50,379.90 459.00,376.86 459.50,373.72 460.00,370.55 460.50,367.20 461.00,363.69 461.50,360.07 462.00,356.35 462.50,352.53 463.00,348.60 463.50,344.57 464.00,340.42 464.50,336.07 465.00,331.46 465.50,326.16 466.00,319.08 466.50,311.46 467.00,305.91 467.50,300.87 468.00,296.04 468.50,291.40 469.00,286.98 469.50,282.83 470.00,279.03 470.50,275.55 471.00,272.33 471.50,269.35 472.00,266.58 472.50,264.04 473.00,261.77 473.50,259.95 474.00,258.66 474.50,257.80 475.00,257.16 475.50,256.51 476.00,256.00 476.50,255.80 477.00,255.87 477.50,256.10 478.00,256.44 478.50,256.86 479.00,257.34 479.50,257.85 480.00,258.39 480.50,258.94 481.00,259.49 481.50,260.05 482.00,260.59 482.50,261.14 483.00,261.73 483.50,262.34 484.00,262.96 484.50,263.58 485.00,264.20 485.50,264.81 486.00,265.39 486.50,265.95 487.00,266.48 487.50,266.98 488.00,267.43 488.50,267.85 489.00,268.24 489.50,268.61 490.00,268.97 490.50,269.31 491.00,269.64 491.50,269.95 492.00,270.25 492.50,270.54 493.00,270.81 493.50,271.08 494.00,271.33 494.50,271.56 495.00,271.78 495.50,271.99 496.00,272.17 496.50,272.34 497.00,272.49 497.50,272.62 498.00,272.72 498.50,272.78 499.00,272.82 499.50,272.83 500.00,272.81 500.50,272.78 501.00,272.72 501.50,272.66 502.00,272.58 502.50,272.49 503.00,272.39 503.50,272.27 504.00,272.13 504.50,271.99 505.00,271.84 505.50,271.68 506.00,271.52 506.50,271.36 507.00,271.19 507.50,271.02 508.00,270.84 508.50,270.67 509.00,270.50 509.50,270.33 510.00,270.16 510.50,269.99 511.00,269.83 511.50,269.67 512.00,269.51 512.50,269.35 513.00,269.19 513.50,269.02 514.00,268.86 514.50,268.69 515.00,268.52 515.50,268.36 516.00,268.19 516.50,268.02 517.00,267.85 517.50,267.69 518.00,267.52 518.50,267.36 519.00,267.19 519.50,267.03 520.00,266.86 520.50,266.70 521.00,266.54 521.50,266.37 522.00,266.20 522.50,266.03 523.00,265.86 523.50,265.69 524.00,265.52 524.50,265.35 525.00,265.18 525.50,265.02 526.00,264.86 526.50,264.70 527.00,264.54 527.50,264.39 528.00,264.24 528.50,264.10 529.00,263.96 529.50,263.83 530.00,263.70 530.50,263.58 531.00,263.45 531.50,263.33 532.00,263.21 532.50,263.10 533.00,262.98 533.50,262.87 534.00,262.76 534.50,262.65 535.00,262.55 535.50,262.44 536.00,262.34 536.50,262.24 537.00,262.14 537.50,262.04 538.00,261.95 538.50,261.85 539.00,261.76 539.50,261.67 540.00,261.59 540.50,261.50 541.00,261.42 541.50,261.34 542.00,261.26 542.50,261.19 543.00,261.11 543.50,261.04 544.00,260.97 544.50,260.90 545.00,260.83 545.50,260.77 546.00,260.71 546.50,260.64 547.00,260.59 547.50,260.53 548.00,260.47 548.50,260.42 549.00,260.37 549.50,260.33 550.00,260.28 550.50,260.24 551.00,260.20 551.50,260.16 552.00,260.13 552.50,260.10 553.00,260.07 553.50,260.05 554.00,260.03 554.50,260.01 555.00,259.99 555.50,259.98 556.00,259.97 556.50,259.96 557.00,259.95 557.50,259.95 558.00,259.94 558.50,259.94 559.00,259.94 559.50,259.94 560.00,259.95 560.50,259.96 561.00,259.97 561.50,259.99 562.00,260.01 562.50,260.04 563.00,260.07 563.50,260.10 564.00,260.14 564.50,260.18 565.00,260.23 565.50,260.28 566.00,260.34 566.50,260.40 567.00,260.47 567.50,260.55 568.00,260.62 568.50,260.71 569.00,260.79 569.50,260.89 570.00,260.98 570.50,261.08 571.00,261.18 571.50,261.29 572.00,261.40 572.50,261.52 573.00,261.64 573.50,261.77 574.00,261.90 574.50,262.04 575.00,262.18 575.50,262.32 576.00,262.47 576.50,262.63 577.00,262.79 577.50,262.95 578.00,263.12 578.50,263.30 579.00,263.48 579.50,263.66 580.00,263.85 580.50,264.05 581.00,264.26 581.50,264.47 582.00,264.69 582.50,264.92 583.00,265.15 583.50,265.39 584.00,265.63 584.50,265.88 585.00,266.13 585.50,266.38 586.00,266.64 586.50,266.90 587.00,267.17 587.50,267.44 588.00,267.71 588.50,267.98 589.00,268.25 589.50,268.52 590.00,268.80 590.50,269.07 591.00,269.35 591.50,269.63 592.00,269.90 592.50,270.18 593.00,270.46 593.50,270.75 594.00,271.05 594.50,271.35 595.00,271.66 595.50,271.97 596.00,272.28 596.50,272.60 597.00,272.91 597.50,273.23 598.00,273.55 598.50,273.86 599.00,274.18 599.50,274.49 600.00,274.80 600.50,275.11 601.00,275.41 601.50,275.71 602.00,276.00 602.50,276.29 603.00,276.56 603.50,276.83 604.00,277.10 604.50,277.35 605.00,277.60 605.50,277.84 606.00,278.08 606.50,278.32 607.00,278.56 607.50,278.79 608.00,279.02 608.50,279.24 609.00,279.46 609.50,279.68 610.00,279.89 610.50,280.10 611.00,280.30 611.50,280.50 612.00,280.69 612.50,280.88 613.00,281.07 613.50,281.25 614.00,281.42 614.50,281.59 615.00,281.75 615.50,281.91 616.00,282.07 616.50,282.21 617.00,282.36 617.50,282.49 618.00,282.62 618.50,282.75 619.00,282.87 619.50,282.98 620.00,283.09 620.50,283.19 621.00,283.30 621.50,283.39 622.00,283.48 622.50,283.57 623.00,283.66 623.50,283.74 624.00,283.81 624.50,283.88 625.00,283.95 625.50,284.01 626.00,284.07 626.50,284.12 627.00,284.17 627.50,284.21 628.00,284.25 628.50,284.27 629.00,284.29 629.50,284.31 630.00,284.31 630.50,284.29 631.00,284.27 631.50,284.23 632.00,284.17 632.50,284.10 633.00,284.01 633.50,283.90 634.00,283.77 634.50,283.62 635.00,283.46 635.50,283.28 636.00,283.08 636.50,282.88 637.00,282.67 637.50,282.44 638.00,282.18 638.50,281.90 639.00,281.60 639.50,281.28 640.00,280.94 640.50,280.59 641.00,280.21 641.50,279.82 642.00,279.40 642.50,278.96 643.00,278.50 643.50,277.98 644.00,277.36 644.50,276.67 645.00,275.91 645.50,275.12 646.00,274.36 646.50,273.71 647.00,273.19 647.50,272.70 648.00,272.35 648.50,272.30 649.00,272.66 649.50,273.06 650.00,275.13 650.50,278.99 651.00,283.76 651.50,289.06 652.00,294.76 652.50,300.80 653.00,307.25 653.50,314.35 654.00,321.92 654.50,329.68 655.00,337.36 655.50,344.68 656.00,351.78 656.50,358.79 657.00,365.75 657.50,372.70" fill="none" stroke="#008000" stroke-width="1.1"/>
<polyline points="455.00,388.89 456.30,389.08 457.60,384.26 458.90,376.94 460.20,368.81 461.50,360.30 462.80,349.85 464.10,339.20 465.40,327.04 466.70,309.51 468.00,296.00 469.30,284.20 470.60,275.07 471.90,266.98 473.20,261.13 474.50,259.19 475.80,256.85 477.10,256.04 478.40,258.38 479.70,258.09 481.00,259.35 482.30,262.00 483.60,263.83 484.90,264.74 486.20,265.20 487.50,266.67 488.80,266.47 490.10,268.17 491.40,270.81 492.70,270.61 494.00,272.54 495.30,272.49 496.60,272.60 497.90,273.76 499.20,272.82 500.50,273.36 501.80,272.58 503.10,271.85 504.40,272.94 505.70,270.13 507.00,272.84 508.30,272.34 509.60,271.44 510.90,269.75 512.20,269.27 513.50,268.68 514.80,268.45 516.10,267.19 517.40,268.76 518.70,268.61 520.00,266.87 521.30,267.66 522.60,265.28 523.90,266.80 525.20,266.76 526.50,265.29 527.80,265.91 529.10,264.72 530.40,264.27 531.70,263.19 533.00,261.45 534.30,261.39 535.60,263.57 536.90,261.05 538.20,262.56 539.50,260.48 540.80,262.34 542.10,262.84 543.40,261.47 544.70,259.26 546.00,261.54 547.30,260.47 548.60,261.70 549.90,259.06 551.20,259.42 552.50,261.57 553.80,261.22 555.10,261.43 556.40,260.03 557.70,260.56 559.00,261.46 560.30,260.52 561.60,258.55 562.90,258.85 564.20,258.41 565.50,258.92 566.80,258.79 568.10,260.24 569.40,261.28 570.70,262.38 572.00,261.09 573.30,260.54 574.60,263.49 575.90,263.89 577.20,264.51 578.50,261.65 579.80,264.09 581.10,264.75 582.40,264.99 583.70,264.42 585.00,267.56 586.30,266.92 587.60,265.92 588.90,267.67 590.20,269.68 591.50,268.62 592.80,271.28 594.10,270.14 595.40,271.68 596.70,272.03 598.00,272.30 599.30,275.65 600.60,274.63 601.90,276.79 603.20,278.00 604.50,276.61 605.80,276.30 607.10,278.69 608.40,278.29 609.70,281.05 611.00,279.15 612.30,281.57 613.60,279.64 614.90,280.93 616.20,281.07 617.50,283.72 618.80,283.16 620.10,283.67 621.40,281.91 622.70,282.94 624.00,285.19 625.30,284.38 626.60,285.03 627.90,284.24 629.20,283.26 630.50,285.75 631.80,283.37 633.10,282.84 634.40,284.17 635.70,281.77 637.00,283.58 638.30,282.73 639.60,280.83 640.90,280.34 642.20,279.18 643.50,276.68 644.80,275.03 646.10,273.80 647.40,271.21 648.70,271.38 650.00,274.98 651.30,287.03 652.60,302.10 653.90,320.26 655.20,340.41 656.50,358.94" fill="none" stroke="#fff" stroke-width="0.35" opacity="0.45"/>
<line x1="455.6" y1="439.5" x2="455.6" y2="412" stroke="#0000ff" stroke-width="1.2"/>
</g>
<line x1="455.00" y1="442.3" x2="455.00" y2="439.3" stroke="#333" stroke-width="0.8"/>
<line x1="455.00" y1="254.7" x2="455.00" y2="257.7" stroke="#333" stroke-width="0.8"/>
<line x1="479.71" y1="442.3" x2="479.71" y2="439.3" stroke="#333" stroke-width="0.8"/>
<line x1="479.71" y1="254.7" x2="479.71" y2="257.7" stroke="#333" stroke-width="0.8"/>
<line x1="504.41" y1="442.3" x2="504.41" y2="439.3" stroke="#333" stroke-width="0.8"/>
<line x1="504.41" y1="254.7" x2="504.41" y2="257.7" stroke="#333" stroke-width="0.8"/>
<line x1="529.12" y1="442.3" x2="529.12" y2="439.3" stroke="#333" stroke-width="0.8"/>
<line x1="529.12" y1="254.7" x2="529.12" y2="257.7" stroke="#333" stroke-width="0.8"/>
<line x1="553.83" y1="442.3" x2="553.83" y2="439.3" stroke="#333" stroke-width="0.8"/>
<line x1="553.83" y1="254.7" x2="553.83" y2="257.7" stroke="#333" stroke-width="0.8"/>
<line x1="578.54" y1="442.3" x2="578.54" y2="439.3" stroke="#333" stroke-width="0.8"/>
<line x1="578.54" y1="254.7" x2="578.54" y2="257.7" stroke="#333" stroke-width="0.8"/>
<line x1="603.24" y1="442.3" x2="603.24" y2="439.3" stroke="#333" stroke-width="0.8"/>
<line x1="603.24" y1="254.7" x2="603.24" y2="257.7" stroke="#333" stroke-width="0.8"/>
<line x1="627.95" y1="442.3" x2="627.95" y2="439.3" stroke="#333" stroke-width="0.8"/>
<line x1="627.95" y1="254.7" x2="627.95" y2="257.7" stroke="#333" stroke-width="0.8"/>
<line x1="652.66" y1="442.3" x2="652.66" y2="439.3" stroke="#333" stroke-width="0.8"/>
<line x1="652.66" y1="254.7" x2="652.66" y2="257.7" stroke="#333" stroke-width="0.8"/>
<line x1="455.0" y1="442.30" x2="458.0" y2="442.30" stroke="#333" stroke-width="0.8"/>
<line x1="657.4" y1="442.30" x2="654.4" y2="442.30" stroke="#333" stroke-width="0.8"/>
<line x1="455.0" y1="415.50" x2="458.0" y2="415.50" stroke="#333" stroke-width="0.8"/>
<line x1="657.4" y1="415.50" x2="654.4" y2="415.50" stroke="#333" stroke-width="0.8"/>
<line x1="455.0" y1="388.70" x2="458.0" y2="388.70" stroke="#333" stroke-width="0.8"/>
<line x1="657.4" y1="388.70" x2="654.4" y2="388.70" stroke="#333" stroke-width="0.8"/>
<line x1="455.0" y1="361.90" x2="458.0" y2="361.90" stroke="#333" stroke-width="0.8"/>
<line x1="657.4" y1="361.90" x2="654.4" y2="361.90" stroke="#333" stroke-width="0.8"/>
<line x1="455.0" y1="335.10" x2="458.0" y2="335.10" stroke="#333" stroke-width="0.8"/>
<line x1="657.4" y1="335.10" x2="654.4" y2="335.10" stroke="#333" stroke-width="0.8"/>
<line x1="455.0" y1="308.30" x2="458.0" y2="308.30" stroke="#333" stroke-width="0.8"/>
<line x1="657.4" y1="308.30" x2="654.4" y2="308.30" stroke="#333" stroke-width="0.8"/>
<line x1="455.0" y1="281.50" x2="458.0" y2="281.50" stroke="#333" stroke-width="0.8"/>
<line x1="657.4" y1="281.50" x2="654.4" y2="281.50" stroke="#333" stroke-width="0.8"/>
<line x1="455.0" y1="254.70" x2="458.0" y2="254.70" stroke="#333" stroke-width="0.8"/>
<line x1="657.4" y1="254.70" x2="654.4" y2="254.70" stroke="#333" stroke-width="0.8"/>
<rect x="455.0" y="254.7" width="202.39999999999998" height="187.60000000000002" fill="none" stroke="#444" stroke-width="1.2"/>
<rect x="620.40" y="258.20" width="33.10" height="19.10" fill="#fff" stroke="#222" stroke-width="1"/>
<line x1="624.10" y1="263.90" x2="635.20" y2="263.90" stroke="#0000ff" stroke-width="1" opacity="0.6"/>
<line x1="624.10" y1="272.20" x2="635.20" y2="272.20" stroke="#008000" stroke-width="1" opacity="0.7"/>
<text x="639.00" y="266.30" class="lg" textLength="9" lengthAdjust="spacingAndGlyphs">XX</text>
<text x="639.00" y="274.60" class="lg" textLength="9" lengthAdjust="spacingAndGlyphs">YY</text>
<text x="555.50" y="247.40" class="ti" text-anchor="middle">329p339_S</text>
<text x="450.5" y="445.30" class="tk" text-anchor="end" textLength="4.75" lengthAdjust="spacingAndGlyphs">0</text>
<text x="450.5" y="418.50" class="tk" text-anchor="end" textLength="9.50" lengthAdjust="spacingAndGlyphs">10</text>
<text x="450.5" y="391.70" class="tk" text-anchor="end" textLength="9.50" lengthAdjust="spacingAndGlyphs">20</text>
<text x="450.5" y="364.90" class="tk" text-anchor="end" textLength="9.50" lengthAdjust="spacingAndGlyphs">30</text>
<text x="450.5" y="338.10" class="tk" text-anchor="end" textLength="9.50" lengthAdjust="spacingAndGlyphs">40</text>
<text x="450.5" y="311.30" class="tk" text-anchor="end" textLength="9.50" lengthAdjust="spacingAndGlyphs">50</text>
<text x="450.5" y="284.50" class="tk" text-anchor="end" textLength="9.50" lengthAdjust="spacingAndGlyphs">60</text>
<text x="450.5" y="257.70" class="tk" text-anchor="end" textLength="9.50" lengthAdjust="spacingAndGlyphs">70</text>
<text x="455.00" y="451.70" class="tk" text-anchor="middle" textLength="5.10" lengthAdjust="spacingAndGlyphs">0</text>
<text x="479.71" y="451.70" class="tk" text-anchor="middle" textLength="20.40" lengthAdjust="spacingAndGlyphs">1000</text>
<text x="504.41" y="451.70" class="tk" text-anchor="middle" textLength="20.40" lengthAdjust="spacingAndGlyphs">2000</text>
<text x="529.12" y="451.70" class="tk" text-anchor="middle" textLength="20.40" lengthAdjust="spacingAndGlyphs">3000</text>
<text x="553.83" y="451.70" class="tk" text-anchor="middle" textLength="20.40" lengthAdjust="spacingAndGlyphs">4000</text>
<text x="578.54" y="451.70" class="tk" text-anchor="middle" textLength="20.40" lengthAdjust="spacingAndGlyphs">5000</text>
<text x="603.24" y="451.70" class="tk" text-anchor="middle" textLength="20.40" lengthAdjust="spacingAndGlyphs">6000</text>
<text x="627.95" y="451.70" class="tk" text-anchor="middle" textLength="20.40" lengthAdjust="spacingAndGlyphs">7000</text>
<text x="652.66" y="451.70" class="tk" text-anchor="middle" textLength="20.40" lengthAdjust="spacingAndGlyphs">8000</text>
<text x="556.2" y="464.70" class="al" text-anchor="middle">Channel</text>
<text x="435.70" y="349.90" class="al fl" text-anchor="middle" transform="rotate(-90 435.70 349.90)">Flux (Jy)</text>
<rect x="676.1" y="254.75" width="202.29999999999995" height="187.55" fill="#fff"/>
<g clip-path="url(#clip_br)">
<polygon points="676.10,422.40 676.60,420.60 677.10,419.04 677.60,417.01 678.10,415.32 678.60,413.63 679.10,411.46 679.60,409.34 680.10,407.10 680.60,404.74 681.10,402.07 681.60,399.32 682.10,396.41 682.60,393.37 683.10,389.98 683.60,386.31 684.10,382.90 684.60,379.26 685.10,375.79 685.60,372.04 686.10,368.33 686.60,364.55 687.10,360.75 687.60,357.13 688.10,353.46 688.60,349.81 689.10,345.94 689.60,342.02 690.10,338.03 690.60,334.40 691.10,330.85 691.60,327.65 692.10,325.14 692.60,322.71 693.10,320.54 693.60,319.01 694.10,317.43 694.60,315.73 695.10,314.46 695.60,313.47 696.10,312.26 696.60,310.67 697.10,309.86 697.60,309.04 698.10,307.92 698.60,307.25 699.10,306.39 699.60,306.66 700.10,305.74 700.60,305.78 701.10,305.84 701.60,305.55 702.10,305.97 702.60,305.89 703.10,305.92 703.60,305.43 704.10,305.47 704.60,305.99 705.10,306.05 705.60,305.78 706.10,306.28 706.60,306.47 707.10,306.10 707.60,306.61 708.10,306.77 708.60,306.84 709.10,307.48 709.60,307.27 710.10,307.01 710.60,307.21 711.10,307.04 711.60,307.59 712.10,307.46 712.60,307.68 713.10,307.71 713.60,307.78 714.10,307.65 714.60,307.65 715.10,307.36 715.60,307.34 716.10,306.97 716.60,306.90 717.10,307.06 717.60,306.90 718.10,307.00 718.60,307.09 719.10,306.85 719.60,306.68 720.10,306.33 720.60,306.40 721.10,307.01 721.60,306.43 722.10,306.86 722.60,306.31 723.10,306.04 723.60,306.10 724.10,306.54 724.60,306.19 725.10,306.32 725.60,305.82 726.10,305.70 726.60,305.60 727.10,305.87 727.60,305.57 728.10,305.85 728.60,305.13 729.10,305.05 729.60,305.80 730.10,305.26 730.60,305.06 731.10,305.44 731.60,305.57 732.10,305.55 732.60,304.87 733.10,305.45 733.60,305.07 734.10,304.65 734.60,305.29 735.10,304.66 735.60,304.88 736.10,304.88 736.60,304.77 737.10,304.87 737.60,304.39 738.10,304.55 738.60,304.80 739.10,305.04 739.60,304.69 740.10,304.25 740.60,304.36 741.10,305.11 741.60,304.87 742.10,304.79 742.60,304.87 743.10,305.16 743.60,305.13 744.10,304.85 744.60,304.72 745.10,304.77 745.60,304.85 746.10,304.90 746.60,305.55 747.10,305.41 747.60,305.36 748.10,305.49 748.60,305.43 749.10,305.48 749.60,305.60 750.10,305.96 750.60,305.25 751.10,305.24 751.60,305.61 752.10,305.99 752.60,305.90 753.10,305.55 753.60,305.91 754.10,305.89 754.60,305.97 755.10,305.79 755.60,306.16 756.10,306.73 756.60,306.45 757.10,306.16 757.60,306.96 758.10,307.11 758.60,307.20 759.10,307.27 759.60,307.28 760.10,306.82 760.60,307.07 761.10,307.05 761.60,307.30 762.10,307.58 762.60,307.29 763.10,307.95 763.60,307.88 764.10,307.92 764.60,307.79 765.10,307.81 765.60,308.09 766.10,308.15 766.60,308.55 767.10,308.37 767.60,308.25 768.10,308.72 768.60,308.56 769.10,308.89 769.60,309.00 770.10,309.04 770.60,309.58 771.10,309.65 771.60,309.82 772.10,309.64 772.60,309.66 773.10,309.78 773.60,310.38 774.10,310.44 774.60,310.78 775.10,310.50 775.60,310.90 776.10,311.22 776.60,311.46 777.10,311.03 777.60,311.66 778.10,311.43 778.60,312.24 779.10,312.56 779.60,312.35 780.10,312.42 780.60,313.31 781.10,312.94 781.60,313.42 782.10,313.39 782.60,313.60 783.10,314.31 783.60,314.10 784.10,315.02 784.60,315.04 785.10,315.28 785.60,315.70 786.10,315.74 786.60,315.75 787.10,316.55 787.60,316.47 788.10,316.67 788.60,317.20 789.10,317.06 789.60,317.65 790.10,317.62 790.60,317.86 791.10,317.96 791.60,318.05 792.10,318.31 792.60,318.93 793.10,319.39 793.60,319.66 794.10,319.44 794.60,319.71 795.10,319.94 795.60,320.16 796.10,320.64 796.60,320.61 797.10,321.07 797.60,321.34 798.10,321.42 798.60,321.83 799.10,321.98 799.60,322.09 800.10,322.81 800.60,322.76 801.10,323.41 801.60,323.51 802.10,323.44 802.60,323.63 803.10,323.92 803.60,324.35 804.10,324.55 804.60,324.78 805.10,325.29 805.60,325.87 806.10,326.34 806.60,325.95 807.10,326.21 807.60,326.48 808.10,326.86 808.60,327.04 809.10,327.22 809.60,327.61 810.10,327.73 810.60,328.32 811.10,328.26 811.60,328.37 812.10,328.61 812.60,329.08 813.10,329.38 813.60,329.09 814.10,329.75 814.60,329.32 815.10,330.03 815.60,329.68 816.10,330.21 816.60,329.88 817.10,330.63 817.60,330.84 818.10,330.52 818.60,330.56 819.10,331.07 819.60,331.08 820.10,331.02 820.60,331.46 821.10,331.47 821.60,331.40 822.10,331.72 822.60,331.93 823.10,331.31 823.60,332.07 824.10,331.34 824.60,331.50 825.10,331.88 825.60,331.52 826.10,332.23 826.60,331.77 827.10,331.93 827.60,331.94 828.10,331.37 828.60,332.08 829.10,331.29 829.60,331.92 830.10,331.31 830.60,331.59 831.10,331.29 831.60,330.85 832.10,330.87 832.60,331.41 833.10,331.13 833.60,330.87 834.10,330.57 834.60,331.12 835.10,330.26 835.60,330.19 836.10,330.01 836.60,330.60 837.10,330.52 837.60,329.89 838.10,330.09 838.60,330.25 839.10,330.37 839.60,330.11 840.10,329.61 840.60,329.48 841.10,329.73 841.60,329.13 842.10,329.41 842.60,329.31 843.10,329.33 843.60,329.23 844.10,329.18 844.60,328.67 845.10,328.92 845.60,329.01 846.10,328.73 846.60,328.20 847.10,328.37 847.60,328.75 848.10,328.38 848.60,328.25 849.10,328.56 849.60,327.62 850.10,327.57 850.60,328.19 851.10,327.68 851.60,327.78 852.10,327.75 852.60,327.57 853.10,327.65 853.60,326.97 854.10,327.15 854.60,326.76 855.10,326.59 855.60,326.76 856.10,326.94 856.60,327.12 857.10,326.68 857.60,326.70 858.10,326.65 858.60,327.29 859.10,327.44 859.60,326.78 860.10,327.13 860.60,327.70 861.10,327.28 861.60,328.01 862.10,327.66 862.60,327.91 863.10,327.98 863.60,328.76 864.10,328.31 864.60,328.56 865.10,328.80 865.60,329.29 866.10,330.02 866.60,329.87 867.10,330.67 867.60,331.20 868.10,332.01 868.60,333.25 869.10,333.96 869.60,335.43 870.10,337.21 870.60,338.92 871.10,341.00 871.60,343.04 872.10,345.08 872.60,347.59 873.10,349.90 873.60,352.21 874.10,355.01 874.60,357.64 875.10,360.18 875.60,363.19 876.10,365.98 876.60,369.03 877.10,372.61 877.60,376.70 878.10,381.02 878.10,381.98 877.60,377.50 877.10,373.66 876.60,370.37 876.10,367.45 875.60,364.50 875.10,361.62 874.60,358.97 874.10,356.34 873.60,353.90 873.10,351.55 872.60,349.38 872.10,347.04 871.60,344.83 871.10,342.67 870.60,340.94 870.10,339.56 869.60,337.99 869.10,337.17 868.60,336.24 868.10,335.65 867.60,335.10 867.10,334.71 866.60,333.97 866.10,334.24 865.60,333.59 865.10,333.06 864.60,333.30 864.10,333.12 863.60,332.52 863.10,332.34 862.60,332.13 862.10,332.06 861.60,331.56 861.10,331.27 860.60,331.32 860.10,331.14 859.60,331.25 859.10,331.23 858.60,331.31 858.10,331.32 857.60,331.11 857.10,331.44 856.60,330.56 856.10,331.37 855.60,330.65 855.10,331.15 854.60,330.86 854.10,331.53 853.60,331.48 853.10,331.31 852.60,331.13 852.10,331.69 851.60,332.14 851.10,331.65 850.60,332.07 850.10,332.36 849.60,331.84 849.10,332.70 848.60,332.77 848.10,332.64 847.60,332.28 847.10,332.55 846.60,332.48 846.10,333.24 845.60,332.95 845.10,333.42 844.60,333.56 844.10,332.81 843.60,333.62 843.10,333.58 842.60,333.82 842.10,333.64 841.60,333.43 841.10,333.84 840.60,334.26 840.10,333.87 839.60,334.32 839.10,334.49 838.60,334.63 838.10,334.58 837.60,334.05 837.10,334.66 836.60,334.53 836.10,334.79 835.60,334.88 835.10,334.64 834.60,334.92 834.10,334.57 833.60,335.15 833.10,335.34 832.60,335.40 832.10,335.19 831.60,335.61 831.10,335.08 830.60,335.63 830.10,335.56 829.60,335.53 829.10,335.85 828.60,335.88 828.10,336.34 827.60,335.71 827.10,336.32 826.60,336.40 826.10,336.24 825.60,336.21 825.10,336.29 824.60,335.82 824.10,335.77 823.60,336.09 823.10,335.60 822.60,335.78 822.10,335.78 821.60,335.62 821.10,335.50 820.60,335.08 820.10,335.08 819.60,335.41 819.10,334.81 818.60,335.39 818.10,334.93 817.60,335.11 817.10,334.19 816.60,334.50 816.10,334.08 815.60,333.86 815.10,334.15 814.60,333.66 814.10,333.71 813.60,333.15 813.10,333.31 812.60,332.89 812.10,333.16 811.60,332.23 811.10,332.83 810.60,332.33 810.10,331.59 809.60,331.49 809.10,331.62 808.60,331.25 808.10,331.22 807.60,330.77 807.10,330.51 806.60,330.12 806.10,330.17 805.60,329.29 805.10,329.66 804.60,329.49 804.10,328.57 803.60,328.99 803.10,328.33 802.60,328.19 802.10,327.79 801.60,327.66 801.10,327.32 800.60,327.18 800.10,326.92 799.60,326.39 799.10,326.55 798.60,326.06 798.10,325.70 797.60,325.10 797.10,325.23 796.60,324.72 796.10,324.94 795.60,324.91 795.10,324.14 794.60,324.43 794.10,324.05 793.60,323.47 793.10,323.15 792.60,323.38 792.10,323.18 791.60,322.70 791.10,321.85 790.60,321.68 790.10,321.81 789.60,321.43 789.10,320.98 788.60,320.90 788.10,321.17 787.60,320.69 787.10,320.35 786.60,320.32 786.10,319.75 785.60,319.33 785.10,318.91 784.60,319.46 784.10,318.59 783.60,318.76 783.10,318.55 782.60,317.90 782.10,317.58 781.60,317.52 781.10,317.47 780.60,317.15 780.10,316.64 779.60,316.21 779.10,316.57 778.60,316.24 778.10,316.13 777.60,315.58 777.10,315.21 776.60,314.92 776.10,315.15 775.60,315.37 775.10,314.83 774.60,314.84 774.10,314.82 773.60,314.04 773.10,314.55 772.60,314.26 772.10,313.91 771.60,313.86 771.10,313.27 770.60,313.20 770.10,313.13 769.60,312.89 769.10,312.99 768.60,312.54 768.10,312.70 767.60,313.02 767.10,312.78 766.60,312.85 766.10,312.56 765.60,311.96 765.10,312.04 764.60,311.72 764.10,312.12 763.60,312.03 763.10,311.89 762.60,312.10 762.10,311.20 761.60,311.51 761.10,311.76 760.60,311.42 760.10,311.45 759.60,311.33 759.10,310.86 758.60,311.11 758.10,310.88 757.60,311.22 757.10,310.49 756.60,311.02 756.10,310.67 755.60,310.36 755.10,310.71 754.60,310.14 754.10,310.25 753.60,309.95 753.10,310.23 752.60,310.22 752.10,309.71 751.60,309.68 751.10,309.74 750.60,310.22 750.10,309.57 749.60,309.53 749.10,309.94 748.60,309.19 748.10,309.86 747.60,309.37 747.10,309.17 746.60,309.73 746.10,309.34 745.60,309.27 745.10,308.80 744.60,309.35 744.10,309.27 743.60,308.77 743.10,309.25 742.60,308.82 742.10,308.97 741.60,309.18 741.10,308.83 740.60,308.66 740.10,308.64 739.60,309.18 739.10,309.27 738.60,308.57 738.10,309.04 737.60,308.94 737.10,308.84 736.60,309.05 736.10,309.09 735.60,308.93 735.10,309.33 734.60,308.82 734.10,309.41 733.60,308.86 733.10,309.56 732.60,308.96 732.10,309.03 731.60,309.75 731.10,309.36 730.60,309.53 730.10,309.85 729.60,309.23 729.10,309.71 728.60,309.93 728.10,309.35 727.60,309.97 727.10,310.17 726.60,309.55 726.10,310.40 725.60,309.74 725.10,310.54 724.60,309.87 724.10,310.57 723.60,310.77 723.10,310.79 722.60,310.72 722.10,310.81 721.60,310.76 721.10,311.17 720.60,310.56 720.10,310.70 719.60,311.40 719.10,311.12 718.60,311.23 718.10,311.08 717.60,311.67 717.10,311.07 716.60,311.29 716.10,311.41 715.60,311.51 715.10,311.75 714.60,311.60 714.10,311.24 713.60,312.01 713.10,311.28 712.60,311.94 712.10,311.43 711.60,311.36 711.10,311.21 710.60,311.86 710.10,311.26 709.60,310.95 709.10,311.60 708.60,310.76 708.10,310.60 707.60,310.67 707.10,310.81 706.60,310.20 706.10,310.52 705.60,310.05 705.10,309.87 704.60,309.83 704.10,309.65 703.60,309.71 703.10,309.57 702.60,309.94 702.10,309.40 701.60,309.54 701.10,309.51 700.60,309.67 700.10,310.23 699.60,310.09 699.10,310.60 698.60,310.78 698.10,311.88 697.60,312.52 697.10,313.04 696.60,313.65 696.10,315.11 695.60,315.85 695.10,317.08 694.60,318.66 694.10,319.53 693.60,320.90 693.10,322.40 692.60,324.41 692.10,326.70 691.60,329.09 691.10,332.16 690.60,335.45 690.10,339.22 689.60,343.15 689.10,346.93 688.60,350.71 688.10,354.53 687.60,358.24 687.10,361.87 686.60,365.69 686.10,369.51 685.60,373.26 685.10,376.85 684.60,380.38 684.10,384.12 683.60,387.51 683.10,391.17 682.60,394.39 682.10,397.78 681.60,400.80 681.10,403.52 680.60,406.37 680.10,408.73 679.60,410.91 679.10,413.37 678.60,415.34 678.10,417.39 677.60,419.28 677.10,421.06 676.60,422.95 676.10,424.55" fill="#0000ff" stroke="none"/>
<polyline points="676.10,423.50 676.60,421.72 677.10,419.96 677.60,418.18 678.10,416.35 678.60,414.45 679.10,412.43 679.60,410.24 680.10,407.94 680.60,405.50 681.10,402.88 681.60,400.07 682.10,397.08 682.60,393.87 683.10,390.50 683.60,387.00 684.10,383.44 684.60,379.85 685.10,376.26 685.60,372.61 686.10,368.90 686.60,365.15 687.10,361.40 687.60,357.67 688.10,353.97 688.60,350.27 689.10,346.43 689.60,342.53 690.10,338.68 690.60,334.97 691.10,331.51 691.60,328.41 692.10,325.77 692.60,323.51 693.10,321.58 693.60,319.93 694.10,318.47 694.60,317.14 695.10,315.86 695.60,314.60 696.10,313.43 696.60,312.36 697.10,311.40 697.60,310.56 698.10,309.83 698.60,309.21 699.10,308.71 699.60,308.31 700.10,308.02 700.60,307.82 701.10,307.71 701.60,307.65 702.10,307.64 702.60,307.65 703.10,307.67 703.60,307.70 704.10,307.75 704.60,307.85 705.10,307.96 705.60,308.10 706.10,308.25 706.60,308.41 707.10,308.57 707.60,308.73 708.10,308.88 708.60,309.02 709.10,309.15 709.60,309.27 710.10,309.37 710.60,309.44 711.10,309.49 711.60,309.52 712.10,309.54 712.60,309.54 713.10,309.53 713.60,309.51 714.10,309.48 714.60,309.45 715.10,309.40 715.60,309.36 716.10,309.31 716.60,309.25 717.10,309.19 717.60,309.13 718.10,309.07 718.60,309.01 719.10,308.95 719.60,308.89 720.10,308.83 720.60,308.78 721.10,308.72 721.60,308.65 722.10,308.59 722.60,308.52 723.10,308.44 723.60,308.37 724.10,308.29 724.60,308.22 725.10,308.14 725.60,308.06 726.10,307.98 726.60,307.91 727.10,307.83 727.60,307.76 728.10,307.68 728.60,307.61 729.10,307.54 729.60,307.47 730.10,307.41 730.60,307.35 731.10,307.30 731.60,307.25 732.10,307.20 732.60,307.15 733.10,307.11 733.60,307.06 734.10,307.02 734.60,306.98 735.10,306.95 735.60,306.91 736.10,306.88 736.60,306.86 737.10,306.84 737.60,306.82 738.10,306.81 738.60,306.80 739.10,306.79 739.60,306.79 740.10,306.80 740.60,306.81 741.10,306.82 741.60,306.84 742.10,306.86 742.60,306.88 743.10,306.91 743.60,306.94 744.10,306.98 744.60,307.02 745.10,307.06 745.60,307.11 746.10,307.15 746.60,307.21 747.10,307.26 747.60,307.31 748.10,307.37 748.60,307.43 749.10,307.49 749.60,307.55 750.10,307.61 750.60,307.68 751.10,307.74 751.60,307.81 752.10,307.88 752.60,307.95 753.10,308.02 753.60,308.09 754.10,308.16 754.60,308.24 755.10,308.32 755.60,308.39 756.10,308.47 756.60,308.55 757.10,308.63 757.60,308.72 758.10,308.80 758.60,308.89 759.10,308.98 759.60,309.07 760.10,309.16 760.60,309.25 761.10,309.34 761.60,309.44 762.10,309.54 762.60,309.64 763.10,309.74 763.60,309.84 764.10,309.94 764.60,310.04 765.10,310.14 765.60,310.24 766.10,310.34 766.60,310.44 767.10,310.54 767.60,310.65 768.10,310.76 768.60,310.87 769.10,310.98 769.60,311.10 770.10,311.22 770.60,311.35 771.10,311.48 771.60,311.61 772.10,311.75 772.60,311.89 773.10,312.04 773.60,312.20 774.10,312.36 774.60,312.53 775.10,312.71 775.60,312.89 776.10,313.08 776.60,313.28 777.10,313.48 777.60,313.69 778.10,313.91 778.60,314.13 779.10,314.36 779.60,314.59 780.10,314.82 780.60,315.06 781.10,315.30 781.60,315.54 782.10,315.79 782.60,316.03 783.10,316.28 783.60,316.53 784.10,316.78 784.60,317.03 785.10,317.27 785.60,317.52 786.10,317.77 786.60,318.01 787.10,318.25 787.60,318.49 788.10,318.73 788.60,318.98 789.10,319.22 789.60,319.47 790.10,319.72 790.60,319.96 791.10,320.21 791.60,320.46 792.10,320.71 792.60,320.97 793.10,321.22 793.60,321.47 794.10,321.72 794.60,321.98 795.10,322.23 795.60,322.48 796.10,322.74 796.60,322.99 797.10,323.24 797.60,323.49 798.10,323.75 798.60,324.00 799.10,324.25 799.60,324.50 800.10,324.75 800.60,325.01 801.10,325.27 801.60,325.53 802.10,325.80 802.60,326.07 803.10,326.34 803.60,326.61 804.10,326.88 804.60,327.15 805.10,327.41 805.60,327.68 806.10,327.95 806.60,328.21 807.10,328.47 807.60,328.72 808.10,328.97 808.60,329.22 809.10,329.46 809.60,329.69 810.10,329.91 810.60,330.13 811.10,330.34 811.60,330.54 812.10,330.74 812.60,330.93 813.10,331.11 813.60,331.29 814.10,331.47 814.60,331.65 815.10,331.82 815.60,331.99 816.10,332.15 816.60,332.31 817.10,332.46 817.60,332.61 818.10,332.75 818.60,332.89 819.10,333.02 819.60,333.14 820.10,333.26 820.60,333.36 821.10,333.46 821.60,333.55 822.10,333.64 822.60,333.71 823.10,333.78 823.60,333.83 824.10,333.88 824.60,333.91 825.10,333.93 825.60,333.94 826.10,333.94 826.60,333.92 827.10,333.90 827.60,333.86 828.10,333.82 828.60,333.77 829.10,333.71 829.60,333.64 830.10,333.57 830.60,333.49 831.10,333.40 831.60,333.32 832.10,333.23 832.60,333.14 833.10,333.05 833.60,332.95 834.10,332.86 834.60,332.77 835.10,332.68 835.60,332.59 836.10,332.51 836.60,332.43 837.10,332.35 837.60,332.28 838.10,332.20 838.60,332.12 839.10,332.03 839.60,331.95 840.10,331.86 840.60,331.78 841.10,331.69 841.60,331.60 842.10,331.51 842.60,331.42 843.10,331.33 843.60,331.23 844.10,331.14 844.60,331.05 845.10,330.95 845.60,330.86 846.10,330.77 846.60,330.67 847.10,330.58 847.60,330.49 848.10,330.40 848.60,330.31 849.10,330.22 849.60,330.13 850.10,330.03 850.60,329.92 851.10,329.81 851.60,329.70 852.10,329.58 852.60,329.46 853.10,329.34 853.60,329.22 854.10,329.12 854.60,329.04 855.10,328.97 855.60,328.92 856.10,328.90 856.60,328.90 857.10,328.92 857.60,328.95 858.10,329.00 858.60,329.06 859.10,329.13 859.60,329.21 860.10,329.31 860.60,329.42 861.10,329.55 861.60,329.69 862.10,329.85 862.60,330.03 863.10,330.22 863.60,330.45 864.10,330.70 864.60,330.97 865.10,331.24 865.60,331.53 866.10,331.85 866.60,332.22 867.10,332.65 867.60,333.18 868.10,333.83 868.60,334.63 869.10,335.60 869.60,336.79 870.10,338.21 870.60,339.89 871.10,341.79 871.60,343.89 872.10,346.12 872.60,348.39 873.10,350.69 873.60,353.10 874.10,355.63 874.60,358.25 875.10,360.97 875.60,363.77 876.10,366.68 876.60,369.73 877.10,373.18 877.60,377.11 878.10,381.43" fill="none" stroke="#0000ff" stroke-width="1.1"/>
<polyline points="676.10,423.20 677.40,419.17 678.70,414.64 680.00,408.91 681.30,401.81 682.60,394.23 683.90,384.79 685.20,375.88 686.50,366.04 687.80,355.86 689.10,346.66 690.40,336.18 691.70,328.38 693.00,321.33 694.30,318.39 695.60,313.94 696.90,311.87 698.20,309.38 699.50,309.44 700.80,307.11 702.10,308.29 703.40,309.00 704.70,306.58 706.00,308.85 707.30,307.41 708.60,309.84 709.90,310.38 711.20,308.43 712.50,310.68 713.80,309.31 715.10,308.84 716.40,310.65 717.70,308.78 719.00,308.10 720.30,308.31 721.60,309.85 722.90,309.91 724.20,308.15 725.50,308.06 726.80,308.17 728.10,308.69 729.40,306.05 730.70,308.22 732.00,308.61 733.30,306.81 734.60,306.80 735.90,308.25 737.20,306.56 738.50,306.43 739.80,307.86 741.10,306.74 742.40,307.31 743.70,306.32 745.00,307.59 746.30,306.78 747.60,308.15 748.90,307.44 750.20,308.87 751.50,307.94 752.80,309.03 754.10,307.99 755.40,308.86 756.70,307.88 758.00,309.04 759.30,309.49 760.60,308.34 761.90,309.63 763.20,311.01 764.50,309.14 765.80,310.24 767.10,311.54 768.40,310.61 769.70,309.74 771.00,311.52 772.30,311.70 773.60,313.45 774.90,313.12 776.20,313.93 777.50,313.27 778.80,315.37 780.10,315.77 781.40,314.26 782.70,316.54 784.00,317.89 785.30,317.81 786.60,319.37 787.90,317.95 789.20,319.52 790.50,320.01 791.80,319.97 793.10,322.03 794.40,321.68 795.70,322.96 797.00,324.00 798.30,324.50 799.60,323.35 800.90,323.89 802.20,326.77 803.50,326.98 804.80,326.24 806.10,326.88 807.40,328.61 808.70,328.33 810.00,331.12 811.30,329.62 812.60,332.22 813.90,332.03 815.20,332.02 816.50,332.78 817.80,333.23 819.10,332.39 820.40,333.29 821.70,332.29 823.00,332.42 824.30,335.21 825.60,334.98 826.90,334.66 828.20,332.63 829.50,334.02 830.80,334.09 832.10,333.02 833.40,332.63 834.70,333.42 836.00,331.08 837.30,332.24 838.60,331.40 839.90,331.73 841.20,331.83 842.50,331.20 843.80,332.31 845.10,332.08 846.40,331.48 847.70,331.34 849.00,330.24 850.30,329.31 851.60,330.63 852.90,328.25 854.20,329.38 855.50,329.33 856.80,327.75 858.10,328.12 859.40,329.69 860.70,330.50 862.00,329.50 863.30,330.40 864.60,331.57 865.90,331.95 867.20,332.66 868.50,334.78 869.80,337.72 871.10,342.19 872.40,347.55 873.70,353.79 875.00,360.11 876.30,367.59 877.60,377.32" fill="none" stroke="#fff" stroke-width="0.35" opacity="0.45"/>
<polygon points="676.10,394.24 676.60,393.64 677.10,392.92 677.60,393.16 678.10,392.32 678.60,391.82 679.10,390.13 679.60,387.85 680.10,385.10 680.60,381.97 681.10,378.72 681.60,375.06 682.10,371.13 682.60,366.96 683.10,362.65 683.60,358.78 684.10,354.61 684.60,350.80 685.10,346.70 685.60,342.78 686.10,338.83 686.60,334.96 687.10,331.20 687.60,327.08 688.10,322.57 688.60,315.63 689.10,310.60 689.60,306.87 690.10,303.27 690.60,300.18 691.10,297.19 691.60,294.30 692.10,291.65 692.60,289.50 693.10,287.87 693.60,286.46 694.10,284.97 694.60,283.96 695.10,282.78 695.60,281.76 696.10,280.94 696.60,280.25 697.10,280.48 697.60,280.24 698.10,280.64 698.60,281.19 699.10,281.04 699.60,281.17 700.10,281.75 700.60,282.28 701.10,282.46 701.60,282.46 702.10,283.35 702.60,283.97 703.10,283.77 703.60,284.24 704.10,284.87 704.60,285.49 705.10,286.09 705.60,286.78 706.10,287.22 706.60,287.64 707.10,288.44 707.60,288.97 708.10,288.96 708.60,289.41 709.10,289.46 709.60,290.30 710.10,290.65 710.60,291.24 711.10,291.66 711.60,291.87 712.10,291.79 712.60,291.76 713.10,292.78 713.60,293.01 714.10,292.80 714.60,293.37 715.10,293.82 715.60,293.27 716.10,294.10 716.60,294.00 717.10,293.86 717.60,293.95 718.10,293.89 718.60,294.29 719.10,294.75 719.60,294.85 720.10,294.37 720.60,294.47 721.10,294.73 721.60,294.80 722.10,294.61 722.60,294.65 723.10,294.56 723.60,294.51 724.10,294.10 724.60,294.29 725.10,293.86 725.60,294.08 726.10,294.18 726.60,293.51 727.10,293.65 727.60,293.37 728.10,293.80 728.60,293.02 729.10,293.21 729.60,293.32 730.10,293.31 730.60,293.34 731.10,293.28 731.60,293.02 732.10,292.80 732.60,292.48 733.10,292.47 733.60,292.66 734.10,292.44 734.60,292.42 735.10,292.26 735.60,291.90 736.10,291.46 736.60,291.76 737.10,290.97 737.60,290.75 738.10,290.95 738.60,291.33 739.10,291.10 739.60,290.68 740.10,290.19 740.60,290.05 741.10,290.17 741.60,289.94 742.10,290.56 742.60,290.11 743.10,290.06 743.60,290.22 744.10,289.83 744.60,289.76 745.10,289.31 745.60,290.05 746.10,289.77 746.60,289.80 747.10,289.67 747.60,289.50 748.10,289.37 748.60,288.74 749.10,289.21 749.60,288.97 750.10,289.14 750.60,288.97 751.10,288.86 751.60,288.41 752.10,288.52 752.60,288.41 753.10,288.05 753.60,288.36 754.10,287.46 754.60,288.04 755.10,287.57 755.60,286.91 756.10,287.50 756.60,287.46 757.10,286.93 757.60,286.66 758.10,286.74 758.60,286.74 759.10,286.19 759.60,286.14 760.10,286.23 760.60,285.87 761.10,285.54 761.60,285.72 762.10,285.72 762.60,285.42 763.10,285.42 763.60,285.68 764.10,284.87 764.60,285.48 765.10,284.83 765.60,285.02 766.10,284.63 766.60,284.78 767.10,284.43 767.60,284.67 768.10,284.80 768.60,284.26 769.10,284.14 769.60,284.36 770.10,283.92 770.60,284.06 771.10,283.80 771.60,284.41 772.10,283.68 772.60,283.79 773.10,283.59 773.60,284.08 774.10,283.85 774.60,283.51 775.10,283.68 775.60,283.99 776.10,283.95 776.60,283.33 777.10,283.54 777.60,284.07 778.10,283.85 778.60,283.55 779.10,283.86 779.60,283.59 780.10,283.39 780.60,283.90 781.10,283.73 781.60,283.16 782.10,283.92 782.60,283.85 783.10,283.23 783.60,283.37 784.10,283.58 784.60,283.26 785.10,283.88 785.60,284.10 786.10,283.43 786.60,283.65 787.10,283.99 787.60,283.85 788.10,284.38 788.60,284.27 789.10,284.14 789.60,284.00 790.10,284.59 790.60,284.94 791.10,285.04 791.60,284.98 792.10,284.84 792.60,284.91 793.10,285.07 793.60,285.07 794.10,285.40 794.60,285.58 795.10,285.82 795.60,285.93 796.10,286.05 796.60,286.01 797.10,286.90 797.60,286.68 798.10,287.33 798.60,287.45 799.10,287.02 799.60,287.68 800.10,287.74 800.60,288.27 801.10,288.23 801.60,288.88 802.10,288.63 802.60,288.54 803.10,289.02 803.60,289.28 804.10,289.63 804.60,290.09 805.10,289.96 805.60,290.56 806.10,290.86 806.60,290.95 807.10,290.84 807.60,291.32 808.10,291.64 808.60,292.38 809.10,292.05 809.60,292.65 810.10,292.73 810.60,293.05 811.10,293.11 811.60,294.02 812.10,294.22 812.60,294.31 813.10,294.64 813.60,294.48 814.10,295.23 814.60,295.52 815.10,295.40 815.60,296.07 816.10,295.70 816.60,296.37 817.10,296.66 817.60,296.67 818.10,296.60 818.60,297.47 819.10,297.77 819.60,297.91 820.10,297.80 820.60,297.91 821.10,298.83 821.60,299.18 822.10,299.17 822.60,299.39 823.10,299.23 823.60,299.51 824.10,299.65 824.60,300.17 825.10,300.33 825.60,300.07 826.10,301.05 826.60,301.26 827.10,301.45 827.60,300.92 828.10,301.36 828.60,301.37 829.10,301.57 829.60,301.60 830.10,302.01 830.60,302.34 831.10,302.68 831.60,302.56 832.10,302.90 832.60,302.39 833.10,302.67 833.60,303.22 834.10,303.15 834.60,303.31 835.10,303.30 835.60,303.11 836.10,303.82 836.60,303.62 837.10,303.82 837.60,303.51 838.10,304.27 838.60,303.98 839.10,304.57 839.60,304.25 840.10,303.97 840.60,304.27 841.10,304.96 841.60,304.18 842.10,304.65 842.60,304.68 843.10,304.42 843.60,304.80 844.10,305.17 844.60,305.03 845.10,304.78 845.60,305.12 846.10,305.35 846.60,305.16 847.10,305.42 847.60,305.42 848.10,305.38 848.60,305.00 849.10,305.12 849.60,305.19 850.10,304.62 850.60,304.64 851.10,304.35 851.60,304.82 852.10,304.27 852.60,304.44 853.10,304.08 853.60,303.95 854.10,303.65 854.60,303.46 855.10,302.95 855.60,303.00 856.10,303.01 856.60,302.39 857.10,302.70 857.60,301.92 858.10,301.84 858.60,301.85 859.10,301.16 859.60,301.45 860.10,301.22 860.60,300.70 861.10,300.16 861.60,299.68 862.10,299.55 862.60,298.91 863.10,298.14 863.60,297.66 864.10,297.42 864.60,297.29 865.10,296.69 865.60,296.02 866.10,295.54 866.60,294.97 867.10,294.78 867.60,294.18 868.10,293.79 868.60,293.54 869.10,293.78 869.60,294.62 870.10,295.57 870.60,296.77 871.10,298.79 871.60,301.39 872.10,305.19 872.60,310.04 873.10,315.73 873.60,321.88 874.10,327.88 874.60,333.96 875.10,340.51 875.60,347.20 876.10,353.71 876.60,360.14 877.10,366.11 877.60,371.87 878.10,377.60 878.10,378.45 877.60,372.58 877.10,366.87 876.60,360.78 876.10,354.46 875.60,347.79 875.10,341.22 874.60,334.75 874.10,328.57 873.60,322.51 873.10,316.42 872.60,310.79 872.10,306.18 871.60,302.77 871.10,300.81 870.60,299.57 870.10,298.77 869.60,298.12 869.10,298.25 868.60,298.02 868.10,297.83 867.60,298.08 867.10,298.66 866.60,299.05 866.10,299.73 865.60,300.13 865.10,300.39 864.60,301.07 864.10,301.79 863.60,302.06 863.10,302.81 862.60,303.07 862.10,303.37 861.60,303.46 861.10,304.60 860.60,304.25 860.10,305.08 859.60,305.04 859.10,305.36 858.60,305.49 858.10,306.30 857.60,306.56 857.10,306.47 856.60,306.45 856.10,307.08 855.60,307.16 855.10,307.23 854.60,308.07 854.10,308.28 853.60,307.90 853.10,308.15 852.60,308.92 852.10,308.54 851.60,308.92 851.10,308.74 850.60,308.81 850.10,309.35 849.60,309.01 849.10,309.57 848.60,309.43 848.10,309.46 847.60,309.02 847.10,309.01 846.60,308.97 846.10,309.23 845.60,309.59 845.10,309.09 844.60,309.64 844.10,309.54 843.60,309.30 843.10,309.54 842.60,308.88 842.10,308.61 841.60,309.18 841.10,308.49 840.60,308.95 840.10,308.90 839.60,308.44 839.10,308.66 838.60,308.25 838.10,308.19 837.60,308.41 837.10,308.46 836.60,308.44 836.10,308.01 835.60,307.78 835.10,307.35 834.60,307.17 834.10,307.06 833.60,307.39 833.10,307.35 832.60,307.05 832.10,307.28 831.60,306.54 831.10,306.50 830.60,306.34 830.10,306.14 829.60,306.46 829.10,306.27 828.60,305.42 828.10,305.37 827.60,305.61 827.10,305.51 826.60,305.33 826.10,304.77 825.60,304.83 825.10,304.91 824.60,303.86 824.10,304.12 823.60,303.48 823.10,303.71 822.60,303.85 822.10,302.92 821.60,303.17 821.10,302.87 820.60,302.39 820.10,302.57 819.60,301.68 819.10,301.66 818.60,301.85 818.10,300.75 817.60,301.13 817.10,301.00 816.60,300.32 816.10,300.12 815.60,300.14 815.10,299.32 814.60,299.27 814.10,299.41 813.60,298.64 813.10,298.35 812.60,298.26 812.10,298.45 811.60,298.13 811.10,297.42 810.60,296.99 810.10,296.96 809.60,296.46 809.10,296.83 808.60,296.15 808.10,296.30 807.60,295.82 807.10,295.47 806.60,295.15 806.10,295.06 805.60,294.22 805.10,294.35 804.60,294.17 804.10,293.88 803.60,293.24 803.10,293.31 802.60,292.73 802.10,293.30 801.60,292.74 801.10,292.11 800.60,291.93 800.10,292.01 799.60,291.49 799.10,291.32 798.60,291.60 798.10,290.98 797.60,291.18 797.10,291.07 796.60,290.88 796.10,290.77 795.60,290.14 795.10,290.26 794.60,289.99 794.10,289.61 793.60,289.64 793.10,289.66 792.60,289.18 792.10,289.05 791.60,289.51 791.10,288.91 790.60,289.15 790.10,288.30 789.60,288.83 789.10,288.91 788.60,288.19 788.10,287.85 787.60,288.17 787.10,287.98 786.60,287.66 786.10,287.56 785.60,288.28 785.10,287.51 784.60,288.06 784.10,287.64 783.60,287.80 783.10,288.21 782.60,288.24 782.10,287.54 781.60,287.54 781.10,287.70 780.60,288.10 780.10,287.45 779.60,287.90 779.10,287.90 778.60,287.70 778.10,288.09 777.60,287.69 777.10,288.32 776.60,287.93 776.10,287.75 775.60,288.02 775.10,288.18 774.60,287.79 774.10,288.55 773.60,288.15 773.10,288.22 772.60,288.40 772.10,288.09 771.60,288.52 771.10,288.07 770.60,288.30 770.10,288.55 769.60,288.82 769.10,288.45 768.60,289.19 768.10,288.91 767.60,288.98 767.10,288.99 766.60,289.39 766.10,289.07 765.60,288.87 765.10,289.50 764.60,289.37 764.10,289.68 763.60,289.94 763.10,289.66 762.60,290.05 762.10,290.12 761.60,290.41 761.10,290.55 760.60,289.98 760.10,290.12 759.60,290.65 759.10,290.87 758.60,291.02 758.10,290.54 757.60,291.11 757.10,291.14 756.60,291.31 756.10,291.58 755.60,291.83 755.10,291.96 754.60,291.52 754.10,291.65 753.60,291.84 753.10,292.55 752.60,292.82 752.10,292.32 751.60,292.58 751.10,292.45 750.60,293.41 750.10,292.79 749.60,293.29 749.10,292.93 748.60,293.05 748.10,293.34 747.60,293.45 747.10,293.92 746.60,293.59 746.10,293.50 745.60,294.19 745.10,293.59 744.60,293.84 744.10,293.91 743.60,294.50 743.10,294.67 742.60,294.24 742.10,294.67 741.60,294.95 741.10,294.55 740.60,294.94 740.10,294.65 739.60,295.14 739.10,295.26 738.60,295.58 738.10,295.56 737.60,295.06 737.10,295.82 736.60,296.04 736.10,295.65 735.60,295.77 735.10,296.12 734.60,296.07 734.10,296.63 733.60,296.20 733.10,296.81 732.60,296.87 732.10,296.73 731.60,297.12 731.10,297.49 730.60,297.53 730.10,297.78 729.60,297.91 729.10,297.20 728.60,297.99 728.10,297.41 727.60,298.00 727.10,298.02 726.60,298.14 726.10,298.66 725.60,298.40 725.10,298.33 724.60,298.71 724.10,298.80 723.60,298.36 723.10,299.10 722.60,298.85 722.10,298.40 721.60,299.21 721.10,298.81 720.60,298.64 720.10,298.46 719.60,299.16 719.10,298.75 718.60,298.81 718.10,298.89 717.60,298.17 717.10,298.47 716.60,297.80 716.10,297.64 715.60,297.91 715.10,297.33 714.60,297.26 714.10,297.20 713.60,297.14 713.10,296.95 712.60,296.42 712.10,295.94 711.60,295.52 711.10,295.21 710.60,294.63 710.10,294.46 709.60,294.06 709.10,293.89 708.60,293.79 708.10,292.99 707.60,292.80 707.10,292.00 706.60,291.88 706.10,291.50 705.60,290.74 705.10,289.81 704.60,289.29 704.10,288.72 703.60,288.58 703.10,287.88 702.60,287.71 702.10,287.42 701.60,287.16 701.10,286.67 700.60,286.05 700.10,285.77 699.60,285.87 699.10,285.21 698.60,284.94 698.10,285.42 697.60,285.10 697.10,285.13 696.60,285.30 696.10,284.85 695.60,285.23 695.10,286.21 694.60,287.16 694.10,287.79 693.60,288.80 693.10,290.31 692.60,291.92 692.10,293.44 691.60,296.02 691.10,298.46 690.60,301.40 690.10,304.60 689.60,307.95 689.10,311.54 688.60,316.43 688.10,323.29 687.60,328.07 687.10,332.26 686.60,336.14 686.10,339.83 685.60,343.77 685.10,347.81 684.60,351.69 684.10,355.78 683.60,359.64 683.10,363.67 682.60,367.97 682.10,372.06 681.60,376.08 681.10,379.93 680.60,383.36 680.10,386.43 679.60,389.36 679.10,391.84 678.60,394.30 678.10,395.32 677.60,396.25 677.10,397.25 676.60,397.33 676.10,398.23" fill="#008000" stroke="none"/>
<polyline points="676.10,396.00 676.60,395.59 677.10,395.22 677.60,394.74 678.10,394.03 678.60,392.91 679.10,391.10 679.60,388.72 680.10,385.86 680.60,382.68 681.10,379.31 681.60,375.61 682.10,371.57 682.60,367.38 683.10,363.22 683.60,359.21 684.10,355.23 684.60,351.25 685.10,347.28 685.60,343.30 686.10,339.40 686.60,335.56 687.10,331.68 687.60,327.63 688.10,322.97 688.60,316.00 689.10,311.10 689.60,307.43 690.10,304.01 690.60,300.81 691.10,297.83 691.60,295.10 692.10,292.70 692.60,290.73 693.10,289.10 693.60,287.73 694.10,286.56 694.60,285.53 695.10,284.58 695.60,283.71 696.10,283.06 696.60,282.79 697.10,282.77 697.60,282.81 698.10,282.91 698.60,283.06 699.10,283.26 699.60,283.49 700.10,283.75 700.60,284.05 701.10,284.37 701.60,284.72 702.10,285.10 702.60,285.52 703.10,286.00 703.60,286.51 704.10,287.05 704.60,287.60 705.10,288.16 705.60,288.71 706.10,289.24 706.60,289.76 707.10,290.25 707.60,290.70 708.10,291.12 708.60,291.51 709.10,291.89 709.60,292.25 710.10,292.61 710.60,292.95 711.10,293.29 711.60,293.61 712.10,293.92 712.60,294.22 713.10,294.51 713.60,294.79 714.10,295.05 714.60,295.29 715.10,295.52 715.60,295.72 716.10,295.91 716.60,296.07 717.10,296.22 717.60,296.34 718.10,296.44 718.60,296.52 719.10,296.58 719.60,296.62 720.10,296.65 720.60,296.66 721.10,296.66 721.60,296.65 722.10,296.63 722.60,296.61 723.10,296.57 723.60,296.53 724.10,296.47 724.60,296.40 725.10,296.32 725.60,296.23 726.10,296.13 726.60,296.03 727.10,295.92 727.60,295.81 728.10,295.70 728.60,295.58 729.10,295.46 729.60,295.34 730.10,295.23 730.60,295.11 731.10,295.00 731.60,294.89 732.10,294.77 732.60,294.64 733.10,294.51 733.60,294.38 734.10,294.25 734.60,294.12 735.10,293.98 735.60,293.85 736.10,293.71 736.60,293.58 737.10,293.45 737.60,293.32 738.10,293.19 738.60,293.07 739.10,292.95 739.60,292.83 740.10,292.72 740.60,292.62 741.10,292.52 741.60,292.43 742.10,292.34 742.60,292.26 743.10,292.18 743.60,292.11 744.10,292.03 744.60,291.96 745.10,291.88 745.60,291.81 746.10,291.73 746.60,291.65 747.10,291.57 747.60,291.48 748.10,291.39 748.60,291.29 749.10,291.19 749.60,291.09 750.10,290.98 750.60,290.86 751.10,290.74 751.60,290.61 752.10,290.47 752.60,290.34 753.10,290.20 753.60,290.06 754.10,289.91 754.60,289.77 755.10,289.62 755.60,289.48 756.10,289.33 756.60,289.19 757.10,289.04 757.60,288.90 758.10,288.76 758.60,288.62 759.10,288.49 759.60,288.36 760.10,288.23 760.60,288.10 761.10,287.98 761.60,287.87 762.10,287.76 762.60,287.66 763.10,287.56 763.60,287.47 764.10,287.37 764.60,287.28 765.10,287.19 765.60,287.11 766.10,287.02 766.60,286.94 767.10,286.86 767.60,286.79 768.10,286.71 768.60,286.64 769.10,286.58 769.60,286.51 770.10,286.45 770.60,286.39 771.10,286.33 771.60,286.28 772.10,286.23 772.60,286.18 773.10,286.13 773.60,286.09 774.10,286.05 774.60,286.01 775.10,285.98 775.60,285.94 776.10,285.91 776.60,285.88 777.10,285.84 777.60,285.81 778.10,285.78 778.60,285.75 779.10,285.73 779.60,285.71 780.10,285.69 780.60,285.67 781.10,285.66 781.60,285.65 782.10,285.65 782.60,285.66 783.10,285.66 783.60,285.68 784.10,285.70 784.60,285.73 785.10,285.76 785.60,285.81 786.10,285.86 786.60,285.92 787.10,285.99 787.60,286.06 788.10,286.15 788.60,286.24 789.10,286.34 789.60,286.45 790.10,286.56 790.60,286.68 791.10,286.81 791.60,286.94 792.10,287.08 792.60,287.22 793.10,287.37 793.60,287.53 794.10,287.68 794.60,287.85 795.10,288.02 795.60,288.19 796.10,288.37 796.60,288.55 797.10,288.73 797.60,288.92 798.10,289.11 798.60,289.31 799.10,289.50 799.60,289.70 800.10,289.90 800.60,290.12 801.10,290.33 801.60,290.56 802.10,290.79 802.60,291.03 803.10,291.27 803.60,291.52 804.10,291.77 804.60,292.02 805.10,292.28 805.60,292.54 806.10,292.80 806.60,293.07 807.10,293.33 807.60,293.60 808.10,293.87 808.60,294.13 809.10,294.40 809.60,294.66 810.10,294.93 810.60,295.19 811.10,295.44 811.60,295.70 812.10,295.95 812.60,296.20 813.10,296.46 813.60,296.72 814.10,296.98 814.60,297.24 815.10,297.51 815.60,297.77 816.10,298.04 816.60,298.30 817.10,298.57 817.60,298.83 818.10,299.10 818.60,299.36 819.10,299.62 819.60,299.87 820.10,300.13 820.60,300.38 821.10,300.62 821.60,300.86 822.10,301.10 822.60,301.33 823.10,301.55 823.60,301.77 824.10,301.98 824.60,302.18 825.10,302.38 825.60,302.57 826.10,302.76 826.60,302.95 827.10,303.14 827.60,303.32 828.10,303.49 828.60,303.66 829.10,303.83 829.60,304.00 830.10,304.16 830.60,304.31 831.10,304.46 831.60,304.61 832.10,304.76 832.60,304.90 833.10,305.03 833.60,305.16 834.10,305.29 834.60,305.41 835.10,305.53 835.60,305.64 836.10,305.75 836.60,305.86 837.10,305.96 837.60,306.06 838.10,306.16 838.60,306.25 839.10,306.34 839.60,306.44 840.10,306.52 840.60,306.61 841.10,306.69 841.60,306.76 842.10,306.83 842.60,306.90 843.10,306.96 843.60,307.02 844.10,307.07 844.60,307.11 845.10,307.15 845.60,307.18 846.10,307.20 846.60,307.21 847.10,307.21 847.60,307.21 848.10,307.19 848.60,307.16 849.10,307.11 849.60,307.05 850.10,306.97 850.60,306.88 851.10,306.77 851.60,306.65 852.10,306.51 852.60,306.36 853.10,306.19 853.60,306.02 854.10,305.83 854.60,305.63 855.10,305.42 855.60,305.20 856.10,304.98 856.60,304.74 857.10,304.49 857.60,304.24 858.10,303.98 858.60,303.72 859.10,303.45 859.60,303.18 860.10,302.87 860.60,302.54 861.10,302.17 861.60,301.78 862.10,301.37 862.60,300.94 863.10,300.48 863.60,300.02 864.10,299.55 864.60,299.09 865.10,298.65 865.60,298.23 866.10,297.75 866.60,297.18 867.10,296.57 867.60,296.04 868.10,295.79 868.60,295.90 869.10,296.20 869.60,296.59 870.10,297.21 870.60,298.20 871.10,299.74 871.60,302.10 872.10,305.63 872.60,310.38 873.10,316.08 873.60,322.20 874.10,328.18 874.60,334.36 875.10,340.86 875.60,347.50 876.10,354.10 876.60,360.43 877.10,366.45 877.60,372.29 878.10,378.04" fill="none" stroke="#008000" stroke-width="1.1"/>
<polyline points="676.10,395.90 677.40,395.89 678.70,392.72 680.00,385.95 681.30,377.99 682.60,367.40 683.90,356.63 685.20,346.20 686.50,336.25 687.80,325.80 689.10,311.08 690.40,301.65 691.70,294.21 693.00,289.73 694.30,286.24 695.60,284.30 696.90,282.52 698.20,282.20 699.50,284.33 700.80,283.35 702.10,283.85 703.40,285.95 704.70,287.58 706.00,288.35 707.30,291.70 708.60,290.74 709.90,291.37 711.20,293.82 712.50,293.12 713.80,294.24 715.10,295.26 716.40,295.32 717.70,296.82 719.00,295.47 720.30,297.09 721.60,295.47 722.90,296.83 724.20,297.92 725.50,297.12 726.80,297.34 728.10,295.84 729.40,294.35 730.70,294.70 732.00,295.63 733.30,293.35 734.60,294.61 735.90,293.23 737.20,294.69 738.50,292.64 739.80,292.25 741.10,291.83 742.40,292.42 743.70,293.47 745.00,292.02 746.30,292.43 747.60,291.54 748.90,289.96 750.20,291.22 751.50,290.92 752.80,290.57 754.10,289.30 755.40,288.83 756.70,288.64 758.00,287.37 759.30,287.41 760.60,287.46 761.90,287.84 763.20,288.80 764.50,287.91 765.80,287.12 767.10,287.52 768.40,286.50 769.70,285.12 771.00,286.91 772.30,286.84 773.60,286.57 774.90,287.07 776.20,286.77 777.50,286.82 778.80,284.36 780.10,287.22 781.40,285.93 782.70,285.94 784.00,286.04 785.30,285.08 786.60,285.32 787.90,287.26 789.20,286.67 790.50,288.05 791.80,286.11 793.10,287.63 794.40,288.09 795.70,286.83 797.00,289.08 798.30,288.84 799.60,289.49 800.90,289.31 802.20,291.12 803.50,291.98 804.80,293.29 806.10,293.81 807.40,294.91 808.70,295.59 810.00,295.47 811.30,294.90 812.60,296.32 813.90,295.64 815.20,297.76 816.50,297.68 817.80,299.05 819.10,300.36 820.40,298.97 821.70,302.03 823.00,300.13 824.30,302.03 825.60,301.73 826.90,301.67 828.20,303.46 829.50,303.24 830.80,303.10 832.10,305.74 833.40,304.34 834.70,306.77 836.00,306.06 837.30,305.56 838.60,304.91 839.90,307.57 841.20,305.51 842.50,307.73 843.80,307.13 845.10,307.01 846.40,305.92 847.70,306.96 849.00,305.64 850.30,307.74 851.60,307.28 852.90,305.16 854.20,305.82 855.50,304.29 856.80,305.27 858.10,303.06 859.40,302.32 860.70,301.84 862.00,302.78 863.30,301.18 864.60,298.82 865.90,298.75 867.20,296.09 868.50,294.94 869.80,297.87 871.10,299.10 872.40,308.66 873.70,323.62 875.00,339.37 876.30,356.81 877.60,372.44" fill="none" stroke="#fff" stroke-width="0.35" opacity="0.45"/>
<line x1="722.7" y1="308.5" x2="722.7" y2="296.6" stroke="#0000ff" stroke-width="1.2"/>
<line x1="722.7" y1="296.6" x2="722.7" y2="256.1" stroke="#008000" stroke-width="1.2"/>
<line x1="676.6" y1="423.5" x2="676.6" y2="401" stroke="#0000ff" stroke-width="1.2"/>
</g>
<line x1="676.10" y1="442.3" x2="676.10" y2="439.3" stroke="#333" stroke-width="0.8"/>
<line x1="676.10" y1="254.75" x2="676.10" y2="257.75" stroke="#333" stroke-width="0.8"/>
<line x1="700.79" y1="442.3" x2="700.79" y2="439.3" stroke="#333" stroke-width="0.8"/>
<line x1="700.79" y1="254.75" x2="700.79" y2="257.75" stroke="#333" stroke-width="0.8"/>
<line x1="725.49" y1="442.3" x2="725.49" y2="439.3" stroke="#333" stroke-width="0.8"/>
<line x1="725.49" y1="254.75" x2="725.49" y2="257.75" stroke="#333" stroke-width="0.8"/>
<line x1="750.18" y1="442.3" x2="750.18" y2="439.3" stroke="#333" stroke-width="0.8"/>
<line x1="750.18" y1="254.75" x2="750.18" y2="257.75" stroke="#333" stroke-width="0.8"/>
<line x1="774.88" y1="442.3" x2="774.88" y2="439.3" stroke="#333" stroke-width="0.8"/>
<line x1="774.88" y1="254.75" x2="774.88" y2="257.75" stroke="#333" stroke-width="0.8"/>
<line x1="799.57" y1="442.3" x2="799.57" y2="439.3" stroke="#333" stroke-width="0.8"/>
<line x1="799.57" y1="254.75" x2="799.57" y2="257.75" stroke="#333" stroke-width="0.8"/>
<line x1="824.27" y1="442.3" x2="824.27" y2="439.3" stroke="#333" stroke-width="0.8"/>
<line x1="824.27" y1="254.75" x2="824.27" y2="257.75" stroke="#333" stroke-width="0.8"/>
<line x1="848.96" y1="442.3" x2="848.96" y2="439.3" stroke="#333" stroke-width="0.8"/>
<line x1="848.96" y1="254.75" x2="848.96" y2="257.75" stroke="#333" stroke-width="0.8"/>
<line x1="873.66" y1="442.3" x2="873.66" y2="439.3" stroke="#333" stroke-width="0.8"/>
<line x1="873.66" y1="254.75" x2="873.66" y2="257.75" stroke="#333" stroke-width="0.8"/>
<line x1="676.1" y1="442.30" x2="679.1" y2="442.30" stroke="#333" stroke-width="0.8"/>
<line x1="878.4" y1="442.30" x2="875.4" y2="442.30" stroke="#333" stroke-width="0.8"/>
<line x1="676.1" y1="418.86" x2="679.1" y2="418.86" stroke="#333" stroke-width="0.8"/>
<line x1="878.4" y1="418.86" x2="875.4" y2="418.86" stroke="#333" stroke-width="0.8"/>
<line x1="676.1" y1="395.41" x2="679.1" y2="395.41" stroke="#333" stroke-width="0.8"/>
<line x1="878.4" y1="395.41" x2="875.4" y2="395.41" stroke="#333" stroke-width="0.8"/>
<line x1="676.1" y1="371.97" x2="679.1" y2="371.97" stroke="#333" stroke-width="0.8"/>
<line x1="878.4" y1="371.97" x2="875.4" y2="371.97" stroke="#333" stroke-width="0.8"/>
<line x1="676.1" y1="348.52" x2="679.1" y2="348.52" stroke="#333" stroke-width="0.8"/>
<line x1="878.4" y1="348.52" x2="875.4" y2="348.52" stroke="#333" stroke-width="0.8"/>
<line x1="676.1" y1="325.08" x2="679.1" y2="325.08" stroke="#333" stroke-width="0.8"/>
<line x1="878.4" y1="325.08" x2="875.4" y2="325.08" stroke="#333" stroke-width="0.8"/>
<line x1="676.1" y1="301.64" x2="679.1" y2="301.64" stroke="#333" stroke-width="0.8"/>
<line x1="878.4" y1="301.64" x2="875.4" y2="301.64" stroke="#333" stroke-width="0.8"/>
<line x1="676.1" y1="278.19" x2="679.1" y2="278.19" stroke="#333" stroke-width="0.8"/>
<line x1="878.4" y1="278.19" x2="875.4" y2="278.19" stroke="#333" stroke-width="0.8"/>
<line x1="676.1" y1="254.75" x2="679.1" y2="254.75" stroke="#333" stroke-width="0.8"/>
<line x1="878.4" y1="254.75" x2="875.4" y2="254.75" stroke="#333" stroke-width="0.8"/>
<rect x="676.1" y="254.75" width="202.29999999999995" height="187.55" fill="none" stroke="#444" stroke-width="1.2"/>
<rect x="841.40" y="258.25" width="33.10" height="19.10" fill="#fff" stroke="#222" stroke-width="1"/>
<line x1="845.10" y1="263.95" x2="856.20" y2="263.95" stroke="#0000ff" stroke-width="1" opacity="0.6"/>
<line x1="845.10" y1="272.25" x2="856.20" y2="272.25" stroke="#008000" stroke-width="1" opacity="0.7"/>
<text x="860.00" y="266.35" class="lg" textLength="9" lengthAdjust="spacingAndGlyphs">XX</text>
<text x="860.00" y="274.65" class="lg" textLength="9" lengthAdjust="spacingAndGlyphs">YY</text>
<text x="776.55" y="247.45" class="ti" text-anchor="middle">339p884_S</text>
<text x="676.10" y="451.70" class="tk" text-anchor="middle" textLength="5.10" lengthAdjust="spacingAndGlyphs">0</text>
<text x="700.79" y="451.70" class="tk" text-anchor="middle" textLength="20.40" lengthAdjust="spacingAndGlyphs">1000</text>
<text x="725.49" y="451.70" class="tk" text-anchor="middle" textLength="20.40" lengthAdjust="spacingAndGlyphs">2000</text>
<text x="750.18" y="451.70" class="tk" text-anchor="middle" textLength="20.40" lengthAdjust="spacingAndGlyphs">3000</text>
<text x="774.88" y="451.70" class="tk" text-anchor="middle" textLength="20.40" lengthAdjust="spacingAndGlyphs">4000</text>
<text x="799.57" y="451.70" class="tk" text-anchor="middle" textLength="20.40" lengthAdjust="spacingAndGlyphs">5000</text>
<text x="824.27" y="451.70" class="tk" text-anchor="middle" textLength="20.40" lengthAdjust="spacingAndGlyphs">6000</text>
<text x="848.96" y="451.70" class="tk" text-anchor="middle" textLength="20.40" lengthAdjust="spacingAndGlyphs">7000</text>
<text x="873.66" y="451.70" class="tk" text-anchor="middle" textLength="20.40" lengthAdjust="spacingAndGlyphs">8000</text>
<text x="777.2" y="464.70" class="al" text-anchor="middle">Channel</text>
<text x="657.70" y="349.92" class="al fl" text-anchor="middle" transform="rotate(-90 657.70 349.92)">Flux (Jy)</text>
</svg>
<svg class="abs" style="left:386px;top:490px" width="160" height="32" viewBox="386 490 160 32">
<defs>
<radialGradient id="tealg" cx="0.38" cy="0.3" r="0.75">
<stop offset="0" stop-color="#7fe0f0"/><stop offset="0.35" stop-color="#1aa0c0"/><stop offset="1" stop-color="#0a6a88"/>
</radialGradient>
<linearGradient id="doorg" x1="0" y1="0" x2="0" y2="1"><stop offset="0" stop-color="#ffe08a"/><stop offset="1" stop-color="#eea020"/></linearGradient>
<linearGradient id="flopg" x1="0" y1="0" x2="0" y2="1"><stop offset="0" stop-color="#3a80a8"/><stop offset="1" stop-color="#1c5a80"/></linearGradient>
</defs>
<g id="btns">
<!-- button bevels -->
<g fill="#e7e7e7">
<rect x="391.5" y="496.5" width="21.5" height="22"/>
<rect x="415.5" y="496.5" width="21.5" height="22"/>
<rect x="439.6" y="496.5" width="21.5" height="22"/>
<rect x="463.6" y="496.5" width="21.5" height="22"/>
<rect x="487.7" y="496.5" width="21.5" height="22"/>
<rect x="511.8" y="496.5" width="21.5" height="22"/>
</g>
<g fill="none" stroke="#fafafa" stroke-width="1">
<path d="M392 518 V497 H412.5"/><path d="M416 518 V497 H436.5"/><path d="M440.1 518 V497 H460.6"/><path d="M464.1 518 V497 H484.6"/><path d="M488.2 518 V497 H508.7"/><path d="M512.3 518 V497 H532.8"/>
</g>
<g fill="none" stroke="#8a8a8a" stroke-width="1.4">
<path d="M392.5 518.3 H412.8 V497.5"/><path d="M416.5 518.3 H436.8 V497.5"/><path d="M440.6 518.3 H460.9 V497.5"/><path d="M464.6 518.3 H484.9 V497.5"/><path d="M488.7 518.3 H509 V497.5"/><path d="M512.8 518.3 H533.1 V497.5"/>
</g>
</g>
<!-- home -->
<rect x="396.8" y="503.8" width="11.4" height="12.4" fill="#e2e6e8" stroke="#8c989c" stroke-width="0.9"/>
<rect x="399.6" y="507.2" width="5" height="8.6" rx="1" fill="url(#doorg)" stroke="#c07818" stroke-width="0.6"/>
<rect x="397.2" y="500.3" width="2.3" height="4.2" fill="#e8a060"/>
<path d="M394.2 509 L402.3 500.6 L410.4 509" fill="none" stroke="#b8203c" stroke-width="2.6" stroke-linejoin="miter"/>
<!-- back -->
<circle cx="426.2" cy="507.6" r="7.4" fill="url(#tealg)"/>
<path d="M421.6 507.6 L426.4 503 V505.6 H430.6 V509.6 H426.4 V512.2 Z" fill="#d0ecf2"/>
<!-- forward -->
<circle cx="450.3" cy="507.6" r="7.4" fill="url(#tealg)"/>
<path d="M455 507.6 L450.2 503 V505.6 H446 V509.6 H450.2 V512.2 Z" fill="#d0ecf2"/>
<!-- pan -->
<g fill="#1a5a78">
<rect x="466.8" y="506.7" width="14.6" height="1.9"/>
<rect x="473.1" y="500.5" width="1.9" height="14.4"/>
<path d="M465.6 507.65 L469.4 504.4 V510.9Z"/>
<path d="M482.5 507.65 L478.7 504.4 V510.9Z"/>
<path d="M474.05 499.3 L470.8 503.1 H477.3Z"/>
<path d="M474.05 515.9 L470.8 512.1 H477.3Z"/>
</g>
<!-- zoom rect -->
<rect x="492.2" y="505.3" width="13.6" height="9.2" fill="#fdfeff" stroke="#9fd4e4" stroke-width="0.9"/>
<circle cx="495.6" cy="507.4" r="5.2" fill="#b8e4ee" opacity="0.85"/>
<g stroke="#5aa0b4" stroke-width="0.7"><line x1="493.2" y1="505.6" x2="497.8" y2="505.6"/><line x1="493.2" y1="507.3" x2="497.8" y2="507.3"/><line x1="493.2" y1="509" x2="497.8" y2="509"/></g>
<path d="M500.3 505.4 L506.5 500.8" stroke="#f0a040" stroke-width="2.3" stroke-linecap="round"/>
<!-- save -->
<path d="M514.3 502.3 H525.3 L526.2 503.2 V513.4 H514.3Z" fill="url(#flopg)"/>
<rect x="516.9" y="502.4" width="6.8" height="4.3" fill="#d8e8f0"/>
<rect x="516.6" y="502.2" width="7.4" height="0.9" fill="#e8a050"/>
<rect x="517.6" y="509.6" width="5" height="3.8" fill="#0e3450"/>
<rect x="520.3" y="510.3" width="1.2" height="2.6" fill="#8ab0c8"/>
</svg>


</body></html>
